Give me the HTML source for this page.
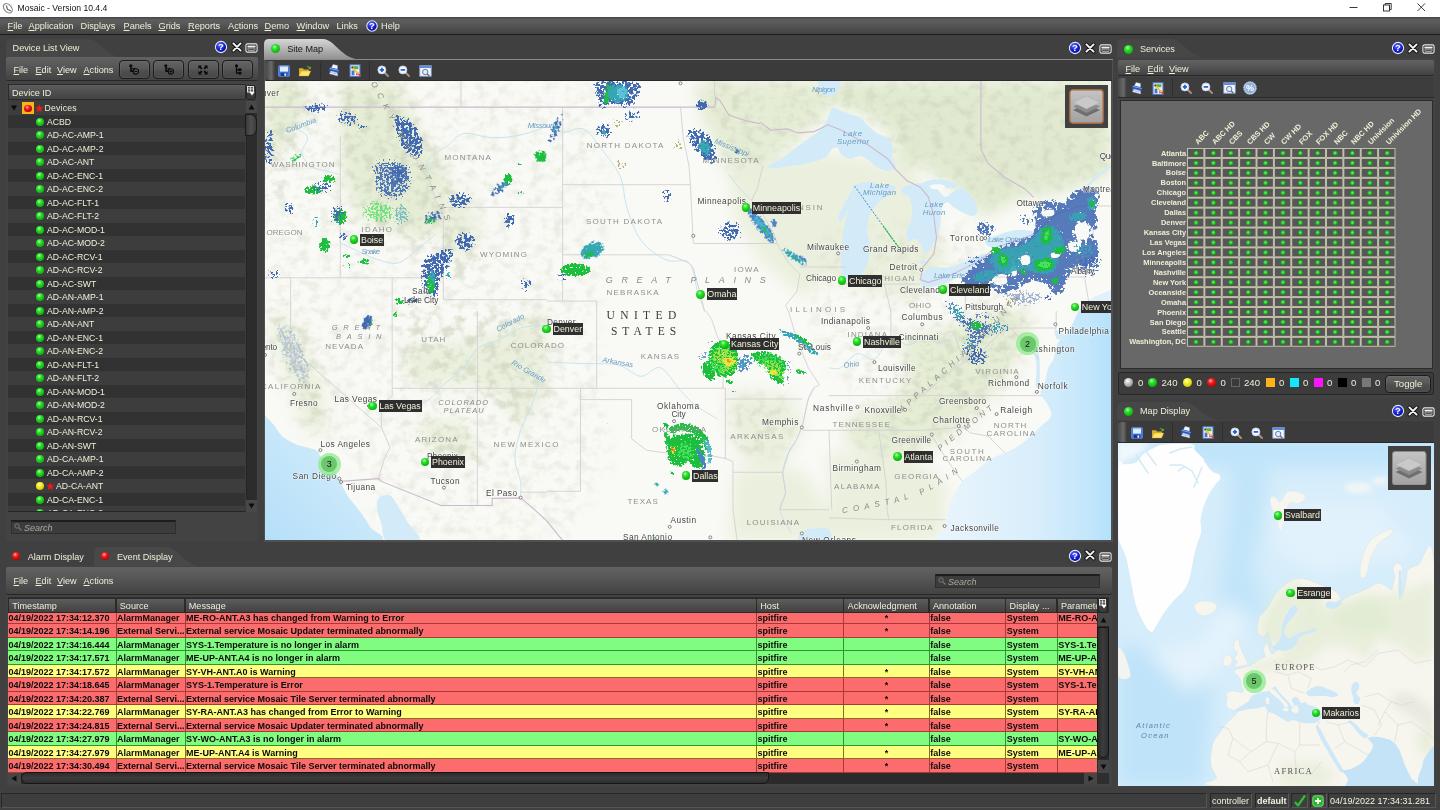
<!DOCTYPE html>
<html lang="en"><head><meta charset="utf-8"><title>Mosaic - Version 10.4.4</title>
<style>
*{box-sizing:border-box;margin:0;padding:0}
html,body{width:1440px;height:810px;overflow:hidden;background:#404040}
body{font-family:"Liberation Sans",sans-serif;font-size:9px;color:#ecebd6;position:relative;opacity:.9999}
.a{position:absolute}
.t{position:absolute;white-space:nowrap;line-height:12px}
u{text-decoration:underline;text-underline-offset:1px}
#title{left:0;top:0;width:1440px;height:17px;background:#fff;color:#111}
#menubar{left:0;top:17px;width:1440px;height:18px;background:linear-gradient(#444 0,#5e5e5e 16%,#585858 40%,#4b4b4b 75%,#434343);border-bottom:1px solid #1c1c1c}
#menubar .t{top:3px;font-size:9.2px;color:#efeed8}
.panel{position:absolute;background:#424242}
.tabstrip{position:absolute;height:19px}
.pmenu{position:absolute;background:linear-gradient(#626262,#575757 40%,#4b4b4b 75%,#434343);border-bottom:1px solid #262626;border-radius:2px}
.pmenu .t{color:#efeed8}
.tool{position:absolute;background:#3d3d3d;border-bottom:1px solid #2a2a2a}
.btn{position:absolute;border:1px solid #1c1c1c;border-radius:4px;background:linear-gradient(#646464,#585858 45%,#4e4e4e 60%,#484848);box-shadow:inset 0 0 0 1px rgba(255,255,255,.05)}
.hdr{position:absolute;background:linear-gradient(#5e5e5e,#4e4e4e 50%,#434343);border:1px solid #2a2a2a;color:#efeed8}
.dot{position:absolute;border-radius:50%}
.g{background:radial-gradient(circle at 40% 32%,#b4ffb4 0,#2fe02f 28%,#12c212 60%,#0a8a0a 100%)}
.r{background:radial-gradient(circle at 40% 32%,#ffb4b4 0,#f02020 30%,#d00808 60%,#800 100%)}
.y{background:radial-gradient(circle at 40% 32%,#ffffc8 0,#f4f030 30%,#e0d810 60%,#8a8400 100%)}
.w{background:radial-gradient(circle at 40% 32%,#fff 0,#d0d0d0 30%,#a8a8a8 60%,#666 100%)}
.lbl{position:absolute;background:#2f2f2f;color:#f1f0d8;font-size:8.9px;line-height:12px;height:12px;padding:0 .8px;white-space:nowrap}
.search{position:absolute;background:#3c3c3c;border:1px solid #2e2e2e;border-top:2px solid #1e1e1e;color:#a8a898;font-style:italic;font-size:9px}
</style></head>
<body>

<div class="a" id="title">
<svg class="a" style="left:1.5px;top:2px" width="12" height="13" viewBox="0 0 12 13"><ellipse cx="5.800" cy="6.200" rx="3.600" ry="5.300" transform="rotate(-42 5.800 6.200)" fill="none" stroke="#8c8c8c" stroke-width="1.200"/><path d="M4.400 3.400 q.2 2.600 1.400 4.200 q1.600 .2 3 1.400" fill="none" stroke="#777" stroke-width="1.300"/><path d="M8.600 3.200 l1.600-1" stroke="#bbb" stroke-width=".7"/></svg>
<div class="t" style="left:17.5px;top:1.8px;font-size:8.6px;color:#111">Mosaic - Version 10.4.4</div>
<svg class="a" style="left:1347.5px;top:2.3px" width="12" height="11" viewBox="0 0 12 11"><path d="M1.500 5.500 h8" stroke="#222" stroke-width=".9"/></svg>
<svg class="a" style="left:1381.5px;top:2.3px" width="12" height="11" viewBox="0 0 12 11"><rect x="1.500" y="3" width="6" height="6" fill="none" stroke="#222" stroke-width=".9"/><path d="M3.200 3 v-1.500 h6 v6 h-1.500" fill="none" stroke="#222" stroke-width=".9"/></svg>
<svg class="a" style="left:1416px;top:2.3px" width="12" height="11" viewBox="0 0 12 11"><path d="M1.500 1.500 L9 9 M9 1.500 L1.500 9" stroke="#222" stroke-width=".9"/></svg>
</div>
<div class="a" id="menubar">
<div class="t" style="left:7.5px;top:3px;"><u>F</u>ile</div>
<div class="t" style="left:28.5px;top:3px;"><u>A</u>pplication</div>
<div class="t" style="left:80.5px;top:3px;">Dis<u>p</u>lays</div>
<div class="t" style="left:123.5px;top:3px;"><u>P</u>anels</div>
<div class="t" style="left:158.5px;top:3px;"><u>G</u>rids</div>
<div class="t" style="left:188px;top:3px;"><u>R</u>eports</div>
<div class="t" style="left:228px;top:3px;">A<u>c</u>tions</div>
<div class="t" style="left:264.5px;top:3px;"><u>D</u>emo</div>
<div class="t" style="left:296.5px;top:3px;"><u>W</u>indow</div>
<div class="t" style="left:336.5px;top:3px;">Links</div>
<div class="t" style="left:381px;top:3px;">Help</div>
<svg class="a" style="left:364.5px;top:1.5px" width="14" height="14" viewBox="0 0 14 14"><defs><radialGradient id="hg371_8" cx="40%" cy="30%" r="75%"><stop offset="0" stop-color="#5a6cff"/><stop offset=".55" stop-color="#1420d8"/><stop offset="1" stop-color="#060a80"/></radialGradient></defs><circle cx="7" cy="7" r="5.2" fill="url(#hg371_8)" stroke="#e8e8f4" stroke-width="1.1"/><text x="7" y="10.3" text-anchor="middle" font-family="Liberation Sans,sans-serif" font-weight="bold" font-size="9.5" fill="#fff">?</text></svg>
</div>
<div class="a" style="left:0;top:789px;width:1440px;height:21px;background:#404040"></div>
<div class="a" style="left:1px;top:793px;width:1206px;height:15px;background:#3e3e3e;border:1px solid #262626;border-right-color:#555;border-bottom-color:#555"></div>
<div class="a" style="left:1210px;top:793px;width:42px;height:15px;background:#3e3e3e;border:1px solid #262626;border-right-color:#585858;border-bottom-color:#585858"></div><div class="t" style="left:1212px;top:794.5px;color:#f2f2e2;font-size:9px;">controller</div>
<div class="a" style="left:1255px;top:793px;width:34px;height:15px;background:#3e3e3e;border:1px solid #262626;border-right-color:#585858;border-bottom-color:#585858"></div><div class="t" style="left:1257px;top:794.5px;color:#f2f2e2;font-size:9px;font-weight:bold;">default</div>
<div class="a" style="left:1291px;top:793px;width:17px;height:15px;background:#3e3e3e;border:1px solid #262626;border-right-color:#585858;border-bottom-color:#585858"></div><div class="t" style="left:1293px;top:794.5px;color:#f2f2e2;font-size:9px;"></div>
<svg class="a" style="left:1293px;top:794px" width="14" height="13" viewBox="0 0 14 13"><path d="M2 8 L5 11.500 L12 1.500" fill="none" stroke="#2fc02f" stroke-width="2.200" stroke-linejoin="round"/></svg>
<div class="a" style="left:1310px;top:793px;width:17px;height:15px;background:#3e3e3e;border:1px solid #262626;border-right-color:#585858;border-bottom-color:#585858"></div><div class="t" style="left:1312px;top:794.5px;color:#f2f2e2;font-size:9px;"></div>
<svg class="a" style="left:1312px;top:795px" width="12" height="12" viewBox="0 0 12 12"><rect x=".8" y=".8" width="10.400" height="10.400" rx="2" fill="#25b825" stroke="#9be89b" stroke-width=".8"/><path d="M3 6 h6 M6 3 v6" stroke="#fff" stroke-width="1.800"/></svg>
<div class="a" style="left:1328px;top:793px;width:108px;height:15px;background:#3e3e3e;border:1px solid #262626;border-right-color:#585858;border-bottom-color:#585858"></div><div class="t" style="left:1330px;top:794.5px;color:#f2f2e2;font-size:9px;">04/19/2022 17:34:31.281</div>
<svg class="a" style="left:6px;top:39px" width="120" height="19" viewBox="0 0 120 19"><path d="M0 19 V5 Q0 0 5 0 H82 C94 0 100 19 120 19 Z" fill="#474747"/></svg>
<div class="t" style="left:12.6px;top:41.5px;font-size:9.15px;color:#efeed8">Device List View</div>
<svg class="a" style="left:214px;top:40px" width="14" height="14" viewBox="0 0 14 14"><defs><radialGradient id="hg221_47" cx="40%" cy="30%" r="75%"><stop offset="0" stop-color="#5a6cff"/><stop offset=".55" stop-color="#1420d8"/><stop offset="1" stop-color="#060a80"/></radialGradient></defs><circle cx="7" cy="7" r="5.6" fill="url(#hg221_47)" stroke="#e8e8f4" stroke-width="1.1"/><text x="7" y="10.3" text-anchor="middle" font-family="Liberation Sans,sans-serif" font-weight="bold" font-size="9.5" fill="#fff">?</text></svg><svg class="a" style="left:230.5px;top:40.5px" width="12" height="12" viewBox="0 0 12 12"><path d="M2.400 2.400 L9.600 9.600 M9.600 2.400 L2.400 9.600" stroke="#161616" stroke-width="3.800" stroke-linecap="round"/><path d="M2.400 2.400 L9.600 9.600 M9.600 2.400 L2.400 9.600" stroke="#f6f6f6" stroke-width="1.900" stroke-linecap="round"/></svg><svg class="a" style="left:245.0px;top:43px" width="13" height="10" viewBox="0 0 13 10"><rect x=".9" y=".9" width="11.200" height="8.200" rx="1.600" fill="#2c2c2c" stroke="#e8e8e8" stroke-width="1.100"/><rect x="2.400" y="2.600" width="8.200" height="1.800" fill="#f0f0f0"/><rect x="2.900" y="5" width="7.200" height="2.400" rx=".6" fill="#4a4a4a" stroke="#d8d8d8" stroke-width=".7"/></svg>
<div class="panel" style="left:6px;top:57px;width:252px;height:484px;background:#434343"></div>
<div class="pmenu" style="left:6px;top:57px;width:252px;height:24px"></div>
<div class="t" style="left:13.5px;top:63.5px;color:#efeed8;font-size:9.1px"><u>F</u>ile</div>
<div class="t" style="left:35.5px;top:63.5px;color:#efeed8;font-size:9.1px"><u>E</u>dit</div>
<div class="t" style="left:57px;top:63.5px;color:#efeed8;font-size:9.1px"><u>V</u>iew</div>
<div class="t" style="left:83.5px;top:63.5px;color:#efeed8;font-size:9.1px"><u>A</u>ctions</div>
<div class="btn" style="left:118.5px;top:60px;width:31px;height:19px"></div><svg class="a" style="left:129.0px;top:64.3px" width="10" height="10.8" viewBox="0 0 12 13"><circle cx="2.200" cy="2.200" r="1.900" fill="#0a0a0a"/><path d="M2.200 3.500 V9 H5" fill="none" stroke="#0a0a0a" stroke-width="1.500"/><rect x="3.200" y="5.200" width="3.400" height="3" fill="none" stroke="#0a0a0a" stroke-width="1"/><circle cx="8.300" cy="9" r="3.200" fill="#555" stroke="#0a0a0a" stroke-width="1.300"/><path d="M6.500 9 h3.600" stroke="#0a0a0a" stroke-width="1.200"/></svg>
<div class="btn" style="left:153px;top:60px;width:31px;height:19px"></div><svg class="a" style="left:163.5px;top:64.3px" width="10" height="10.8" viewBox="0 0 12 13"><circle cx="2.200" cy="2.200" r="1.900" fill="#0a0a0a"/><path d="M2.200 3.500 V9 H5" fill="none" stroke="#0a0a0a" stroke-width="1.500"/><rect x="3.200" y="5.200" width="3.400" height="3" fill="none" stroke="#0a0a0a" stroke-width="1"/><circle cx="8.300" cy="9" r="3.200" fill="#555" stroke="#0a0a0a" stroke-width="1.300"/><path d="M6.500 9 h3.600" stroke="#0a0a0a" stroke-width="1.200"/><path d="M8.300 7.200 v3.600" stroke="#0a0a0a" stroke-width="1.200"/></svg>
<div class="btn" style="left:187.5px;top:60px;width:31px;height:19px"></div><svg class="a" style="left:198.0px;top:64.5px" width="10" height="10" viewBox="0 0 12 12"><path d="M.5 .5 h4.200 l-1.300 1.300 l2 2 l-1.600 1.600 l-2-2 l-1.300 1.300z M11.500 .5 v4.200 l-1.300-1.300 l-2 2 l-1.600-1.600 l2-2 l-1.300-1.300z M.5 11.500 v-4.200 l1.300 1.300 l2-2 l1.600 1.600 l-2 2 l1.300 1.300z M11.500 11.500 h-4.200 l1.300-1.300 l-2-2 l1.600-1.600 l2 2 l1.300-1.300z" fill="#0a0a0a"/></svg>
<div class="btn" style="left:222px;top:60px;width:31px;height:19px"></div><svg class="a" style="left:232.5px;top:64.3px" width="10" height="10.8" viewBox="0 0 12 13"><circle cx="4.200" cy="2.200" r="1.900" fill="#0a0a0a"/><path d="M4.200 3.500 V11 H7 M4.200 7 H7" fill="none" stroke="#0a0a0a" stroke-width="1.500"/><rect x="6.500" y="5.200" width="3.600" height="3.200" fill="#0a0a0a"/><rect x="6.500" y="9.400" width="3.600" height="3.200" fill="#0a0a0a"/></svg>
<div class="hdr" style="left:8px;top:84px;width:238px;height:16px"></div>
<div class="t" style="left:12px;top:86.5px;color:#efeed8;font-size:9.1px">Device ID</div>
<div class="a" style="left:246px;top:85px;width:10px;height:15px;background:#3a3a3a;border:1px solid #222;border-radius:3px"></div><svg class="a" style="left:247px;top:86px" width="8" height="11" viewBox="0 0 8 11"><rect x=".5" y=".5" width="6" height="5.500" fill="#555" stroke="#eee" stroke-width=".9"/><path d="M.5 3 h6 M3.500 .5 v5.500" stroke="#eee" stroke-width=".7"/><path d="M2.500 6 h5 l-2.500 3.500z" fill="#fff"/></svg>
<div class="a" style="left:8px;top:100px;width:249px;height:412px;background:#3c3c3c;overflow:hidden;border-bottom:1px solid #262626">
<div class="a" style="left:0;top:1.25px;width:237px;height:13.5px;background:#3d3d3d"></div>
<div class="a" style="left:0;top:14.75px;width:237px;height:13.5px;background:#323232"></div>
<div class="a" style="left:0;top:28.25px;width:237px;height:13.5px;background:#3d3d3d"></div>
<div class="a" style="left:0;top:41.75px;width:237px;height:13.5px;background:#323232"></div>
<div class="a" style="left:0;top:55.25px;width:237px;height:13.5px;background:#3d3d3d"></div>
<div class="a" style="left:0;top:68.75px;width:237px;height:13.5px;background:#323232"></div>
<div class="a" style="left:0;top:82.25px;width:237px;height:13.5px;background:#3d3d3d"></div>
<div class="a" style="left:0;top:95.75px;width:237px;height:13.5px;background:#323232"></div>
<div class="a" style="left:0;top:109.25px;width:237px;height:13.5px;background:#3d3d3d"></div>
<div class="a" style="left:0;top:122.75px;width:237px;height:13.5px;background:#323232"></div>
<div class="a" style="left:0;top:136.25px;width:237px;height:13.5px;background:#3d3d3d"></div>
<div class="a" style="left:0;top:149.75px;width:237px;height:13.5px;background:#323232"></div>
<div class="a" style="left:0;top:163.25px;width:237px;height:13.5px;background:#3d3d3d"></div>
<div class="a" style="left:0;top:176.75px;width:237px;height:13.5px;background:#323232"></div>
<div class="a" style="left:0;top:190.25px;width:237px;height:13.5px;background:#3d3d3d"></div>
<div class="a" style="left:0;top:203.75px;width:237px;height:13.5px;background:#323232"></div>
<div class="a" style="left:0;top:217.25px;width:237px;height:13.5px;background:#3d3d3d"></div>
<div class="a" style="left:0;top:230.75px;width:237px;height:13.5px;background:#323232"></div>
<div class="a" style="left:0;top:244.25px;width:237px;height:13.5px;background:#3d3d3d"></div>
<div class="a" style="left:0;top:257.75px;width:237px;height:13.5px;background:#323232"></div>
<div class="a" style="left:0;top:271.25px;width:237px;height:13.5px;background:#3d3d3d"></div>
<div class="a" style="left:0;top:284.75px;width:237px;height:13.5px;background:#323232"></div>
<div class="a" style="left:0;top:298.25px;width:237px;height:13.5px;background:#3d3d3d"></div>
<div class="a" style="left:0;top:311.75px;width:237px;height:13.5px;background:#323232"></div>
<div class="a" style="left:0;top:325.25px;width:237px;height:13.5px;background:#3d3d3d"></div>
<div class="a" style="left:0;top:338.75px;width:237px;height:13.5px;background:#323232"></div>
<div class="a" style="left:0;top:352.25px;width:237px;height:13.5px;background:#3d3d3d"></div>
<div class="a" style="left:0;top:365.75px;width:237px;height:13.5px;background:#323232"></div>
<div class="a" style="left:0;top:379.25px;width:237px;height:13.5px;background:#3d3d3d"></div>
<div class="a" style="left:0;top:392.75px;width:237px;height:13.5px;background:#323232"></div>
<div class="a" style="left:0;top:406.25px;width:237px;height:13.5px;background:#3d3d3d"></div>
<svg class="a" style="left:3px;top:5px" width="6" height="6" viewBox="0 0 6 6"><path d="M0 .5 H6 L3 5.500Z" fill="#0a0a0a"/></svg>
<div class="a" style="left:13.700px;top:2px;width:12px;height:12px;background:#fdb415"></div>
<div class="dot r" style="left:16.200px;top:4.500px;width:7.500px;height:7.500px"></div>
<svg class="a" style="left:26.5px;top:3.5px" width="8.5" height="8.5" viewBox="0 0 10 10"><path d="M5 .3 L6.300 3.600 L9.800 3.800 L7.100 6 L8 9.500 L5 7.600 L2 9.500 L2.900 6 L.2 3.800 L3.700 3.600Z" fill="#f01818"/></svg>
<div class="t" style="left:36.5px;top:2px;font-size:8.7px;color:#f1f0da;letter-spacing:.2px">Devices</div>
<div class="dot g" style="left:27.500px;top:17.5px;width:8px;height:8px"></div>
<div class="t" style="left:39px;top:15.5px;font-size:8.7px;color:#f1f0da">ACBD</div>
<div class="dot g" style="left:27.500px;top:31.0px;width:8px;height:8px"></div>
<div class="t" style="left:39px;top:29.0px;font-size:8.7px;color:#f1f0da">AD-AC-AMP-1</div>
<div class="dot g" style="left:27.500px;top:44.5px;width:8px;height:8px"></div>
<div class="t" style="left:39px;top:42.5px;font-size:8.7px;color:#f1f0da">AD-AC-AMP-2</div>
<div class="dot g" style="left:27.500px;top:58.0px;width:8px;height:8px"></div>
<div class="t" style="left:39px;top:56.0px;font-size:8.7px;color:#f1f0da">AD-AC-ANT</div>
<div class="dot g" style="left:27.500px;top:71.5px;width:8px;height:8px"></div>
<div class="t" style="left:39px;top:69.5px;font-size:8.7px;color:#f1f0da">AD-AC-ENC-1</div>
<div class="dot g" style="left:27.500px;top:85.0px;width:8px;height:8px"></div>
<div class="t" style="left:39px;top:83.0px;font-size:8.7px;color:#f1f0da">AD-AC-ENC-2</div>
<div class="dot g" style="left:27.500px;top:98.5px;width:8px;height:8px"></div>
<div class="t" style="left:39px;top:96.5px;font-size:8.7px;color:#f1f0da">AD-AC-FLT-1</div>
<div class="dot g" style="left:27.500px;top:112.0px;width:8px;height:8px"></div>
<div class="t" style="left:39px;top:110.0px;font-size:8.7px;color:#f1f0da">AD-AC-FLT-2</div>
<div class="dot g" style="left:27.500px;top:125.5px;width:8px;height:8px"></div>
<div class="t" style="left:39px;top:123.5px;font-size:8.7px;color:#f1f0da">AD-AC-MOD-1</div>
<div class="dot g" style="left:27.500px;top:139.0px;width:8px;height:8px"></div>
<div class="t" style="left:39px;top:137.0px;font-size:8.7px;color:#f1f0da">AD-AC-MOD-2</div>
<div class="dot g" style="left:27.500px;top:152.5px;width:8px;height:8px"></div>
<div class="t" style="left:39px;top:150.5px;font-size:8.7px;color:#f1f0da">AD-AC-RCV-1</div>
<div class="dot g" style="left:27.500px;top:166.0px;width:8px;height:8px"></div>
<div class="t" style="left:39px;top:164.0px;font-size:8.7px;color:#f1f0da">AD-AC-RCV-2</div>
<div class="dot g" style="left:27.500px;top:179.5px;width:8px;height:8px"></div>
<div class="t" style="left:39px;top:177.5px;font-size:8.7px;color:#f1f0da">AD-AC-SWT</div>
<div class="dot g" style="left:27.500px;top:193.0px;width:8px;height:8px"></div>
<div class="t" style="left:39px;top:191.0px;font-size:8.7px;color:#f1f0da">AD-AN-AMP-1</div>
<div class="dot g" style="left:27.500px;top:206.5px;width:8px;height:8px"></div>
<div class="t" style="left:39px;top:204.5px;font-size:8.7px;color:#f1f0da">AD-AN-AMP-2</div>
<div class="dot g" style="left:27.500px;top:220.0px;width:8px;height:8px"></div>
<div class="t" style="left:39px;top:218.0px;font-size:8.7px;color:#f1f0da">AD-AN-ANT</div>
<div class="dot g" style="left:27.500px;top:233.5px;width:8px;height:8px"></div>
<div class="t" style="left:39px;top:231.5px;font-size:8.7px;color:#f1f0da">AD-AN-ENC-1</div>
<div class="dot g" style="left:27.500px;top:247.0px;width:8px;height:8px"></div>
<div class="t" style="left:39px;top:245.0px;font-size:8.7px;color:#f1f0da">AD-AN-ENC-2</div>
<div class="dot g" style="left:27.500px;top:260.5px;width:8px;height:8px"></div>
<div class="t" style="left:39px;top:258.5px;font-size:8.7px;color:#f1f0da">AD-AN-FLT-1</div>
<div class="dot g" style="left:27.500px;top:274.0px;width:8px;height:8px"></div>
<div class="t" style="left:39px;top:272.0px;font-size:8.7px;color:#f1f0da">AD-AN-FLT-2</div>
<div class="dot g" style="left:27.500px;top:287.5px;width:8px;height:8px"></div>
<div class="t" style="left:39px;top:285.5px;font-size:8.7px;color:#f1f0da">AD-AN-MOD-1</div>
<div class="dot g" style="left:27.500px;top:301.0px;width:8px;height:8px"></div>
<div class="t" style="left:39px;top:299.0px;font-size:8.7px;color:#f1f0da">AD-AN-MOD-2</div>
<div class="dot g" style="left:27.500px;top:314.5px;width:8px;height:8px"></div>
<div class="t" style="left:39px;top:312.5px;font-size:8.7px;color:#f1f0da">AD-AN-RCV-1</div>
<div class="dot g" style="left:27.500px;top:328.0px;width:8px;height:8px"></div>
<div class="t" style="left:39px;top:326.0px;font-size:8.7px;color:#f1f0da">AD-AN-RCV-2</div>
<div class="dot g" style="left:27.500px;top:341.5px;width:8px;height:8px"></div>
<div class="t" style="left:39px;top:339.5px;font-size:8.7px;color:#f1f0da">AD-AN-SWT</div>
<div class="dot g" style="left:27.500px;top:355.0px;width:8px;height:8px"></div>
<div class="t" style="left:39px;top:353.0px;font-size:8.7px;color:#f1f0da">AD-CA-AMP-1</div>
<div class="dot g" style="left:27.500px;top:368.5px;width:8px;height:8px"></div>
<div class="t" style="left:39px;top:366.5px;font-size:8.7px;color:#f1f0da">AD-CA-AMP-2</div>
<div class="dot y" style="left:27.500px;top:382.0px;width:8px;height:8px"></div>
<svg class="a" style="left:37.5px;top:381.5px" width="8.5" height="8.5" viewBox="0 0 10 10"><path d="M5 .3 L6.300 3.600 L9.800 3.800 L7.100 6 L8 9.500 L5 7.600 L2 9.500 L2.900 6 L.2 3.800 L3.700 3.600Z" fill="#f01818"/></svg>
<div class="t" style="left:48px;top:380.0px;font-size:8.7px;color:#f1f0da">AD-CA-ANT</div>
<div class="dot g" style="left:27.500px;top:395.5px;width:8px;height:8px"></div>
<div class="t" style="left:39px;top:393.5px;font-size:8.7px;color:#f1f0da">AD-CA-ENC-1</div>
<div class="dot g" style="left:27.500px;top:409.0px;width:8px;height:8px"></div>
<div class="t" style="left:39px;top:407.0px;font-size:8.7px;color:#f1f0da">AD-CA-ENC-2</div>
</div>
<div class="a" style="left:246px;top:101px;width:11px;height:411px;background:#2c2c2c;border-left:1px solid #242424"></div><div class="a" style="left:246px;top:101px;width:11px;height:12px;background:#484848"></div><svg class="a" style="left:248px;top:104px" width="7" height="6" viewBox="0 0 7 6"><path d="M3.500 .5 L6.500 5.500 H.5Z" fill="#0c0c0c"/></svg><div class="a" style="left:246px;top:500px;width:11px;height:12px;background:#484848"></div><svg class="a" style="left:248px;top:503px" width="7" height="6" viewBox="0 0 7 6"><path d="M3.500 5.500 L6.500 .5 H.5Z" fill="#0c0c0c"/></svg><div class="a" style="left:245px;top:114px;width:12px;height:22px;background:linear-gradient(90deg,#3a3a3a,#505050 50%,#3c3c3c);border:1px solid #1a1a1a;border-radius:0 7px 7px 0"></div>
<div class="search" style="left:11px;top:520px;width:165px;height:14px"></div>
<svg class="a" style="left:14px;top:523px" width="8" height="8" viewBox="0 0 8 8"><circle cx="3" cy="3" r="2.200" fill="none" stroke="#777" stroke-width="1"/><path d="M4.600 4.600 L7.500 7.500" stroke="#777" stroke-width="1.200"/></svg>
<div class="t" style="left:24px;top:521.5px;font-style:italic;color:#aaa99a;font-size:9px">Search</div>
<svg class="a" style="left:94px;top:547px" width="112" height="20" viewBox="0 0 112 20"><path d="M0 20 V5 Q0 0 5 0 H72 C84 0 90 20 112 20 Z" fill="#484848"/></svg>
<div class="dot r" style="left:11.500px;top:552px;width:8px;height:8px"></div>
<div class="t" style="left:27.7px;top:550.5px;font-size:9.1px;color:#efeed8">Alarm Display</div>
<div class="dot r" style="left:100.500px;top:552px;width:8px;height:8px"></div>
<div class="t" style="left:117px;top:550.5px;font-size:9.1px;color:#efeed8">Event Display</div>
<svg class="a" style="left:1067.5px;top:548.5px" width="14" height="14" viewBox="0 0 14 14"><defs><radialGradient id="hg1074_555" cx="40%" cy="30%" r="75%"><stop offset="0" stop-color="#5a6cff"/><stop offset=".55" stop-color="#1420d8"/><stop offset="1" stop-color="#060a80"/></radialGradient></defs><circle cx="7" cy="7" r="5.6" fill="url(#hg1074_555)" stroke="#e8e8f4" stroke-width="1.1"/><text x="7" y="10.3" text-anchor="middle" font-family="Liberation Sans,sans-serif" font-weight="bold" font-size="9.5" fill="#fff">?</text></svg><svg class="a" style="left:1084.0px;top:549.0px" width="12" height="12" viewBox="0 0 12 12"><path d="M2.400 2.400 L9.600 9.600 M9.600 2.400 L2.400 9.600" stroke="#161616" stroke-width="3.800" stroke-linecap="round"/><path d="M2.400 2.400 L9.600 9.600 M9.600 2.400 L2.400 9.600" stroke="#f6f6f6" stroke-width="1.900" stroke-linecap="round"/></svg><svg class="a" style="left:1098.5px;top:551.5px" width="13" height="10" viewBox="0 0 13 10"><rect x=".9" y=".9" width="11.200" height="8.200" rx="1.600" fill="#2c2c2c" stroke="#e8e8e8" stroke-width="1.100"/><rect x="2.400" y="2.600" width="8.200" height="1.800" fill="#f0f0f0"/><rect x="2.900" y="5" width="7.200" height="2.400" rx=".6" fill="#4a4a4a" stroke="#d8d8d8" stroke-width=".7"/></svg>
<div class="panel" style="left:6px;top:566px;width:1106px;height:221px;background:#434343"></div>
<div class="pmenu" style="left:6px;top:567px;width:1106px;height:28px"></div>
<div class="t" style="left:13.5px;top:575px;color:#efeed8;font-size:9.1px"><u>F</u>ile</div>
<div class="t" style="left:35.5px;top:575px;color:#efeed8;font-size:9.1px"><u>E</u>dit</div>
<div class="t" style="left:57px;top:575px;color:#efeed8;font-size:9.1px"><u>V</u>iew</div>
<div class="t" style="left:83.5px;top:575px;color:#efeed8;font-size:9.1px"><u>A</u>ctions</div>
<div class="search" style="left:935px;top:574px;width:165px;height:14px"></div>
<svg class="a" style="left:938px;top:577px" width="8" height="8" viewBox="0 0 8 8"><circle cx="3" cy="3" r="2.200" fill="none" stroke="#777" stroke-width="1"/><path d="M4.600 4.600 L7.500 7.500" stroke="#777" stroke-width="1.200"/></svg>
<div class="t" style="left:948px;top:575.5px;font-style:italic;color:#aaa99a;font-size:9px">Search</div>
<div class="a" style="left:8px;top:597px;width:1101px;height:187px;background:#2e2e2e"></div>
<div class="a" style="left:8px;top:612px;width:1089.300px;height:160.500px;overflow:hidden;font-weight:bold;color:#0a0a0a;font-size:9px">
<div class="a" style="left:0;top:-1.5px;width:1090px;height:13.500px;background:#fc6c6c;border-bottom:1px solid #a83a3a">
<div class="a" style="left:0px;top:0;width:107.5px;height:13.500px;overflow:hidden;white-space:nowrap;line-height:14px;padding-left:0.5px;">04/19/2022 17:34:12.370</div>
<div class="a" style="left:107.5px;top:0;width:69.0px;height:13.500px;overflow:hidden;white-space:nowrap;line-height:14px;padding-left:0.5px;border-left:1px solid #a83a3a;">AlarmManager</div>
<div class="a" style="left:176.5px;top:0;width:571.5px;height:13.500px;overflow:hidden;white-space:nowrap;line-height:14px;padding-left:0.5px;border-left:1px solid #a83a3a;">ME-RO-ANT.A3 has changed from Warning to Error</div>
<div class="a" style="left:748px;top:0;width:87.29999999999995px;height:13.500px;overflow:hidden;white-space:nowrap;line-height:14px;padding-left:0.5px;border-left:1px solid #a83a3a;">spitfire</div>
<div class="a" style="left:835.3px;top:0;width:85.40000000000009px;height:13.500px;overflow:hidden;white-space:nowrap;line-height:14px;padding-left:0px;text-align:center;border-left:1px solid #a83a3a;">*</div>
<div class="a" style="left:920.7px;top:0;width:76.59999999999991px;height:13.500px;overflow:hidden;white-space:nowrap;line-height:14px;padding-left:0.5px;border-left:1px solid #a83a3a;">false</div>
<div class="a" style="left:997.3px;top:0;width:51.40000000000009px;height:13.500px;overflow:hidden;white-space:nowrap;line-height:14px;padding-left:0.5px;border-left:1px solid #a83a3a;">System</div>
<div class="a" style="left:1048.7px;top:0;width:40.59999999999991px;height:13.500px;overflow:hidden;white-space:nowrap;line-height:14px;padding-left:0.5px;border-left:1px solid #a83a3a;">ME-RO-ANT.A3</div>
</div>
<div class="a" style="left:0;top:12.0px;width:1090px;height:13.500px;background:#fc6c6c;border-bottom:1px solid #a83a3a">
<div class="a" style="left:0px;top:0;width:107.5px;height:13.500px;overflow:hidden;white-space:nowrap;line-height:14px;padding-left:0.5px;">04/19/2022 17:34:14.196</div>
<div class="a" style="left:107.5px;top:0;width:69.0px;height:13.500px;overflow:hidden;white-space:nowrap;line-height:14px;padding-left:0.5px;border-left:1px solid #a83a3a;">External Servi...</div>
<div class="a" style="left:176.5px;top:0;width:571.5px;height:13.500px;overflow:hidden;white-space:nowrap;line-height:14px;padding-left:0.5px;border-left:1px solid #a83a3a;">External service Mosaic Updater terminated abnormally</div>
<div class="a" style="left:748px;top:0;width:87.29999999999995px;height:13.500px;overflow:hidden;white-space:nowrap;line-height:14px;padding-left:0.5px;border-left:1px solid #a83a3a;">spitfire</div>
<div class="a" style="left:835.3px;top:0;width:85.40000000000009px;height:13.500px;overflow:hidden;white-space:nowrap;line-height:14px;padding-left:0px;text-align:center;border-left:1px solid #a83a3a;">*</div>
<div class="a" style="left:920.7px;top:0;width:76.59999999999991px;height:13.500px;overflow:hidden;white-space:nowrap;line-height:14px;padding-left:0.5px;border-left:1px solid #a83a3a;">false</div>
<div class="a" style="left:997.3px;top:0;width:51.40000000000009px;height:13.500px;overflow:hidden;white-space:nowrap;line-height:14px;padding-left:0.5px;border-left:1px solid #a83a3a;">System</div>
<div class="a" style="left:1048.7px;top:0;width:40.59999999999991px;height:13.500px;overflow:hidden;white-space:nowrap;line-height:14px;padding-left:0.5px;border-left:1px solid #a83a3a;"></div>
</div>
<div class="a" style="left:0;top:25.5px;width:1090px;height:13.500px;background:#80fd80;border-bottom:1px solid #2f962f">
<div class="a" style="left:0px;top:0;width:107.5px;height:13.500px;overflow:hidden;white-space:nowrap;line-height:14px;padding-left:0.5px;">04/19/2022 17:34:16.444</div>
<div class="a" style="left:107.5px;top:0;width:69.0px;height:13.500px;overflow:hidden;white-space:nowrap;line-height:14px;padding-left:0.5px;border-left:1px solid #2f962f;">AlarmManager</div>
<div class="a" style="left:176.5px;top:0;width:571.5px;height:13.500px;overflow:hidden;white-space:nowrap;line-height:14px;padding-left:0.5px;border-left:1px solid #2f962f;">SYS-1.Temperature is no longer in alarm</div>
<div class="a" style="left:748px;top:0;width:87.29999999999995px;height:13.500px;overflow:hidden;white-space:nowrap;line-height:14px;padding-left:0.5px;border-left:1px solid #2f962f;">spitfire</div>
<div class="a" style="left:835.3px;top:0;width:85.40000000000009px;height:13.500px;overflow:hidden;white-space:nowrap;line-height:14px;padding-left:0px;text-align:center;border-left:1px solid #2f962f;"></div>
<div class="a" style="left:920.7px;top:0;width:76.59999999999991px;height:13.500px;overflow:hidden;white-space:nowrap;line-height:14px;padding-left:0.5px;border-left:1px solid #2f962f;">false</div>
<div class="a" style="left:997.3px;top:0;width:51.40000000000009px;height:13.500px;overflow:hidden;white-space:nowrap;line-height:14px;padding-left:0.5px;border-left:1px solid #2f962f;">System</div>
<div class="a" style="left:1048.7px;top:0;width:40.59999999999991px;height:13.500px;overflow:hidden;white-space:nowrap;line-height:14px;padding-left:0.5px;border-left:1px solid #2f962f;">SYS-1.Temperature</div>
</div>
<div class="a" style="left:0;top:39.0px;width:1090px;height:13.500px;background:#80fd80;border-bottom:1px solid #2f962f">
<div class="a" style="left:0px;top:0;width:107.5px;height:13.500px;overflow:hidden;white-space:nowrap;line-height:14px;padding-left:0.5px;">04/19/2022 17:34:17.571</div>
<div class="a" style="left:107.5px;top:0;width:69.0px;height:13.500px;overflow:hidden;white-space:nowrap;line-height:14px;padding-left:0.5px;border-left:1px solid #2f962f;">AlarmManager</div>
<div class="a" style="left:176.5px;top:0;width:571.5px;height:13.500px;overflow:hidden;white-space:nowrap;line-height:14px;padding-left:0.5px;border-left:1px solid #2f962f;">ME-UP-ANT.A4 is no longer in alarm</div>
<div class="a" style="left:748px;top:0;width:87.29999999999995px;height:13.500px;overflow:hidden;white-space:nowrap;line-height:14px;padding-left:0.5px;border-left:1px solid #2f962f;">spitfire</div>
<div class="a" style="left:835.3px;top:0;width:85.40000000000009px;height:13.500px;overflow:hidden;white-space:nowrap;line-height:14px;padding-left:0px;text-align:center;border-left:1px solid #2f962f;"></div>
<div class="a" style="left:920.7px;top:0;width:76.59999999999991px;height:13.500px;overflow:hidden;white-space:nowrap;line-height:14px;padding-left:0.5px;border-left:1px solid #2f962f;">false</div>
<div class="a" style="left:997.3px;top:0;width:51.40000000000009px;height:13.500px;overflow:hidden;white-space:nowrap;line-height:14px;padding-left:0.5px;border-left:1px solid #2f962f;">System</div>
<div class="a" style="left:1048.7px;top:0;width:40.59999999999991px;height:13.500px;overflow:hidden;white-space:nowrap;line-height:14px;padding-left:0.5px;border-left:1px solid #2f962f;">ME-UP-ANT.A4</div>
</div>
<div class="a" style="left:0;top:52.5px;width:1090px;height:13.500px;background:#fefe80;border-bottom:1px solid #8f6a24">
<div class="a" style="left:0px;top:0;width:107.5px;height:13.500px;overflow:hidden;white-space:nowrap;line-height:14px;padding-left:0.5px;">04/19/2022 17:34:17.572</div>
<div class="a" style="left:107.5px;top:0;width:69.0px;height:13.500px;overflow:hidden;white-space:nowrap;line-height:14px;padding-left:0.5px;border-left:1px solid #8f6a24;">AlarmManager</div>
<div class="a" style="left:176.5px;top:0;width:571.5px;height:13.500px;overflow:hidden;white-space:nowrap;line-height:14px;padding-left:0.5px;border-left:1px solid #8f6a24;">SY-VH-ANT.A0 is Warning</div>
<div class="a" style="left:748px;top:0;width:87.29999999999995px;height:13.500px;overflow:hidden;white-space:nowrap;line-height:14px;padding-left:0.5px;border-left:1px solid #8f6a24;">spitfire</div>
<div class="a" style="left:835.3px;top:0;width:85.40000000000009px;height:13.500px;overflow:hidden;white-space:nowrap;line-height:14px;padding-left:0px;text-align:center;border-left:1px solid #8f6a24;">*</div>
<div class="a" style="left:920.7px;top:0;width:76.59999999999991px;height:13.500px;overflow:hidden;white-space:nowrap;line-height:14px;padding-left:0.5px;border-left:1px solid #8f6a24;">false</div>
<div class="a" style="left:997.3px;top:0;width:51.40000000000009px;height:13.500px;overflow:hidden;white-space:nowrap;line-height:14px;padding-left:0.5px;border-left:1px solid #8f6a24;">System</div>
<div class="a" style="left:1048.7px;top:0;width:40.59999999999991px;height:13.500px;overflow:hidden;white-space:nowrap;line-height:14px;padding-left:0.5px;border-left:1px solid #8f6a24;">SY-VH-ANT.A0</div>
</div>
<div class="a" style="left:0;top:66.0px;width:1090px;height:13.500px;background:#fc6c6c;border-bottom:1px solid #a83a3a">
<div class="a" style="left:0px;top:0;width:107.5px;height:13.500px;overflow:hidden;white-space:nowrap;line-height:14px;padding-left:0.5px;">04/19/2022 17:34:18.645</div>
<div class="a" style="left:107.5px;top:0;width:69.0px;height:13.500px;overflow:hidden;white-space:nowrap;line-height:14px;padding-left:0.5px;border-left:1px solid #a83a3a;">AlarmManager</div>
<div class="a" style="left:176.5px;top:0;width:571.5px;height:13.500px;overflow:hidden;white-space:nowrap;line-height:14px;padding-left:0.5px;border-left:1px solid #a83a3a;">SYS-1.Temperature is Error</div>
<div class="a" style="left:748px;top:0;width:87.29999999999995px;height:13.500px;overflow:hidden;white-space:nowrap;line-height:14px;padding-left:0.5px;border-left:1px solid #a83a3a;">spitfire</div>
<div class="a" style="left:835.3px;top:0;width:85.40000000000009px;height:13.500px;overflow:hidden;white-space:nowrap;line-height:14px;padding-left:0px;text-align:center;border-left:1px solid #a83a3a;">*</div>
<div class="a" style="left:920.7px;top:0;width:76.59999999999991px;height:13.500px;overflow:hidden;white-space:nowrap;line-height:14px;padding-left:0.5px;border-left:1px solid #a83a3a;">false</div>
<div class="a" style="left:997.3px;top:0;width:51.40000000000009px;height:13.500px;overflow:hidden;white-space:nowrap;line-height:14px;padding-left:0.5px;border-left:1px solid #a83a3a;">System</div>
<div class="a" style="left:1048.7px;top:0;width:40.59999999999991px;height:13.500px;overflow:hidden;white-space:nowrap;line-height:14px;padding-left:0.5px;border-left:1px solid #a83a3a;">SYS-1.Temperature</div>
</div>
<div class="a" style="left:0;top:79.5px;width:1090px;height:13.500px;background:#fc6c6c;border-bottom:1px solid #a83a3a">
<div class="a" style="left:0px;top:0;width:107.5px;height:13.500px;overflow:hidden;white-space:nowrap;line-height:14px;padding-left:0.5px;">04/19/2022 17:34:20.387</div>
<div class="a" style="left:107.5px;top:0;width:69.0px;height:13.500px;overflow:hidden;white-space:nowrap;line-height:14px;padding-left:0.5px;border-left:1px solid #a83a3a;">External Servi...</div>
<div class="a" style="left:176.5px;top:0;width:571.5px;height:13.500px;overflow:hidden;white-space:nowrap;line-height:14px;padding-left:0.5px;border-left:1px solid #a83a3a;">External service Mosaic Tile Server terminated abnormally</div>
<div class="a" style="left:748px;top:0;width:87.29999999999995px;height:13.500px;overflow:hidden;white-space:nowrap;line-height:14px;padding-left:0.5px;border-left:1px solid #a83a3a;">spitfire</div>
<div class="a" style="left:835.3px;top:0;width:85.40000000000009px;height:13.500px;overflow:hidden;white-space:nowrap;line-height:14px;padding-left:0px;text-align:center;border-left:1px solid #a83a3a;">*</div>
<div class="a" style="left:920.7px;top:0;width:76.59999999999991px;height:13.500px;overflow:hidden;white-space:nowrap;line-height:14px;padding-left:0.5px;border-left:1px solid #a83a3a;">false</div>
<div class="a" style="left:997.3px;top:0;width:51.40000000000009px;height:13.500px;overflow:hidden;white-space:nowrap;line-height:14px;padding-left:0.5px;border-left:1px solid #a83a3a;">System</div>
<div class="a" style="left:1048.7px;top:0;width:40.59999999999991px;height:13.500px;overflow:hidden;white-space:nowrap;line-height:14px;padding-left:0.5px;border-left:1px solid #a83a3a;"></div>
</div>
<div class="a" style="left:0;top:93.0px;width:1090px;height:13.500px;background:#fefe80;border-bottom:1px solid #8f6a24">
<div class="a" style="left:0px;top:0;width:107.5px;height:13.500px;overflow:hidden;white-space:nowrap;line-height:14px;padding-left:0.5px;">04/19/2022 17:34:22.769</div>
<div class="a" style="left:107.5px;top:0;width:69.0px;height:13.500px;overflow:hidden;white-space:nowrap;line-height:14px;padding-left:0.5px;border-left:1px solid #8f6a24;">AlarmManager</div>
<div class="a" style="left:176.5px;top:0;width:571.5px;height:13.500px;overflow:hidden;white-space:nowrap;line-height:14px;padding-left:0.5px;border-left:1px solid #8f6a24;">SY-RA-ANT.A3 has changed from Error to Warning</div>
<div class="a" style="left:748px;top:0;width:87.29999999999995px;height:13.500px;overflow:hidden;white-space:nowrap;line-height:14px;padding-left:0.5px;border-left:1px solid #8f6a24;">spitfire</div>
<div class="a" style="left:835.3px;top:0;width:85.40000000000009px;height:13.500px;overflow:hidden;white-space:nowrap;line-height:14px;padding-left:0px;text-align:center;border-left:1px solid #8f6a24;">*</div>
<div class="a" style="left:920.7px;top:0;width:76.59999999999991px;height:13.500px;overflow:hidden;white-space:nowrap;line-height:14px;padding-left:0.5px;border-left:1px solid #8f6a24;">false</div>
<div class="a" style="left:997.3px;top:0;width:51.40000000000009px;height:13.500px;overflow:hidden;white-space:nowrap;line-height:14px;padding-left:0.5px;border-left:1px solid #8f6a24;">System</div>
<div class="a" style="left:1048.7px;top:0;width:40.59999999999991px;height:13.500px;overflow:hidden;white-space:nowrap;line-height:14px;padding-left:0.5px;border-left:1px solid #8f6a24;">SY-RA-ANT.A3</div>
</div>
<div class="a" style="left:0;top:106.5px;width:1090px;height:13.500px;background:#fc6c6c;border-bottom:1px solid #a83a3a">
<div class="a" style="left:0px;top:0;width:107.5px;height:13.500px;overflow:hidden;white-space:nowrap;line-height:14px;padding-left:0.5px;">04/19/2022 17:34:24.815</div>
<div class="a" style="left:107.5px;top:0;width:69.0px;height:13.500px;overflow:hidden;white-space:nowrap;line-height:14px;padding-left:0.5px;border-left:1px solid #a83a3a;">External Servi...</div>
<div class="a" style="left:176.5px;top:0;width:571.5px;height:13.500px;overflow:hidden;white-space:nowrap;line-height:14px;padding-left:0.5px;border-left:1px solid #a83a3a;">External service Mosaic Updater terminated abnormally</div>
<div class="a" style="left:748px;top:0;width:87.29999999999995px;height:13.500px;overflow:hidden;white-space:nowrap;line-height:14px;padding-left:0.5px;border-left:1px solid #a83a3a;">spitfire</div>
<div class="a" style="left:835.3px;top:0;width:85.40000000000009px;height:13.500px;overflow:hidden;white-space:nowrap;line-height:14px;padding-left:0px;text-align:center;border-left:1px solid #a83a3a;">*</div>
<div class="a" style="left:920.7px;top:0;width:76.59999999999991px;height:13.500px;overflow:hidden;white-space:nowrap;line-height:14px;padding-left:0.5px;border-left:1px solid #a83a3a;">false</div>
<div class="a" style="left:997.3px;top:0;width:51.40000000000009px;height:13.500px;overflow:hidden;white-space:nowrap;line-height:14px;padding-left:0.5px;border-left:1px solid #a83a3a;">System</div>
<div class="a" style="left:1048.7px;top:0;width:40.59999999999991px;height:13.500px;overflow:hidden;white-space:nowrap;line-height:14px;padding-left:0.5px;border-left:1px solid #a83a3a;"></div>
</div>
<div class="a" style="left:0;top:120.0px;width:1090px;height:13.500px;background:#80fd80;border-bottom:1px solid #2f962f">
<div class="a" style="left:0px;top:0;width:107.5px;height:13.500px;overflow:hidden;white-space:nowrap;line-height:14px;padding-left:0.5px;">04/19/2022 17:34:27.979</div>
<div class="a" style="left:107.5px;top:0;width:69.0px;height:13.500px;overflow:hidden;white-space:nowrap;line-height:14px;padding-left:0.5px;border-left:1px solid #2f962f;">AlarmManager</div>
<div class="a" style="left:176.5px;top:0;width:571.5px;height:13.500px;overflow:hidden;white-space:nowrap;line-height:14px;padding-left:0.5px;border-left:1px solid #2f962f;">SY-WO-ANT.A3 is no longer in alarm</div>
<div class="a" style="left:748px;top:0;width:87.29999999999995px;height:13.500px;overflow:hidden;white-space:nowrap;line-height:14px;padding-left:0.5px;border-left:1px solid #2f962f;">spitfire</div>
<div class="a" style="left:835.3px;top:0;width:85.40000000000009px;height:13.500px;overflow:hidden;white-space:nowrap;line-height:14px;padding-left:0px;text-align:center;border-left:1px solid #2f962f;"></div>
<div class="a" style="left:920.7px;top:0;width:76.59999999999991px;height:13.500px;overflow:hidden;white-space:nowrap;line-height:14px;padding-left:0.5px;border-left:1px solid #2f962f;">false</div>
<div class="a" style="left:997.3px;top:0;width:51.40000000000009px;height:13.500px;overflow:hidden;white-space:nowrap;line-height:14px;padding-left:0.5px;border-left:1px solid #2f962f;">System</div>
<div class="a" style="left:1048.7px;top:0;width:40.59999999999991px;height:13.500px;overflow:hidden;white-space:nowrap;line-height:14px;padding-left:0.5px;border-left:1px solid #2f962f;">SY-WO-ANT.A3</div>
</div>
<div class="a" style="left:0;top:133.5px;width:1090px;height:13.500px;background:#fefe80;border-bottom:1px solid #8f6a24">
<div class="a" style="left:0px;top:0;width:107.5px;height:13.500px;overflow:hidden;white-space:nowrap;line-height:14px;padding-left:0.5px;">04/19/2022 17:34:27.979</div>
<div class="a" style="left:107.5px;top:0;width:69.0px;height:13.500px;overflow:hidden;white-space:nowrap;line-height:14px;padding-left:0.5px;border-left:1px solid #8f6a24;">AlarmManager</div>
<div class="a" style="left:176.5px;top:0;width:571.5px;height:13.500px;overflow:hidden;white-space:nowrap;line-height:14px;padding-left:0.5px;border-left:1px solid #8f6a24;">ME-UP-ANT.A4 is Warning</div>
<div class="a" style="left:748px;top:0;width:87.29999999999995px;height:13.500px;overflow:hidden;white-space:nowrap;line-height:14px;padding-left:0.5px;border-left:1px solid #8f6a24;">spitfire</div>
<div class="a" style="left:835.3px;top:0;width:85.40000000000009px;height:13.500px;overflow:hidden;white-space:nowrap;line-height:14px;padding-left:0px;text-align:center;border-left:1px solid #8f6a24;">*</div>
<div class="a" style="left:920.7px;top:0;width:76.59999999999991px;height:13.500px;overflow:hidden;white-space:nowrap;line-height:14px;padding-left:0.5px;border-left:1px solid #8f6a24;">false</div>
<div class="a" style="left:997.3px;top:0;width:51.40000000000009px;height:13.500px;overflow:hidden;white-space:nowrap;line-height:14px;padding-left:0.5px;border-left:1px solid #8f6a24;">System</div>
<div class="a" style="left:1048.7px;top:0;width:40.59999999999991px;height:13.500px;overflow:hidden;white-space:nowrap;line-height:14px;padding-left:0.5px;border-left:1px solid #8f6a24;">ME-UP-ANT.A4</div>
</div>
<div class="a" style="left:0;top:147.0px;width:1090px;height:13.500px;background:#fc6c6c;border-bottom:1px solid #a83a3a">
<div class="a" style="left:0px;top:0;width:107.5px;height:13.500px;overflow:hidden;white-space:nowrap;line-height:14px;padding-left:0.5px;">04/19/2022 17:34:30.494</div>
<div class="a" style="left:107.5px;top:0;width:69.0px;height:13.500px;overflow:hidden;white-space:nowrap;line-height:14px;padding-left:0.5px;border-left:1px solid #a83a3a;">External Servi...</div>
<div class="a" style="left:176.5px;top:0;width:571.5px;height:13.500px;overflow:hidden;white-space:nowrap;line-height:14px;padding-left:0.5px;border-left:1px solid #a83a3a;">External service Mosaic Tile Server terminated abnormally</div>
<div class="a" style="left:748px;top:0;width:87.29999999999995px;height:13.500px;overflow:hidden;white-space:nowrap;line-height:14px;padding-left:0.5px;border-left:1px solid #a83a3a;">spitfire</div>
<div class="a" style="left:835.3px;top:0;width:85.40000000000009px;height:13.500px;overflow:hidden;white-space:nowrap;line-height:14px;padding-left:0px;text-align:center;border-left:1px solid #a83a3a;">*</div>
<div class="a" style="left:920.7px;top:0;width:76.59999999999991px;height:13.500px;overflow:hidden;white-space:nowrap;line-height:14px;padding-left:0.5px;border-left:1px solid #a83a3a;">false</div>
<div class="a" style="left:997.3px;top:0;width:51.40000000000009px;height:13.500px;overflow:hidden;white-space:nowrap;line-height:14px;padding-left:0.5px;border-left:1px solid #a83a3a;">System</div>
<div class="a" style="left:1048.7px;top:0;width:40.59999999999991px;height:13.500px;overflow:hidden;white-space:nowrap;line-height:14px;padding-left:0.5px;border-left:1px solid #a83a3a;"></div>
</div>
</div>
<div class="hdr" style="left:8px;top:597.500px;width:108.0px;height:15.500px;overflow:hidden"></div>
<div class="a" style="left:12.3px;top:599.500px;width:102.5px;height:12px;overflow:hidden;white-space:nowrap;line-height:12px;font-size:9.1px;color:#efeed8">Timestamp</div>
<div class="hdr" style="left:115.5px;top:597.500px;width:69.5px;height:15.500px;overflow:hidden"></div>
<div class="a" style="left:119.8px;top:599.500px;width:64.0px;height:12px;overflow:hidden;white-space:nowrap;line-height:12px;font-size:9.1px;color:#efeed8">Source</div>
<div class="hdr" style="left:184.5px;top:597.500px;width:572.0px;height:15.500px;overflow:hidden"></div>
<div class="a" style="left:188.8px;top:599.500px;width:566.5px;height:12px;overflow:hidden;white-space:nowrap;line-height:12px;font-size:9.1px;color:#efeed8">Message</div>
<div class="hdr" style="left:756px;top:597.500px;width:87.79999999999995px;height:15.500px;overflow:hidden"></div>
<div class="a" style="left:760.3px;top:599.500px;width:82.29999999999995px;height:12px;overflow:hidden;white-space:nowrap;line-height:12px;font-size:9.1px;color:#efeed8">Host</div>
<div class="hdr" style="left:843.3px;top:597.500px;width:85.90000000000009px;height:15.500px;overflow:hidden"></div>
<div class="a" style="left:847.5999999999999px;top:599.500px;width:80.40000000000009px;height:12px;overflow:hidden;white-space:nowrap;line-height:12px;font-size:9.1px;color:#efeed8">Acknowledgment</div>
<div class="hdr" style="left:928.7px;top:597.500px;width:77.09999999999991px;height:15.500px;overflow:hidden"></div>
<div class="a" style="left:933.0px;top:599.500px;width:71.59999999999991px;height:12px;overflow:hidden;white-space:nowrap;line-height:12px;font-size:9.1px;color:#efeed8">Annotation</div>
<div class="hdr" style="left:1005.3px;top:597.500px;width:51.90000000000009px;height:15.500px;overflow:hidden"></div>
<div class="a" style="left:1009.5999999999999px;top:599.500px;width:46.40000000000009px;height:12px;overflow:hidden;white-space:nowrap;line-height:12px;font-size:9.1px;color:#efeed8">Display ...</div>
<div class="hdr" style="left:1056.7px;top:597.500px;width:41.09999999999991px;height:15.500px;overflow:hidden"></div>
<div class="a" style="left:1061.0px;top:599.500px;width:35.59999999999991px;height:12px;overflow:hidden;white-space:nowrap;line-height:12px;font-size:9.1px;color:#efeed8">Parameter</div>
<div class="a" style="left:1098px;top:598px;width:10px;height:15px;background:#3a3a3a;border:1px solid #222;border-radius:3px"></div><svg class="a" style="left:1099px;top:599px" width="8" height="11" viewBox="0 0 8 11"><rect x=".5" y=".5" width="6" height="5.500" fill="#555" stroke="#eee" stroke-width=".9"/><path d="M.5 3 h6 M3.500 .5 v5.500" stroke="#eee" stroke-width=".7"/><path d="M2.500 6 h5 l-2.500 3.500z" fill="#fff"/></svg>
<div class="a" style="left:1098px;top:613px;width:11px;height:160px;background:#2a2a2a"></div>
<div class="a" style="left:1098px;top:613px;width:11px;height:13px;background:#464646"></div>
<svg class="a" style="left:1100px;top:617px" width="7" height="6" viewBox="0 0 7 6"><path d="M3.500 .5 L6.500 5.500 H.5Z" fill="#0c0c0c"/></svg>
<div class="a" style="left:1098px;top:760px;width:11px;height:13px;background:#464646"></div>
<svg class="a" style="left:1100px;top:764px" width="7" height="6" viewBox="0 0 7 6"><path d="M3.500 5.500 L6.500 .5 H.5Z" fill="#0c0c0c"/></svg>
<div class="a" style="left:1097px;top:627px;width:12px;height:131px;background:linear-gradient(90deg,#2c2c2c,#3c3c3c 50%,#2e2e2e);border:1px solid #151515;border-radius:0 0 7px 7px"></div>
<div class="a" style="left:8px;top:772.500px;width:1089px;height:11px;background:#2a2a2a"></div>
<div class="a" style="left:8px;top:772.500px;width:13px;height:11px;background:#464646"></div>
<svg class="a" style="left:11px;top:775px" width="6" height="7" viewBox="0 0 6 7"><path d="M.5 3.500 L5.500 .5 V6.500Z" fill="#0c0c0c"/></svg>
<div class="a" style="left:1084px;top:772.500px;width:13px;height:11px;background:#464646"></div>
<svg class="a" style="left:1088px;top:775px" width="6" height="7" viewBox="0 0 6 7"><path d="M5.500 3.500 L.5 .5 V6.500Z" fill="#0c0c0c"/></svg>
<div class="a" style="left:21px;top:772px;width:748px;height:12px;background:linear-gradient(#2c2c2c,#3c3c3c 50%,#2e2e2e);border:1px solid #151515;border-radius:7px 0 7px 7px"></div>
<svg class="a" style="left:1117px;top:39px" width="92" height="19" viewBox="0 0 92 19"><path d="M0 19 V5 Q0 0 5 0 H54 C66 0 72 19 92 19 Z" fill="#474747"/></svg>
<div class="dot g" style="left:1123.500px;top:44.500px;width:9px;height:9px"></div>
<div class="t" style="left:1140px;top:42.5px;font-size:9.1px;color:#efeed8">Services</div>
<svg class="a" style="left:1390.5px;top:41px" width="14" height="14" viewBox="0 0 14 14"><defs><radialGradient id="hg1397_48" cx="40%" cy="30%" r="75%"><stop offset="0" stop-color="#5a6cff"/><stop offset=".55" stop-color="#1420d8"/><stop offset="1" stop-color="#060a80"/></radialGradient></defs><circle cx="7" cy="7" r="5.6" fill="url(#hg1397_48)" stroke="#e8e8f4" stroke-width="1.1"/><text x="7" y="10.3" text-anchor="middle" font-family="Liberation Sans,sans-serif" font-weight="bold" font-size="9.5" fill="#fff">?</text></svg><svg class="a" style="left:1407.0px;top:41.5px" width="12" height="12" viewBox="0 0 12 12"><path d="M2.400 2.400 L9.600 9.600 M9.600 2.400 L2.400 9.600" stroke="#161616" stroke-width="3.800" stroke-linecap="round"/><path d="M2.400 2.400 L9.600 9.600 M9.600 2.400 L2.400 9.600" stroke="#f6f6f6" stroke-width="1.900" stroke-linecap="round"/></svg><svg class="a" style="left:1421.5px;top:44px" width="13" height="10" viewBox="0 0 13 10"><rect x=".9" y=".9" width="11.200" height="8.200" rx="1.600" fill="#2c2c2c" stroke="#e8e8e8" stroke-width="1.100"/><rect x="2.400" y="2.600" width="8.200" height="1.800" fill="#f0f0f0"/><rect x="2.900" y="5" width="7.200" height="2.400" rx=".6" fill="#4a4a4a" stroke="#d8d8d8" stroke-width=".7"/></svg>
<div class="panel" style="left:1117px;top:57px;width:318px;height:341px;background:#434343"></div>
<div class="pmenu" style="left:1118px;top:60px;width:316px;height:16px"></div>
<div class="t" style="left:1125.5px;top:62.5px;color:#efeed8;font-size:9.1px"><u>F</u>ile</div>
<div class="t" style="left:1147.5px;top:62.5px;color:#efeed8;font-size:9.1px"><u>E</u>dit</div>
<div class="t" style="left:1169px;top:62.5px;color:#efeed8;font-size:9.1px"><u>V</u>iew</div>
<div class="tool" style="left:1118px;top:77px;width:316px;height:21px"></div>
<div class="a" style="left:1118px;top:78px;width:9px;height:19px;background:linear-gradient(90deg,#4a4a4a,#6a6a6a 60%,#3a3a3a);border-radius:3px 0 0 3px"></div>
<svg class="a" style="left:1130px;top:81.5px" width="14" height="13" viewBox="0 0 14 13"><g transform="rotate(14 7 6.500)"><path d="M4.600 .8 h4.600 l.8 3.800 h-6.200z" fill="#f6f8ff" stroke="#9fb2d8" stroke-width=".4"/><path d="M2 5.600 q0-1.200 1.200-1.200 h7.400 q1.400 0 1.400 1.400 v2 q0 1-1 1 h-8 q-1 0-1-1z" fill="#2a58b8"/><path d="M2.400 5.400 h9" stroke="#8fb4ff" stroke-width=".8"/><path d="M4.200 7.800 h6.400 l1.400 3 h-8.600z" fill="#eef2fc" stroke="#9fb2d8" stroke-width=".4"/><path d="M4.800 9.200 h5.600" stroke="#6c86bc" stroke-width=".5"/></g></svg><svg class="a" style="left:1152px;top:81.5px" width="12" height="13" viewBox="0 0 12 13"><rect x="1" y=".8" width="10" height="11.600" fill="#eef2fa" stroke="#4f79c8" stroke-width="1.100"/><rect x="2.600" y="2.200" width="6.800" height="3" fill="#5eae50"/><rect x="2.600" y="6.600" width="2.800" height="4.600" fill="#4a70d0"/><rect x="7" y="8.200" width="2.400" height="3" fill="#c860c8"/><path d="M3.400 3.800 L10.200 10.600" stroke="#f0c63c" stroke-width="1.700"/><path d="M9.600 10 L11.400 11.800" stroke="#e23c2c" stroke-width="1.700"/><path d="M2.600 3 L3.800 4.200" stroke="#333" stroke-width="1.200"/></svg><div class="a" style="left:1172px;top:79px;width:0;height:17px;border-left:1px dotted #222"></div><svg class="a" style="left:1180px;top:82px" width="12" height="12" viewBox="0 0 12 12"><path d="M7.800 7.800 L11 11" stroke="#9a8f88" stroke-width="2" stroke-linecap="round"/><path d="M8 8 L10.800 10.800" stroke="#c88c5c" stroke-width=".9" stroke-linecap="round"/><circle cx="4.900" cy="4.900" r="4" fill="#f2f6fd" stroke="#c4cfe2" stroke-width=".9"/><path d="M2.800 4.900 h4.200 M4.900 2.800 v4.200" stroke="#1c5fd2" stroke-width="1.600"/></svg><svg class="a" style="left:1201px;top:82px" width="12" height="12" viewBox="0 0 12 12"><path d="M7.800 7.800 L11 11" stroke="#9a8f88" stroke-width="2" stroke-linecap="round"/><path d="M8 8 L10.800 10.800" stroke="#c88c5c" stroke-width=".9" stroke-linecap="round"/><circle cx="4.900" cy="4.900" r="4" fill="#f2f6fd" stroke="#c4cfe2" stroke-width=".9"/><path d="M2.700 4.900 h4.400" stroke="#1c5fd2" stroke-width="1.700"/></svg><svg class="a" style="left:1222.5px;top:82px" width="13" height="12" viewBox="0 0 13 12"><rect x=".8" y=".8" width="11.400" height="10.400" fill="#f4f7fd" stroke="#8aa6da" stroke-width=".9"/><rect x=".8" y=".8" width="11.400" height="2.200" fill="#5b8ee0"/><circle cx="6.200" cy="7" r="2.700" fill="#e4ecfa" stroke="#5a6c8c" stroke-width=".9"/><path d="M8.200 9 L10.400 11" stroke="#5a6c8c" stroke-width="1.300"/></svg><svg class="a" style="left:1242.5px;top:81px" width="14" height="14" viewBox="0 0 14 14"><circle cx="7" cy="7" r="6.300" fill="#a9c3e6" stroke="#cfdff4" stroke-width=".8" stroke-dasharray="1.600 .8"/><circle cx="7" cy="7" r="5" fill="#8daedd"/><text x="7" y="10.200" text-anchor="middle" font-family="Liberation Sans,sans-serif" font-weight="bold" font-size="9" fill="#fff">%</text></svg>
<div class="a" style="left:1120px;top:100px;width:313px;height:269px;background:#686868;border:1px solid #2c2c2c"></div>
<svg class="a" style="left:1187.0px;top:148.2px" width="209.5" height="199.8" viewBox="0 0 209.5 199.8"><defs><radialGradient id="sg" cx="45%" cy="40%" r="60%"><stop offset="0" stop-color="#9dff9d"/><stop offset=".45" stop-color="#22e022"/><stop offset="1" stop-color="#109010"/></radialGradient><pattern id="cell" width="17.375" height="9.94" patternUnits="userSpaceOnUse"><rect x=".6" y=".6" width="16.175" height="8.74" fill="#565656" stroke="#dddbbf" stroke-width=".75"/><circle cx="9.1875" cy="5.37" r="2.350" fill="url(#sg)"/></pattern></defs><rect width="208.5" height="198.79999999999998" fill="url(#cell)"/></svg>
<div class="t" style="left:1086px;top:147.57px;width:100px;text-align:right;font-weight:bold;font-size:7.400px;line-height:11px;color:#efeed6;letter-spacing:0">Atlanta</div>
<div class="t" style="left:1086px;top:157.51px;width:100px;text-align:right;font-weight:bold;font-size:7.400px;line-height:11px;color:#efeed6;letter-spacing:0">Baltimore</div>
<div class="t" style="left:1086px;top:167.45px;width:100px;text-align:right;font-weight:bold;font-size:7.400px;line-height:11px;color:#efeed6;letter-spacing:0">Boise</div>
<div class="t" style="left:1086px;top:177.39px;width:100px;text-align:right;font-weight:bold;font-size:7.400px;line-height:11px;color:#efeed6;letter-spacing:0">Boston</div>
<div class="t" style="left:1086px;top:187.33px;width:100px;text-align:right;font-weight:bold;font-size:7.400px;line-height:11px;color:#efeed6;letter-spacing:0">Chicago</div>
<div class="t" style="left:1086px;top:197.27px;width:100px;text-align:right;font-weight:bold;font-size:7.400px;line-height:11px;color:#efeed6;letter-spacing:0">Cleveland</div>
<div class="t" style="left:1086px;top:207.21px;width:100px;text-align:right;font-weight:bold;font-size:7.400px;line-height:11px;color:#efeed6;letter-spacing:0">Dallas</div>
<div class="t" style="left:1086px;top:217.15px;width:100px;text-align:right;font-weight:bold;font-size:7.400px;line-height:11px;color:#efeed6;letter-spacing:0">Denver</div>
<div class="t" style="left:1086px;top:227.09px;width:100px;text-align:right;font-weight:bold;font-size:7.400px;line-height:11px;color:#efeed6;letter-spacing:0">Kansas City</div>
<div class="t" style="left:1086px;top:237.03px;width:100px;text-align:right;font-weight:bold;font-size:7.400px;line-height:11px;color:#efeed6;letter-spacing:0">Las Vegas</div>
<div class="t" style="left:1086px;top:246.97px;width:100px;text-align:right;font-weight:bold;font-size:7.400px;line-height:11px;color:#efeed6;letter-spacing:0">Los Angeles</div>
<div class="t" style="left:1086px;top:256.91px;width:100px;text-align:right;font-weight:bold;font-size:7.400px;line-height:11px;color:#efeed6;letter-spacing:0">Minneapolis</div>
<div class="t" style="left:1086px;top:266.85px;width:100px;text-align:right;font-weight:bold;font-size:7.400px;line-height:11px;color:#efeed6;letter-spacing:0">Nashville</div>
<div class="t" style="left:1086px;top:276.79px;width:100px;text-align:right;font-weight:bold;font-size:7.400px;line-height:11px;color:#efeed6;letter-spacing:0">New York</div>
<div class="t" style="left:1086px;top:286.73px;width:100px;text-align:right;font-weight:bold;font-size:7.400px;line-height:11px;color:#efeed6;letter-spacing:0">Oceanside</div>
<div class="t" style="left:1086px;top:296.67px;width:100px;text-align:right;font-weight:bold;font-size:7.400px;line-height:11px;color:#efeed6;letter-spacing:0">Omaha</div>
<div class="t" style="left:1086px;top:306.61px;width:100px;text-align:right;font-weight:bold;font-size:7.400px;line-height:11px;color:#efeed6;letter-spacing:0">Phoenix</div>
<div class="t" style="left:1086px;top:316.55px;width:100px;text-align:right;font-weight:bold;font-size:7.400px;line-height:11px;color:#efeed6;letter-spacing:0">San Diego</div>
<div class="t" style="left:1086px;top:326.49px;width:100px;text-align:right;font-weight:bold;font-size:7.400px;line-height:11px;color:#efeed6;letter-spacing:0">Seattle</div>
<div class="t" style="left:1086px;top:336.43px;width:100px;text-align:right;font-weight:bold;font-size:7.400px;line-height:11px;color:#efeed6;letter-spacing:0">Washington, DC</div>
<div class="t" style="left:1199.50px;top:136.70px;font-weight:bold;font-size:7.500px;line-height:10px;color:#efeed6;letter-spacing:0;transform-origin:0 100%;transform:rotate(-45deg)">ABC</div>
<div class="t" style="left:1216.88px;top:136.70px;font-weight:bold;font-size:7.500px;line-height:10px;color:#efeed6;letter-spacing:0;transform-origin:0 100%;transform:rotate(-45deg)">ABC HD</div>
<div class="t" style="left:1234.25px;top:136.70px;font-weight:bold;font-size:7.500px;line-height:10px;color:#efeed6;letter-spacing:0;transform-origin:0 100%;transform:rotate(-45deg)">CBS</div>
<div class="t" style="left:1251.62px;top:136.70px;font-weight:bold;font-size:7.500px;line-height:10px;color:#efeed6;letter-spacing:0;transform-origin:0 100%;transform:rotate(-45deg)">CBS HD</div>
<div class="t" style="left:1269.00px;top:136.70px;font-weight:bold;font-size:7.500px;line-height:10px;color:#efeed6;letter-spacing:0;transform-origin:0 100%;transform:rotate(-45deg)">CW</div>
<div class="t" style="left:1286.38px;top:136.70px;font-weight:bold;font-size:7.500px;line-height:10px;color:#efeed6;letter-spacing:0;transform-origin:0 100%;transform:rotate(-45deg)">CW HD</div>
<div class="t" style="left:1303.75px;top:136.70px;font-weight:bold;font-size:7.500px;line-height:10px;color:#efeed6;letter-spacing:0;transform-origin:0 100%;transform:rotate(-45deg)">FOX</div>
<div class="t" style="left:1321.12px;top:136.70px;font-weight:bold;font-size:7.500px;line-height:10px;color:#efeed6;letter-spacing:0;transform-origin:0 100%;transform:rotate(-45deg)">FOX HD</div>
<div class="t" style="left:1338.50px;top:136.70px;font-weight:bold;font-size:7.500px;line-height:10px;color:#efeed6;letter-spacing:0;transform-origin:0 100%;transform:rotate(-45deg)">NBC</div>
<div class="t" style="left:1355.88px;top:136.70px;font-weight:bold;font-size:7.500px;line-height:10px;color:#efeed6;letter-spacing:0;transform-origin:0 100%;transform:rotate(-45deg)">NBC HD</div>
<div class="t" style="left:1373.25px;top:136.70px;font-weight:bold;font-size:7.500px;line-height:10px;color:#efeed6;letter-spacing:0;transform-origin:0 100%;transform:rotate(-45deg)">Univision</div>
<div class="t" style="left:1390.62px;top:136.70px;font-weight:bold;font-size:7.500px;line-height:10px;color:#efeed6;letter-spacing:0;transform-origin:0 100%;transform:rotate(-45deg)">Univision HD</div>
<div class="a" style="left:1118px;top:372px;width:316px;height:23px;background:#3c3c3c;border:1px solid #262626;border-radius:2px"></div>
<div class="dot w" style="left:1124.3px;top:378px;width:9px;height:9px"></div><div class="t" style="left:1138px;top:377px;font-size:9.6px;color:#efeed8">0</div><div class="dot g" style="left:1147.9px;top:378px;width:9px;height:9px"></div><div class="t" style="left:1161.5px;top:377px;font-size:9.6px;color:#efeed8">240</div><div class="dot y" style="left:1182.5px;top:378px;width:9px;height:9px"></div><div class="t" style="left:1196.5px;top:377px;font-size:9.6px;color:#efeed8">0</div><div class="dot r" style="left:1206.7px;top:378px;width:9px;height:9px"></div><div class="t" style="left:1220.5px;top:377px;font-size:9.6px;color:#efeed8">0</div>
<div class="a" style="left:1231px;top:378px;width:9px;height:9px;background:#3a3a3a;border:1px solid #666;"></div><div class="t" style="left:1244px;top:377px;font-size:9.6px;color:#efeed8">240</div><div class="a" style="left:1265.5px;top:378px;width:9px;height:9px;background:#fdb414;"></div><div class="t" style="left:1279px;top:377px;font-size:9.6px;color:#efeed8">0</div><div class="a" style="left:1289.5px;top:378px;width:9px;height:9px;background:#14e6fb;"></div><div class="t" style="left:1303px;top:377px;font-size:9.6px;color:#efeed8">0</div><div class="a" style="left:1313.5px;top:378px;width:9px;height:9px;background:#fb14fb;"></div><div class="t" style="left:1327px;top:377px;font-size:9.6px;color:#efeed8">0</div><div class="a" style="left:1337.5px;top:378px;width:9px;height:9px;background:#000;"></div><div class="t" style="left:1351px;top:377px;font-size:9.6px;color:#efeed8">0</div><div class="a" style="left:1361.5px;top:378px;width:9px;height:9px;background:#787878;"></div><div class="t" style="left:1375px;top:377px;font-size:9.6px;color:#efeed8">0</div>
<div class="btn" style="left:1385px;top:375px;width:45.500px;height:17.500px"></div>
<div class="t" style="left:1394px;top:377.5px;font-size:9.6px;color:#efeed8">Toggle</div>
<svg class="a" style="left:1117px;top:401.5px" width="110" height="19.5" viewBox="0 0 110 19.5"><path d="M0 19.5 V5 Q0 0 5 0 H68 C80 0 86 19.5 110 19.5 Z" fill="#474747"/></svg>
<div class="dot g" style="left:1123.500px;top:407px;width:9px;height:9px"></div>
<div class="t" style="left:1140px;top:405px;font-size:9.1px;color:#efeed8">Map Display</div>
<svg class="a" style="left:1390.5px;top:404px" width="14" height="14" viewBox="0 0 14 14"><defs><radialGradient id="hg1397_411" cx="40%" cy="30%" r="75%"><stop offset="0" stop-color="#5a6cff"/><stop offset=".55" stop-color="#1420d8"/><stop offset="1" stop-color="#060a80"/></radialGradient></defs><circle cx="7" cy="7" r="5.6" fill="url(#hg1397_411)" stroke="#e8e8f4" stroke-width="1.1"/><text x="7" y="10.3" text-anchor="middle" font-family="Liberation Sans,sans-serif" font-weight="bold" font-size="9.5" fill="#fff">?</text></svg><svg class="a" style="left:1407.0px;top:404.5px" width="12" height="12" viewBox="0 0 12 12"><path d="M2.400 2.400 L9.600 9.600 M9.600 2.400 L2.400 9.600" stroke="#161616" stroke-width="3.800" stroke-linecap="round"/><path d="M2.400 2.400 L9.600 9.600 M9.600 2.400 L2.400 9.600" stroke="#f6f6f6" stroke-width="1.900" stroke-linecap="round"/></svg><svg class="a" style="left:1421.5px;top:407px" width="13" height="10" viewBox="0 0 13 10"><rect x=".9" y=".9" width="11.200" height="8.200" rx="1.600" fill="#2c2c2c" stroke="#e8e8e8" stroke-width="1.100"/><rect x="2.400" y="2.600" width="8.200" height="1.800" fill="#f0f0f0"/><rect x="2.900" y="5" width="7.200" height="2.400" rx=".6" fill="#4a4a4a" stroke="#d8d8d8" stroke-width=".7"/></svg>
<div class="panel" style="left:1117px;top:420px;width:318px;height:368px;background:#434343"></div>
<div class="tool" style="left:1118px;top:421px;width:316px;height:22px;background:#3b3b3b"></div>
<div class="a" style="left:1118px;top:422px;width:9px;height:20px;background:linear-gradient(90deg,#4a4a4a,#6a6a6a 60%,#3a3a3a);border-radius:3px 0 0 3px"></div>
<svg class="a" style="left:1131px;top:426.5px" width="12" height="12" viewBox="0 0 12 12"><rect x=".7" y=".7" width="10.600" height="10.600" rx=".6" fill="#3b76e2" stroke="#7fa8f0" stroke-width=".7"/><rect x="2" y="1" width="8" height="5.600" fill="#e6efff"/><rect x="2" y="1" width="8" height="1.200" fill="#9cbcf4"/><rect x="2.800" y="7.800" width="6.400" height="3.400" fill="#173a90"/><rect x="6.400" y="8.400" width="1.800" height="2.400" fill="#eef3ff"/></svg><svg class="a" style="left:1150.5px;top:426.5px" width="14" height="12" viewBox="0 0 14 12"><path d="M1 3.200 h4 l1 1.200 h5 v6.600 h-10z" fill="#d8ae2c"/><path d="M1 11 l2.200-5 h9.600 l-2.200 5z" fill="#ffe470" stroke="#c89a18" stroke-width=".4"/><path d="M8.200 1.800 q2.200-1.400 3.800 .4 l.9-.8 v2.600 h-2.600 l.9-.9 q-1.100-1.200-2.800-1.100z" fill="#5ab82e"/></svg><div class="a" style="left:1172px;top:423px;width:0;height:18px;border-left:1px dotted #222"></div><svg class="a" style="left:1179px;top:426.0px" width="14" height="13" viewBox="0 0 14 13"><g transform="rotate(14 7 6.500)"><path d="M4.600 .8 h4.600 l.8 3.800 h-6.200z" fill="#f6f8ff" stroke="#9fb2d8" stroke-width=".4"/><path d="M2 5.600 q0-1.200 1.200-1.200 h7.400 q1.400 0 1.400 1.400 v2 q0 1-1 1 h-8 q-1 0-1-1z" fill="#2a58b8"/><path d="M2.400 5.400 h9" stroke="#8fb4ff" stroke-width=".8"/><path d="M4.200 7.800 h6.400 l1.400 3 h-8.600z" fill="#eef2fc" stroke="#9fb2d8" stroke-width=".4"/><path d="M4.800 9.200 h5.600" stroke="#6c86bc" stroke-width=".5"/></g></svg><svg class="a" style="left:1201.5px;top:426.0px" width="12" height="13" viewBox="0 0 12 13"><rect x="1" y=".8" width="10" height="11.600" fill="#eef2fa" stroke="#4f79c8" stroke-width="1.100"/><rect x="2.600" y="2.200" width="6.800" height="3" fill="#5eae50"/><rect x="2.600" y="6.600" width="2.800" height="4.600" fill="#4a70d0"/><rect x="7" y="8.200" width="2.400" height="3" fill="#c860c8"/><path d="M3.400 3.800 L10.200 10.600" stroke="#f0c63c" stroke-width="1.700"/><path d="M9.600 10 L11.400 11.800" stroke="#e23c2c" stroke-width="1.700"/><path d="M2.600 3 L3.800 4.200" stroke="#333" stroke-width="1.200"/></svg><div class="a" style="left:1222px;top:423px;width:0;height:18px;border-left:1px dotted #222"></div><svg class="a" style="left:1230px;top:426.5px" width="12" height="12" viewBox="0 0 12 12"><path d="M7.800 7.800 L11 11" stroke="#9a8f88" stroke-width="2" stroke-linecap="round"/><path d="M8 8 L10.800 10.800" stroke="#c88c5c" stroke-width=".9" stroke-linecap="round"/><circle cx="4.900" cy="4.900" r="4" fill="#f2f6fd" stroke="#c4cfe2" stroke-width=".9"/><path d="M2.800 4.900 h4.200 M4.900 2.800 v4.200" stroke="#1c5fd2" stroke-width="1.600"/></svg><svg class="a" style="left:1251px;top:426.5px" width="12" height="12" viewBox="0 0 12 12"><path d="M7.800 7.800 L11 11" stroke="#9a8f88" stroke-width="2" stroke-linecap="round"/><path d="M8 8 L10.800 10.800" stroke="#c88c5c" stroke-width=".9" stroke-linecap="round"/><circle cx="4.900" cy="4.900" r="4" fill="#f2f6fd" stroke="#c4cfe2" stroke-width=".9"/><path d="M2.700 4.900 h4.400" stroke="#1c5fd2" stroke-width="1.700"/></svg><svg class="a" style="left:1271.5px;top:426.5px" width="13" height="12" viewBox="0 0 13 12"><rect x=".8" y=".8" width="11.400" height="10.400" fill="#f4f7fd" stroke="#8aa6da" stroke-width=".9"/><rect x=".8" y=".8" width="11.400" height="2.200" fill="#5b8ee0"/><circle cx="6.200" cy="7" r="2.700" fill="#e4ecfa" stroke="#5a6c8c" stroke-width=".9"/><path d="M8.200 9 L10.400 11" stroke="#5a6c8c" stroke-width="1.300"/></svg>
<svg class="a" style="left:1118px;top:443px" width="316" height="343" viewBox="0 0 316 343"><defs><filter id="b2"><feGaussianBlur stdDeviation="2"/></filter><filter id="b5"><feGaussianBlur stdDeviation="5"/></filter><filter id="b9"><feGaussianBlur stdDeviation="9"/></filter></defs><rect width="316" height="343" fill="#d6edfb"/><g filter="url(#b9)"><rect x="40" y="-10" width="290" height="34" fill="#bfe4fa"/><path d="M112 20 L150 10 L150 60 L135 120 L150 170 L120 200 L100 150 L108 90Z" fill="#c2e5f9"/><path d="M0 200 L60 215 L95 250 L85 343 L0 343Z" fill="#bfe3f9"/><path d="M30 210 L80 200 L110 160 L135 175 L110 215 L70 250Z" fill="#e4f3fc"/><path d="M150 60 L260 60 L300 110 L200 130 L160 110Z" fill="#e2f2fc"/></g><path d="M0 23 C1.2 10.2 4.0 21.7 7 21 C10.0 20.3 15.0 20.7 18 19 C21.0 17.3 22.2 13.3 25 11 C27.8 8.7 31.3 6.7 35 5 C38.7 3.3 40.5 1.7 47 1 C53.5 0.3 69.0 0.0 74 1 C79.0 2.0 75.2 4.7 77 7 C78.8 9.3 83.3 13.0 85 15 C86.7 17.0 85.5 16.8 87 19 C88.5 21.2 91.7 26.0 94 28 C96.3 30.0 99.6 29.7 101 31 C102.4 32.3 103.1 34.2 102.5 36 C101.9 37.8 99.4 39.3 97.5 42 C95.6 44.7 92.9 48.3 91 52 C89.1 55.7 87.3 59.8 86 64 C84.7 68.2 83.4 72.9 83 77 C82.6 81.1 84.2 84.9 83.7 88.7 C83.2 92.5 81.2 96.2 80 100 C78.8 103.8 78.1 105.8 76.8 111.6 C75.5 117.3 73.9 128.6 72.2 134.5 C70.5 140.4 69.3 143.3 66.7 147 C64.1 150.7 60.1 153.2 56.8 156.9 C53.5 160.6 49.8 165.1 46.9 169.2 C44.0 173.3 41.5 178.3 39.5 181.6 C37.5 184.9 36.2 188.2 34.6 189 C33.0 189.8 31.5 188.6 29.6 186.5 C27.8 184.4 25.6 180.7 23.5 176.6 C21.4 172.5 19.1 168.1 17.3 161.8 C15.5 155.5 14.2 146.6 12.6 139 C11.0 131.4 10.0 122.8 8 116 C6.0 109.2 1.8 101.0 0.5 98 C-0.8 95.0 0.1 110.5 0 98 C-0.1 85.5 -1.2 35.8 0 23Z" fill="#fefefe" stroke="#d5e9f5" stroke-width=".8"/><path d="M0 0 L30 0 L24 8 L14 14 L6 18 L0 20Z" fill="#eef7fc" filter="url(#b2)"/><path d="M52 10 L62 6 L74 4 M52 22 L64 22 L74 28 L80 40 M60 28 L66 24 M84 24 L76 44 M18 12 L30 30 M28 8 L38 22" fill="none" stroke="#d3e9f6" stroke-width="1.400" stroke-linecap="round"/><path d="M76.5 161.8 C77.5 160.2 80.9 158.5 84.0 158.1 C87.1 157.7 92.6 158.3 95.1 159.3 C97.6 160.3 99.0 162.4 98.8 164.3 C98.6 166.2 96.3 169.1 93.8 170.5 C91.3 171.9 86.7 173.3 84.0 172.9 C81.3 172.5 79.0 169.8 77.8 168.0 C76.5 166.2 75.5 163.5 76.5 161.8Z" fill="#f6f5ee" stroke="#d4e4ee" stroke-width=".6"/><path d="M152.4 55.4 C153.1 53.7 155.5 53.2 157.0 53.8 C158.5 54.4 160.1 58.9 161.6 58.9 C163.1 58.9 164.9 55.5 166.2 53.8 C167.5 52.1 167.7 49.5 169.6 48.6 C171.5 47.7 174.9 48.1 177.6 48.6 C180.3 49.1 184.1 50.2 185.6 51.5 C187.1 52.8 187.8 54.6 186.8 56.1 C185.9 57.6 182.2 60.2 179.9 60.7 C177.6 61.2 174.8 58.5 173.0 59.3 C171.2 60.1 169.8 63.1 168.9 65.7 C168.0 68.3 168.2 71.2 167.3 74.9 C166.4 78.7 164.5 86.6 163.4 88.2 C162.3 89.8 161.5 86.9 160.7 84.5 C159.9 82.1 159.9 77.2 158.6 73.8 C157.3 70.4 154.1 67.0 153.1 63.9 C152.1 60.8 151.8 57.1 152.4 55.4Z" fill="#f6f5ef" stroke="#dde9ee" stroke-width=".6"/><g fill="#eef5f6" filter="url(#b2)"><ellipse cx="240" cy="45" rx="14" ry="6"/><ellipse cx="262" cy="38" rx="8" ry="4"/></g><path d="M241.8 128.1 C242.1 124.3 243.5 116.6 245.2 111.6 C246.9 106.5 249.0 101.4 252.1 97.8 C255.2 94.2 259.8 91.8 263.5 89.8 C267.2 87.8 272.7 85.7 274.3 85.9 C275.9 86.1 275.6 88.6 273.4 91.0 C271.2 93.4 264.6 96.3 261.2 100.1 C257.8 103.9 255.4 108.6 253.2 113.9 C251.0 119.2 249.8 128.8 248.2 132.2 C246.6 135.6 244.7 135.2 243.6 134.5 C242.5 133.8 241.5 131.9 241.8 128.1Z" fill="#f6f5ee" stroke="#dde6e6" stroke-width=".6"/><path d="M140.0 180.3 C140.4 178.1 140.3 175.9 141.7 173.7 C143.1 171.5 146.4 169.5 148.3 167.0 C150.2 164.5 151.6 161.5 153.3 158.7 C155.0 155.9 156.1 153.1 158.3 150.3 C160.5 147.5 163.9 144.2 166.7 142.0 C169.5 139.8 172.2 138.1 175.0 137.0 C177.8 135.9 180.2 135.2 183.3 135.3 C186.4 135.4 190.0 136.7 193.3 137.8 C196.6 138.9 200.0 140.6 203.3 142.0 C206.6 143.4 210.5 144.8 213.3 146.2 C216.1 147.6 218.5 148.5 220.0 150.3 C221.5 152.1 223.1 155.5 222.5 157.0 C221.9 158.5 218.8 159.2 216.7 159.5 C214.6 159.8 211.4 158.0 210.0 158.7 C208.6 159.4 207.5 162.6 208.3 163.7 C209.1 164.8 212.8 165.9 215.0 165.3 C217.2 164.7 219.8 162.0 221.7 160.3 C223.6 158.6 224.8 156.7 226.7 155.3 C228.6 153.9 230.8 153.1 233.3 152.0 C235.8 150.9 238.9 149.8 241.7 148.7 C244.5 147.6 247.8 146.4 250.0 145.3 C252.2 144.2 253.3 142.8 255.0 142.0 C256.7 141.2 258.1 140.3 260.0 140.3 C261.9 140.3 264.5 140.9 266.7 142.0 C268.9 143.1 271.9 147.0 273.3 147.0 C274.7 147.0 274.4 144.2 275.0 142.0 C275.6 139.8 276.7 136.5 276.7 133.7 C276.7 130.9 274.7 127.5 275.0 125.3 C275.3 123.1 276.9 120.8 278.3 120.3 C279.7 119.8 282.2 119.8 283.3 122.0 C284.4 124.2 285.0 129.5 285.0 133.7 C285.0 137.9 283.9 143.1 283.3 147.0 C282.8 150.9 281.4 156.4 281.7 157.0 C282.0 157.6 283.9 153.6 285.0 150.3 C286.1 147.0 287.5 140.9 288.3 137.0 C289.1 133.1 288.1 129.5 290.0 127.0 C291.9 124.5 295.7 123.4 300.0 122.0 C304.3 120.6 313.3 81.9 316.0 118.7 C318.7 155.5 351.4 305.6 316 343 C280.6 380.4 139.9 344.7 103.7 343.3 C67.5 341.9 100.5 337.8 98.8 334.7 C97.1 331.6 94.8 328.1 93.8 324.8 C92.8 321.5 92.4 319.0 92.6 314.9 C92.8 310.8 93.7 304.2 95.1 300.1 C96.5 296.0 99.0 293.5 101.2 290.2 C103.5 286.9 105.7 283.6 108.6 280.3 C111.5 277.0 117.2 272.6 118.5 270.5 C119.8 268.4 118.1 268.7 116.7 267.8 C115.3 266.9 111.4 266.6 110.0 265.3 C108.6 264.1 108.4 262.2 108.3 260.3 C108.2 258.4 109.2 255.4 109.2 253.7 C109.2 252.0 107.3 251.3 108.3 250.3 C109.3 249.3 112.2 248.0 115.0 247.8 C117.8 247.6 123.6 250.0 125.0 249.0 C126.4 248.0 123.8 244.3 123.3 242.0 C122.8 239.7 122.8 237.2 121.7 235.3 C120.6 233.4 117.5 231.7 116.7 230.3 C115.9 228.9 115.9 227.8 116.7 227.0 C117.5 226.2 119.8 225.9 121.7 225.3 C123.6 224.8 126.4 224.2 128.3 223.7 C130.2 223.1 131.6 222.8 133.3 222.0 C135.0 221.2 136.6 219.8 138.3 218.7 C140.0 217.6 141.8 216.1 143.3 215.3 C144.8 214.5 147.1 214.8 147.5 213.7 C147.9 212.6 145.9 210.6 145.8 208.7 C145.7 206.8 146.0 203.2 146.7 202.0 C147.4 200.8 149.2 200.4 150.0 201.2 C150.8 202.0 151.0 205.3 151.7 207.0 C152.4 208.7 153.2 211.1 154.2 211.2 C155.2 211.3 157.4 209.1 157.5 207.8 C157.6 206.6 155.7 204.9 155.0 203.7 C154.3 202.4 153.9 202.0 153.3 200.3 C152.8 198.6 152.2 195.6 151.7 193.7 C151.1 191.8 150.8 188.8 150.0 188.7 C149.2 188.5 148.1 192.2 146.7 192.8 C145.3 193.4 142.9 193.0 141.7 192.0 C140.4 191.0 139.5 188.9 139.2 187.0 C138.9 185.1 139.6 182.5 140.0 180.3Z" fill="#f6f5ee" stroke="#d6e2e6" stroke-width=".6"/><g filter="url(#b5)" opacity=".6"><path d="M160.0 187.0 L173.3 172.0 L193.3 167.0 L210.0 167.0 L226.7 158.7 L250.0 150.3 L273.3 152.0 L316.0 137.0 L316.0 210.3 L300.0 217.0 L283.3 203.7 L260.0 195.3 L250.0 217.0 L230.0 203.7 L206.7 203.7 L193.3 217.0 L171.7 223.7 L150.0 227.0 L133.3 230.3 L128.3 223.7 L155.0 217.0 L170.0 207.0 L155.0 195.3 L146.7 180.3Z" fill="#e0ebcf"/><path d="M141.7 183.7 L150.0 165.3 L160.0 150.3 L173.3 140.3 L186.7 142.0 L200.0 150.3 L210.0 167.0 L203.3 188.7 L186.7 190.3 L178.3 183.7 L180.0 167.0 L173.3 165.3 L166.7 177.0 L163.3 193.7 L156.7 203.7 L146.7 197.0Z" fill="#dde9cc"/><path d="M216.7 162.0 L243.3 155.3 L266.7 160.3 L273.3 183.7 L250.0 192.0 L226.7 187.0 L213.3 177.0Z" fill="#d6e6c2"/><path d="M163.3 320.3 L203.3 318.7 L216.7 332.0 L206.7 343.7 L163.3 343.7Z" fill="#e4ecd4"/><path d="M296.7 292.0 L316.0 282.0 L316.0 315.3 L305.0 312.0Z" fill="#dfe9cd"/></g><g filter="url(#b5)" opacity=".45"><path d="M273.3 253.7 L283.3 248.7 L296.7 252.0 L316.0 267.0 L316.0 290.3 L300.0 278.7 L290.0 272.0 L281.7 267.0 L275.0 262.0Z" fill="#dcdad0"/></g><path d="M171.7 165.3 C172.9 164.2 175.7 162.0 177.0 162.3 C178.3 162.6 180.0 165.1 179.7 167.0 C179.4 168.9 176.8 171.7 175.3 173.7 C173.8 175.7 172.0 177.3 170.7 179.0 C169.4 180.7 168.0 182.1 167.3 184.0 C166.6 185.9 166.2 188.5 166.7 190.3 C167.2 192.1 168.6 194.7 170.3 195.0 C172.0 195.3 174.8 193.0 177.0 192.0 C179.2 191.0 181.1 189.7 183.3 189.0 C185.5 188.3 188.0 188.5 190.0 187.8 C192.0 187.1 193.9 185.1 195.3 185.0 C196.8 184.9 199.0 186.2 198.7 187.0 C198.4 187.8 195.3 189.0 193.3 189.7 C191.3 190.4 188.8 190.4 186.7 191.3 C184.6 192.2 182.0 193.8 180.7 195.3 C179.4 196.8 180.1 198.6 179.0 200.3 C177.9 202.0 176.0 204.0 174.0 205.3 C172.0 206.6 169.3 207.7 167.0 208.0 C164.7 208.3 161.9 207.0 160.3 207.0 C158.7 207.0 158.4 208.4 157.5 207.8 C156.6 207.2 154.8 204.9 155.0 203.7 C155.2 202.4 157.5 201.7 158.7 200.3 C159.9 198.9 161.2 197.2 162.0 195.3 C162.8 193.4 163.3 190.9 163.7 188.7 C164.1 186.5 163.8 184.2 164.3 182.0 C164.8 179.8 165.8 177.5 166.7 175.3 C167.6 173.1 169.2 170.4 170.0 168.7 C170.8 167.0 170.5 166.4 171.7 165.3Z" fill="#cfe8f8"/><path d="M208.3 159.5 C209.6 158.7 214.3 159.9 216.7 159.5 C219.1 159.1 221.4 156.8 222.5 157.0 C223.6 157.2 224.3 159.3 223.3 160.7 C222.3 162.1 219.0 164.7 216.7 165.3 C214.3 165.9 210.6 165.5 209.2 164.5 C207.8 163.5 207.1 160.3 208.3 159.5Z" fill="#cfe8f8"/><path d="M280.8 127.0 L283.3 127.0 L284.2 147.0 L281.7 157.8 L280.3 147.0Z" fill="#cfe8f8"/><path d="M116.7 198.7 C117.5 197.3 119.9 196.2 120.8 197.0 C121.7 197.8 121.3 201.5 122.0 203.7 C122.7 205.9 124.0 208.1 125.0 210.3 C126.0 212.5 127.6 215.2 128.3 217.0 C129.0 218.8 130.1 220.3 129.3 221.3 C128.5 222.3 125.4 222.6 123.3 223.0 C121.2 223.4 117.4 224.7 116.7 224.0 C116.0 223.3 119.3 220.1 119.3 218.7 C119.3 217.2 116.7 216.7 116.7 215.3 C116.7 213.9 119.4 212.0 119.3 210.3 C119.2 208.6 116.4 207.2 116.0 205.3 C115.6 203.4 115.9 200.1 116.7 198.7Z" fill="#f6f5ee" stroke="#d6e2e6" stroke-width=".5"/><path d="M106.7 213.7 C107.8 212.6 110.4 211.4 111.7 212.0 C113.0 212.6 114.3 215.3 114.3 217.0 C114.3 218.7 113.0 221.0 111.7 222.0 C110.4 223.0 107.8 223.6 106.7 223.0 C105.6 222.4 105.0 220.2 105.0 218.7 C105.0 217.1 105.6 214.8 106.7 213.7Z" fill="#f6f5ee" stroke="#d6e2e6" stroke-width=".5"/><path d="M116.7 267.3 C117.5 266.2 122.7 263.6 125.0 262.0 C127.3 260.4 129.3 259.3 130.8 257.8 C132.3 256.3 132.4 254.2 134.2 252.8 C136.0 251.5 139.1 250.5 141.7 249.7 C144.3 248.9 148.0 248.7 150.0 248.0 C152.0 247.3 152.4 246.0 153.7 245.3 C155.0 244.6 156.6 243.2 157.7 243.7 C158.8 244.1 158.8 246.1 160.3 248.0 C161.8 249.9 164.8 253.0 166.7 255.0 C168.6 257.0 170.5 258.6 171.7 260.0 C172.9 261.4 173.0 263.4 173.7 263.7 C174.4 264.0 176.0 263.1 176.0 262.0 C176.0 260.9 173.5 258.4 173.7 257.0 C173.9 255.6 175.9 253.9 177.0 253.7 C178.1 253.5 179.2 254.6 180.3 255.7 C181.4 256.8 182.2 259.8 183.3 260.3 C184.4 260.9 185.8 258.7 187.0 259.0 C188.2 259.3 188.6 261.2 190.3 262.0 C192.0 262.8 195.1 262.9 197.0 263.7 C198.9 264.5 200.9 265.6 202.0 267.0 C203.1 268.4 204.0 270.1 203.7 272.0 C203.4 273.9 202.0 277.3 200.3 278.7 C198.6 280.1 196.5 280.1 193.7 280.3 C190.9 280.5 186.4 280.2 183.3 279.7 C180.2 279.1 177.5 277.2 175.3 277.0 C173.1 276.8 172.0 279.0 170.0 278.7 C168.0 278.4 165.8 276.7 163.3 275.3 C160.9 273.9 157.5 271.4 155.3 270.3 C153.1 269.2 151.4 269.8 150.0 268.7 C148.6 267.6 148.7 264.6 147.0 264.0 C145.3 263.4 142.8 264.9 140.0 265.3 C137.2 265.7 133.3 265.7 130.0 266.3 C126.7 266.9 122.2 268.5 120.0 268.7 C117.8 268.9 115.9 268.4 116.7 267.3Z" fill="#cfe8f8"/><path d="M153.0 245.3 C154.1 245.3 156.0 246.4 157.7 248.0 C159.4 249.6 161.5 252.8 163.3 254.7 C165.1 256.6 167.2 258.2 168.3 259.7 C169.4 261.2 170.1 262.9 170.0 263.7 C169.9 264.5 168.3 265.2 167.5 264.7 C166.7 264.2 166.2 262.2 165.0 260.7 C163.8 259.2 161.7 257.2 160.0 255.7 C158.3 254.2 156.4 253.0 155.0 251.7 C153.6 250.4 151.6 249.1 151.3 248.0 C151.0 246.9 151.9 245.3 153.0 245.3Z" fill="#f6f5ee"/><path d="M164.7 265.7 C165.4 265.3 169.2 264.9 170.0 265.3 C170.8 265.7 170.4 267.6 169.7 268.0 C169.0 268.4 166.6 268.1 165.8 267.7 C165.0 267.3 164.0 266.1 164.7 265.7Z" fill="#f6f5ee"/><path d="M148.0 255.0 C148.4 254.0 150.2 253.8 150.7 254.7 C151.2 255.6 151.4 259.3 151.0 260.3 C150.6 261.3 148.8 261.6 148.3 260.7 C147.8 259.8 147.6 256.0 148.0 255.0Z" fill="#f6f5ee"/><path d="M173.3 267.0 C173.7 265.8 177.1 262.0 178.3 262.0 C179.6 262.0 180.8 265.6 180.8 267.0 C180.8 268.4 179.1 269.9 178.3 270.3 C177.5 270.7 176.6 270.1 175.8 269.5 C175.0 268.9 172.9 268.2 173.3 267.0Z" fill="#f6f5ee"/><path d="M188.3 249.7 C188.6 248.4 191.4 246.4 193.3 245.3 C195.2 244.2 197.8 243.1 200.0 243.0 C202.2 242.9 204.2 243.9 206.7 244.7 C209.2 245.5 212.7 246.8 215.0 248.0 C217.3 249.2 220.3 251.0 220.3 252.0 C220.3 253.0 217.3 253.8 215.0 254.0 C212.7 254.2 209.5 253.2 206.7 253.0 C203.9 252.8 200.8 253.0 198.3 253.0 C195.8 253.0 193.4 253.6 191.7 253.0 C190.0 252.4 188.0 251.0 188.3 249.7Z" fill="#cfe8f8"/><path d="M235.0 240.3 C236.2 239.1 239.3 238.7 240.3 239.5 C241.3 240.3 241.3 243.5 241.0 245.3 C240.7 247.1 238.1 248.6 238.3 250.3 C238.5 252.0 241.7 253.6 242.0 255.3 C242.3 257.0 241.3 260.0 240.3 260.7 C239.3 261.4 236.9 260.9 236.0 259.7 C235.1 258.5 235.4 255.8 235.0 253.7 C234.6 251.6 233.3 249.2 233.3 247.0 C233.3 244.8 233.8 241.6 235.0 240.3Z" fill="#cfe8f8"/><path d="M198.7 282.0 C199.2 281.7 200.6 283.1 202.0 285.3 C203.4 287.5 205.1 291.7 207.0 295.3 C208.9 298.9 211.5 303.1 213.7 307.0 C215.9 310.9 218.4 315.4 220.3 318.7 C222.2 322.0 224.9 325.3 225.3 327.0 C225.7 328.7 224.1 330.1 222.7 329.0 C221.3 327.9 218.8 323.7 216.7 320.3 C214.6 316.9 212.2 312.6 210.0 308.7 C207.8 304.8 205.2 300.6 203.3 297.0 C201.4 293.4 199.5 289.5 198.7 287.0 C197.9 284.5 198.1 282.3 198.7 282.0Z" fill="#cfe8f8"/><path d="M230.0 278.7 C230.1 279.4 232.0 280.1 233.7 282.0 C235.4 283.9 238.1 288.1 240.3 290.3 C242.5 292.5 245.3 295.0 247.0 295.3 C248.7 295.6 250.6 293.4 250.3 292.3 C250.0 291.2 246.9 290.4 245.0 288.7 C243.1 287.0 240.6 283.8 238.7 282.0 C236.8 280.2 234.8 278.2 233.3 277.7 C231.9 277.1 229.9 278.0 230.0 278.7Z" fill="#cfe8f8"/><path d="M224.2 327.8 C225.3 327.0 230.1 326.9 233.3 325.7 C236.5 324.4 240.5 322.5 243.3 320.3 C246.1 318.1 248.1 315.2 250.0 312.3 C251.9 309.4 254.9 305.6 255.0 302.8 C255.1 300.0 249.8 296.8 250.3 295.3 C250.9 293.8 255.6 293.7 258.3 293.7 C261.0 293.7 263.9 294.5 266.7 295.3 C269.5 296.1 272.7 297.0 275.0 298.7 C277.3 300.4 278.9 303.1 280.3 305.3 C281.7 307.5 282.0 308.7 283.3 312.0 C284.6 315.3 286.6 321.4 288.3 325.3 C290.0 329.2 291.8 332.0 293.3 335.3 C294.8 338.6 307.5 343.6 297.5 345.3 C287.5 347.0 244.6 346.8 233.3 345.3 C222.1 343.8 231.1 338.6 230.0 336.2 C228.9 333.8 227.7 332.1 226.7 330.7 C225.7 329.3 223.1 328.6 224.2 327.8Z" fill="#c4e3f7"/><path d="M306.7 315.3 C308.9 312.0 315.0 300.3 316.7 305.3 C318.4 310.3 319.1 338.6 316.7 345.3 C314.2 352.0 304.8 347.0 302.0 345.3 C299.2 343.6 299.7 338.6 300.0 335.3 C300.3 332.0 302.6 328.6 303.7 325.3 C304.8 322.0 304.5 318.6 306.7 315.3Z" fill="#c4e3f7"/><g fill="none" stroke="#d8d6ce" stroke-width=".6"><path d="M100.0 283.7 L110.0 285.3 L115.0 295.3 L133.3 308.7 L148.3 298.7 L148.3 282.0"/><path d="M148.3 282.0 L150.0 268.7"/><path d="M148.3 298.7 L160.0 300.3 L176.7 308.7 L181.7 302.0 L181.7 278.7"/><path d="M181.7 302.0 L201.7 302.0"/><path d="M201.7 278.7 L198.3 285.3"/><path d="M115.0 295.3 L110.0 312.0 L121.7 318.7 L133.3 308.7"/><path d="M121.7 318.7 L130.0 328.7 L150.0 322.0 L160.0 300.3"/><path d="M150.0 322.0 L155.0 338.7"/><path d="M176.7 308.7 L178.3 328.7 L193.3 332.0 L203.3 318.7"/><path d="M208.3 278.7 L220.0 282.0 L233.3 278.7"/><path d="M220.0 282.0 L226.7 298.7 L250.0 312.0"/><path d="M226.7 298.7 L216.7 305.3"/><path d="M216.7 223.7 L230.0 217.0 L246.7 223.7 L260.0 210.3 L280.0 207.0 L296.7 220.3 L313.3 217.0"/><path d="M226.7 228.7 L233.3 222.0 L246.7 218.7 L260.0 207.0"/><path d="M246.7 253.7 L260.0 250.3 L273.3 258.7 L266.7 268.7 L260.0 282.0"/><path d="M243.3 262.0 L256.7 267.0 L263.3 282.0 L256.7 292.0"/><path d="M273.3 258.7 L283.3 262.0 L296.7 258.7"/><path d="M266.7 268.7 L280.0 282.0 L276.7 298.7"/><path d="M280.0 282.0 L293.3 278.7 L316.0 295.3"/><path d="M170.0 217.0 L178.3 223.7 L193.3 222.0 L203.3 227.0 L216.7 223.7"/><path d="M155.0 217.0 L163.3 223.7 L170.0 217.0"/><path d="M138.3 232.0 L143.3 238.7 L141.7 248.7"/><path d="M156.7 228.7 L170.0 232.0 L180.0 228.7 L193.3 235.3 L190.0 245.3"/><path d="M170.0 232.0 L173.3 245.3 L186.7 250.3"/></g><path d="M0.0 206.3 C0.8 202.6 3.2 206.2 4.9 208.7 C6.6 211.2 8.7 217.0 9.9 221.1 C11.1 225.2 13.1 230.9 12.3 233.4 C11.5 235.9 7.0 236.3 4.9 235.9 C2.9 235.5 0.8 235.9 0.0 231.0 C-0.8 226.1 -0.8 210.0 0.0 206.3Z" fill="#f6f5ee" opacity=".9"/><g font-family="Liberation Serif,serif" fill="#555" font-size="8.500" letter-spacing="1.300"><text x="157" y="227">EUROPE</text><text x="156" y="331">AFRICA</text></g><g font-family="Liberation Sans,sans-serif" font-style="italic" fill="#5a87a8" font-size="7.500" letter-spacing="1.300"><text x="18" y="285">Atlantic</text><text x="23" y="294.500">Ocean</text></g></svg>
<div class="a" style="left:1387.5px;top:446px;width:43.500px;height:43.500px;background:#414141"></div><svg class="a" style="left:1392.0px;top:450.5px" width="34.5" height="34.5" viewBox="0 0 34.5 34.5"><defs><linearGradient id="lb2" x1="0" y1="0" x2="0" y2="1"><stop offset="0" stop-color="#c4c4c4"/><stop offset="1" stop-color="#a2a2a2"/></linearGradient></defs><rect x=".5" y=".5" width="33.500" height="33.500" rx="2.500" fill="url(#lb2)" stroke="#8a8a8a" stroke-width="1"/><path d="M3.500 21 L17 15 L30.500 21 L17 27.500Z" fill="#6f6f6f"/><path d="M3.500 17.500 L17 11.500 L30.500 17.500 L17 24Z" fill="#8c8c8c"/><path d="M3.500 13.500 L17 7 L30.500 13.500 L17 20Z" fill="#c9c9c9" stroke="#aaa" stroke-width=".5"/></svg>
<div class="dot g" style="left:1273.7px;top:511.0px;width:8.600px;height:8.600px"></div><div class="lbl" style="left:1284.2px;top:509.3px;">Svalbard</div>
<div class="dot g" style="left:1286.0px;top:588.9px;width:8.600px;height:8.600px"></div><div class="lbl" style="left:1296.5px;top:587.2px;">Esrange</div>
<div class="dot g" style="left:1311.7px;top:708.7px;width:8.600px;height:8.600px"></div><div class="lbl" style="left:1322.2px;top:707.0px;">Makarios</div>
<div class="a" style="left:1242.5px;top:669.5px;width:23px;height:23px;border-radius:50%;background:rgba(140,235,140,.75)"></div><div class="a" style="left:1246px;top:673px;width:16px;height:16px;border-radius:50%;background:#6cc76c;color:#111;font-size:9px;line-height:16px;text-align:center">5</div>
<svg class="a" style="left:264px;top:39px" width="99" height="21" viewBox="0 0 99 21"><defs><linearGradient id="smt" x1="0" y1="0" x2="0" y2="1"><stop offset="0" stop-color="#d6d6d6"/><stop offset="1" stop-color="#8e8e8e"/></linearGradient></defs><path d="M0 21 V5 Q0 0 5 0 H59 C71 0 77 21 99 21 Z" fill="url(#smt)"/></svg>
<div class="dot g" style="left:270.500px;top:44px;width:9px;height:9px"></div>
<div class="t" style="left:287.2px;top:42.5px;font-size:9.1px;color:#161616">Site Map</div>
<svg class="a" style="left:1067.5px;top:41px" width="14" height="14" viewBox="0 0 14 14"><defs><radialGradient id="hg1074_48" cx="40%" cy="30%" r="75%"><stop offset="0" stop-color="#5a6cff"/><stop offset=".55" stop-color="#1420d8"/><stop offset="1" stop-color="#060a80"/></radialGradient></defs><circle cx="7" cy="7" r="5.6" fill="url(#hg1074_48)" stroke="#e8e8f4" stroke-width="1.1"/><text x="7" y="10.3" text-anchor="middle" font-family="Liberation Sans,sans-serif" font-weight="bold" font-size="9.5" fill="#fff">?</text></svg><svg class="a" style="left:1084.0px;top:41.5px" width="12" height="12" viewBox="0 0 12 12"><path d="M2.400 2.400 L9.600 9.600 M9.600 2.400 L2.400 9.600" stroke="#161616" stroke-width="3.800" stroke-linecap="round"/><path d="M2.400 2.400 L9.600 9.600 M9.600 2.400 L2.400 9.600" stroke="#f6f6f6" stroke-width="1.900" stroke-linecap="round"/></svg><svg class="a" style="left:1098.5px;top:44px" width="13" height="10" viewBox="0 0 13 10"><rect x=".9" y=".9" width="11.200" height="8.200" rx="1.600" fill="#2c2c2c" stroke="#e8e8e8" stroke-width="1.100"/><rect x="2.400" y="2.600" width="8.200" height="1.800" fill="#f0f0f0"/><rect x="2.900" y="5" width="7.200" height="2.400" rx=".6" fill="#4a4a4a" stroke="#d8d8d8" stroke-width=".7"/></svg>
<div class="panel" style="left:264px;top:59px;width:849px;height:483px;background:#505050;border-top:1px solid #8a8a8a"></div>
<div class="tool" style="left:266px;top:60px;width:846px;height:21px;background:#3b3b3b"></div>
<div class="a" style="left:266px;top:61px;width:9px;height:19px;background:linear-gradient(90deg,#4a4a4a,#6a6a6a 60%,#3a3a3a);border-radius:3px 0 0 3px"></div>
<svg class="a" style="left:278px;top:64.5px" width="12" height="12" viewBox="0 0 12 12"><rect x=".7" y=".7" width="10.600" height="10.600" rx=".6" fill="#3b76e2" stroke="#7fa8f0" stroke-width=".7"/><rect x="2" y="1" width="8" height="5.600" fill="#e6efff"/><rect x="2" y="1" width="8" height="1.200" fill="#9cbcf4"/><rect x="2.800" y="7.800" width="6.400" height="3.400" fill="#173a90"/><rect x="6.400" y="8.400" width="1.800" height="2.400" fill="#eef3ff"/></svg><svg class="a" style="left:297.5px;top:64.5px" width="14" height="12" viewBox="0 0 14 12"><path d="M1 3.200 h4 l1 1.200 h5 v6.600 h-10z" fill="#d8ae2c"/><path d="M1 11 l2.200-5 h9.600 l-2.200 5z" fill="#ffe470" stroke="#c89a18" stroke-width=".4"/><path d="M8.200 1.800 q2.200-1.400 3.800 .4 l.9-.8 v2.600 h-2.600 l.9-.9 q-1.100-1.200-2.800-1.100z" fill="#5ab82e"/></svg><div class="a" style="left:320px;top:62px;width:0;height:17px;border-left:1px dotted #222"></div><svg class="a" style="left:326.5px;top:64.0px" width="14" height="13" viewBox="0 0 14 13"><g transform="rotate(14 7 6.500)"><path d="M4.600 .8 h4.600 l.8 3.800 h-6.200z" fill="#f6f8ff" stroke="#9fb2d8" stroke-width=".4"/><path d="M2 5.600 q0-1.200 1.200-1.200 h7.400 q1.400 0 1.400 1.400 v2 q0 1-1 1 h-8 q-1 0-1-1z" fill="#2a58b8"/><path d="M2.400 5.400 h9" stroke="#8fb4ff" stroke-width=".8"/><path d="M4.200 7.800 h6.400 l1.400 3 h-8.600z" fill="#eef2fc" stroke="#9fb2d8" stroke-width=".4"/><path d="M4.800 9.200 h5.600" stroke="#6c86bc" stroke-width=".5"/></g></svg><svg class="a" style="left:348.5px;top:64.0px" width="12" height="13" viewBox="0 0 12 13"><rect x="1" y=".8" width="10" height="11.600" fill="#eef2fa" stroke="#4f79c8" stroke-width="1.100"/><rect x="2.600" y="2.200" width="6.800" height="3" fill="#5eae50"/><rect x="2.600" y="6.600" width="2.800" height="4.600" fill="#4a70d0"/><rect x="7" y="8.200" width="2.400" height="3" fill="#c860c8"/><path d="M3.400 3.800 L10.200 10.600" stroke="#f0c63c" stroke-width="1.700"/><path d="M9.600 10 L11.400 11.800" stroke="#e23c2c" stroke-width="1.700"/><path d="M2.600 3 L3.800 4.200" stroke="#333" stroke-width="1.200"/></svg><div class="a" style="left:369px;top:62px;width:0;height:17px;border-left:1px dotted #222"></div><svg class="a" style="left:376.5px;top:64.5px" width="12" height="12" viewBox="0 0 12 12"><path d="M7.800 7.800 L11 11" stroke="#9a8f88" stroke-width="2" stroke-linecap="round"/><path d="M8 8 L10.800 10.800" stroke="#c88c5c" stroke-width=".9" stroke-linecap="round"/><circle cx="4.900" cy="4.900" r="4" fill="#f2f6fd" stroke="#c4cfe2" stroke-width=".9"/><path d="M2.800 4.900 h4.200 M4.900 2.800 v4.200" stroke="#1c5fd2" stroke-width="1.600"/></svg><svg class="a" style="left:397.5px;top:64.5px" width="12" height="12" viewBox="0 0 12 12"><path d="M7.800 7.800 L11 11" stroke="#9a8f88" stroke-width="2" stroke-linecap="round"/><path d="M8 8 L10.800 10.800" stroke="#c88c5c" stroke-width=".9" stroke-linecap="round"/><circle cx="4.900" cy="4.900" r="4" fill="#f2f6fd" stroke="#c4cfe2" stroke-width=".9"/><path d="M2.700 4.900 h4.400" stroke="#1c5fd2" stroke-width="1.700"/></svg><svg class="a" style="left:419.0px;top:64.5px" width="13" height="12" viewBox="0 0 13 12"><rect x=".8" y=".8" width="11.400" height="10.400" fill="#f4f7fd" stroke="#8aa6da" stroke-width=".9"/><rect x=".8" y=".8" width="11.400" height="2.200" fill="#5b8ee0"/><circle cx="6.200" cy="7" r="2.700" fill="#e4ecfa" stroke="#5a6c8c" stroke-width=".9"/><path d="M8.200 9 L10.400 11" stroke="#5a6c8c" stroke-width="1.300"/></svg>
<svg class="a" style="left:265px;top:81px" width="846" height="459" viewBox="0 0 846 459"><defs><filter id="g3"><feGaussianBlur stdDeviation="3"/></filter><filter id="g7"><feGaussianBlur stdDeviation="7"/></filter><filter id="g14"><feGaussianBlur stdDeviation="14"/></filter><filter id="g1"><feGaussianBlur stdDeviation=".8"/></filter><filter id="fr0" x="-10%" y="-10%" width="120%" height="120%"><feGaussianBlur in="SourceAlpha" stdDeviation="4" result="b"/><feTurbulence type="fractalNoise" baseFrequency=".3" numOctaves="3" seed="5" result="n"/><feComposite in="b" in2="n" operator="arithmetic" k1="0" k2=".75" k3="1" k4="-.42" result="s"/><feColorMatrix in="s" type="matrix" values="0 0 0 0 0 0 0 0 0 0 0 0 0 0 0 0 0 0 18 -9" result="k"/><feComposite in="SourceGraphic" in2="k" operator="in"/></filter><filter id="fr1" x="-10%" y="-10%" width="120%" height="120%"><feGaussianBlur in="SourceAlpha" stdDeviation="2.2" result="b"/><feTurbulence type="fractalNoise" baseFrequency=".4" numOctaves="2" seed="7" result="n"/><feComposite in="b" in2="n" operator="arithmetic" k1="0" k2=".7" k3="1" k4="-.42" result="s"/><feColorMatrix in="s" type="matrix" values="0 0 0 0 0 0 0 0 0 0 0 0 0 0 0 0 0 0 18 -9" result="k"/><feComposite in="SourceGraphic" in2="k" operator="in"/></filter><filter id="fr2" x="-10%" y="-10%" width="120%" height="120%"><feGaussianBlur in="SourceAlpha" stdDeviation="1.6" result="b"/><feTurbulence type="fractalNoise" baseFrequency=".5" numOctaves="2" seed="11" result="n"/><feComposite in="b" in2="n" operator="arithmetic" k1="0" k2=".6" k3="1" k4="-.40" result="s"/><feColorMatrix in="s" type="matrix" values="0 0 0 0 0 0 0 0 0 0 0 0 0 0 0 0 0 0 18 -9" result="k"/><feComposite in="SourceGraphic" in2="k" operator="in"/></filter><filter id="fr3" x="-10%" y="-10%" width="120%" height="120%"><feGaussianBlur in="SourceAlpha" stdDeviation="3" result="b"/><feTurbulence type="fractalNoise" baseFrequency=".45" numOctaves="2" seed="23" result="n"/><feComposite in="b" in2="n" operator="arithmetic" k1="0" k2=".42" k3="1" k4="-.36" result="s"/><feColorMatrix in="s" type="matrix" values="0 0 0 0 0 0 0 0 0 0 0 0 0 0 0 0 0 0 18 -9" result="k"/><feComposite in="SourceGraphic" in2="k" operator="in"/></filter><filter id="fr4" x="-10%" y="-10%" width="120%" height="120%"><feGaussianBlur in="SourceAlpha" stdDeviation="2.5" result="b"/><feTurbulence type="fractalNoise" baseFrequency=".38" numOctaves="3" seed="31" result="n"/><feComposite in="b" in2="n" operator="arithmetic" k1="0" k2=".5" k3="1" k4="-.4" result="s"/><feColorMatrix in="s" type="matrix" values="0 0 0 0 0 0 0 0 0 0 0 0 0 0 0 0 0 0 18 -9" result="k"/><feComposite in="SourceGraphic" in2="k" operator="in"/></filter><filter id="relief" x="0" y="0" width="100%" height="100%"><feGaussianBlur in="SourceAlpha" stdDeviation="8" result="b"/><feTurbulence type="fractalNoise" baseFrequency=".09 .11" numOctaves="4" seed="4" result="n"/><feColorMatrix in="n" type="matrix" values="0 0 0 0 .62  0 0 0 0 .66  0 0 0 0 .52  0 0 0 3.2 -1.45" result="c"/><feComposite in="c" in2="b" operator="in"/></filter><linearGradient id="atl" x1="0" y1="0" x2="1" y2="0"><stop offset="0" stop-color="#e9f5fc"/><stop offset=".55" stop-color="#d9eefb"/><stop offset=".85" stop-color="#c4e7fb"/><stop offset="1" stop-color="#b2e1fb"/></linearGradient><linearGradient id="pac" x1="1" y1="0" x2="0" y2="1"><stop offset="0" stop-color="#dcf0fb"/><stop offset="1" stop-color="#b4dff9"/></linearGradient></defs><rect width="846" height="459" fill="#f9f9f5"/><g filter="url(#g7)" opacity=".75"><path d="M564.0 0.0 L846.0 0.0 L846.0 93.7 L819.6 102.2 L791.2 113.6 L762.8 113.6 L740.1 125.0 L717.4 136.3 L700.3 119.3 L683.3 102.2 L657.7 85.2 L629.3 82.4 L632.2 73.8 L629.3 56.8 L600.9 34.1 L564.0 22.7Z" fill="#d9e6c4"/><path d="M429.7 0.0 L564.0 0.0 L564.0 31.2 L537.6 56.8 L506.4 79.5 L497.8 119.3 L526.2 159.0 L564.0 159.0 L564.0 181.8 L526.2 181.8 L497.8 159.0 L480.8 119.3 L463.8 93.7 L452.4 65.3 L435.4 34.1Z" fill="#dfe9cb"/><path d="M0.0 0.0 L36.9 0.0 L42.6 25.6 L31.2 48.3 L17.0 73.8 L0.0 85.2Z" fill="#dfe9cb"/><path d="M76.7 0.0 L130.6 0.0 L159.0 56.8 L181.8 93.7 L187.4 130.6 L159.0 159.0 L125.0 147.7 L93.7 136.3 L79.5 99.4 L73.8 42.6Z" fill="#dfe9cb"/><path d="M170.4 107.9 L204.5 113.6 L215.8 159.0 L198.8 181.8 L176.1 159.0Z" fill="#e6edd6"/><path d="M11.4 230.0 L34.1 247.0 L56.8 303.8 L65.3 352.1 L39.8 349.3 L22.7 301.0 L5.7 252.7Z" fill="#e6edd6"/><path d="M136.3 264.1 L210.2 258.4 L282.0 230.0 L282.0 315.2 L255.6 349.3 L232.9 315.2 L198.8 303.8 L147.7 303.8Z" fill="#e6edd6"/><path d="M147.7 343.6 L198.8 337.9 L215.8 377.7 L170.4 377.7Z" fill="#e6edd6"/><path d="M635.0 258.4 L683.3 247.0 L723.0 230.0 L762.8 230.0 L762.8 258.4 L740.1 298.2 L706.0 337.9 L671.9 363.5 L620.8 377.7 L581.0 363.5 L581.0 337.9 L620.8 323.7 L643.5 301.0Z" fill="#dfe9cb"/><path d="M463.8 309.5 L526.2 315.2 L537.6 349.3 L514.9 389.0 L480.8 383.4 L463.8 349.3Z" fill="#e6edd6"/><path d="M469.4 389.0 L537.6 389.0 L564.0 428.8 L564.0 460.0 L463.8 460.0Z" fill="#e6edd6"/><path d="M564.0 372.0 L649.2 377.7 L683.3 406.1 L677.6 460.0 L564.0 460.0Z" fill="#e6edd6"/><path d="M598.1 107.9 L637.8 113.6 L657.7 147.7 L649.2 181.8 L615.1 181.8 L606.6 147.7Z" fill="#e6edd6"/><path d="M463.8 85.2 L564.0 71.0 L564.0 198.8 L537.6 215.8 L497.8 181.8 L469.4 136.3Z" fill="#e6edd6"/><path d="M564.0 71.0 L649.2 85.2 L683.3 176.1 L649.2 221.5 L564.0 198.8Z" fill="#e6edd6"/></g><g filter="url(#relief)" opacity=".55"><path d="M0.0 0.0 L39.8 0.0 L45.4 34.1 L31.2 73.8 L11.4 119.3 L0.0 122.1Z"/><path d="M73.8 0.0 L133.5 0.0 L164.7 59.6 L187.4 102.2 L198.8 147.7 L215.8 181.8 L198.8 210.2 L159.0 170.4 L125.0 153.4 L93.7 142.0 L79.5 99.4Z"/><path d="M8.5 230.0 L36.9 247.0 L62.5 309.5 L71.0 355.0 L42.6 355.0 L19.9 303.8 L2.8 252.7Z"/><path d="M127.8 230.0 L282.0 230.0 L282.0 323.7 L255.6 355.0 L227.2 320.9 L198.8 309.5 L147.7 309.5Z"/><path d="M142.0 343.6 L204.5 337.9 L221.5 383.4 L170.4 383.4Z"/><path d="M635.0 261.2 L683.3 249.9 L723.0 230.0 L762.8 224.3 L768.5 258.4 L745.8 298.2 L711.7 337.9 L677.6 363.5 L626.5 377.7 L586.7 363.5 L586.7 337.9 L626.5 323.7 L649.2 301.0Z"/><path d="M463.8 312.4 L526.2 318.0 L531.9 349.3 L509.2 377.7 L469.4 372.0Z"/><path d="M564.0 0.0 L846.0 0.0 L846.0 85.2 L805.4 107.9 L762.8 107.9 L723.0 125.0 L691.8 107.9 L657.7 82.4 L629.3 79.5 L600.9 34.1 L564.0 25.6Z"/><path d="M441.0 0.0 L564.0 0.0 L564.0 34.1 L526.2 62.5 L497.8 82.4 L466.6 93.7 L452.4 65.3Z"/></g><g filter="url(#relief)" opacity=".3"><path d="M0 0 H330 L345 120 L330 250 L345 380 L300 459 H120 L60 330 L0 290Z"/><path d="M560 150 L700 140 L760 250 L700 330 L600 330 L540 250Z"/></g><path d="M0.0 334.5 C1.4 336.0 5.7 340.2 8.5 343.6 C11.3 347.0 13.2 351.7 17.0 355.0 C20.8 358.3 25.5 361.1 31.2 363.5 C36.9 365.9 46.8 366.8 51.1 369.2 C55.4 371.6 53.9 374.4 56.8 377.7 C59.6 381.0 65.1 385.2 68.2 389.0 C71.3 392.8 72.9 396.1 75.3 400.4 C77.7 404.7 79.3 409.9 82.4 414.6 C85.5 419.3 89.9 423.6 93.7 428.8 C97.5 434.0 102.2 440.5 105.1 445.8 C108.0 451.1 128.8 458.1 111.3 460.6 C93.8 463.1 18.6 460.6 0.0 460.6Z" fill="url(#pac)"/><path d="M113.6 417.4 C115.7 415.0 121.7 413.2 125.0 414.6 C128.3 416.0 130.7 421.7 133.5 426.0 C136.3 430.3 138.4 434.4 142.0 440.2 C145.6 446.0 158.0 457.2 154.8 460.6 C151.6 464.0 129.1 463.5 122.7 460.6 C116.3 457.7 118.2 448.3 116.4 443.0 C114.7 437.7 112.7 433.1 112.2 428.8 C111.7 424.5 111.5 419.8 113.6 417.4Z" fill="#d3ebf8"/><path d="M848.0 224.3 C843.5 224.3 826.7 223.4 821.0 224.3 C815.3 225.2 816.0 227.2 813.9 230.0 C811.8 232.8 810.3 237.4 808.2 241.4 C806.1 245.4 803.7 250.6 801.1 254.1 C798.5 257.6 794.7 258.7 792.6 262.7 C790.5 266.7 790.0 274.3 788.4 278.3 C786.8 282.3 784.7 283.0 783.3 286.8 C781.9 290.6 781.1 296.7 779.8 301.0 C778.5 305.3 775.1 308.6 775.6 312.4 C776.1 316.2 781.0 319.9 782.7 323.7 C784.5 327.5 787.4 331.3 786.1 335.1 C784.8 338.9 778.6 342.6 774.7 346.4 C770.8 350.2 766.7 354.5 762.8 357.8 C758.9 361.1 755.2 363.9 751.4 366.3 C747.6 368.7 744.4 370.1 740.1 372.0 C735.9 373.9 730.6 374.9 725.9 377.7 C721.2 380.5 716.4 385.2 711.7 389.0 C707.0 392.8 701.3 396.1 697.5 400.4 C693.7 404.7 691.4 409.9 689.0 414.6 C686.6 419.3 684.7 423.6 683.3 428.8 C681.9 434.0 680.3 440.4 680.4 445.8 C680.5 451.2 656.0 458.9 683.9 461.5 C711.8 464.1 820.6 461.5 848.0 461.5Z" fill="url(#atl)"/><path d="M829.5 215.8 L846.0 208.7 L846.0 230.0 L819.6 230.0 L813.9 227.2Z" fill="#dff1fb"/><path d="M767.4 258.4 C767.4 254.6 770.1 257.4 771.3 261.2 C772.5 265.0 774.2 273.9 774.7 281.1 C775.2 288.3 774.9 300.5 774.2 304.4 C773.6 308.3 771.3 307.8 770.8 304.4 C770.3 301.0 771.9 291.7 771.3 284.0 C770.7 276.3 767.4 262.2 767.4 258.4Z" fill="#d3ebf8"/><path d="M789.8 247.0 C790.3 246.1 792.1 250.1 794.0 251.3 C795.9 252.5 800.6 252.9 801.1 254.1 C801.6 255.3 798.5 257.9 796.9 258.4 C795.2 258.9 792.4 258.9 791.2 257.0 C790.0 255.1 789.3 247.9 789.8 247.0Z" fill="#d3ebf8"/><path d="M537.6 450.1 C540.4 447.9 547.4 447.5 551.8 447.3 C556.2 447.1 562.0 446.5 564.0 448.7 C566.0 450.9 568.9 458.6 564.0 460.6 C559.1 462.6 539.2 462.4 534.8 460.6 C530.4 458.9 534.8 452.3 537.6 450.1Z" fill="#d3ebf8"/><path d="M503.1 85.3 C504.0 83.7 512.2 80.8 516.7 77.7 C521.2 74.6 525.8 70.3 530.3 66.9 C534.8 63.5 540.0 60.1 543.9 57.4 C547.8 54.7 550.5 53.5 553.4 50.6 C556.3 47.7 559.2 43.6 561.5 39.7 C563.8 35.9 565.0 29.3 567.0 27.5 C569.0 25.7 570.8 28.0 573.7 28.9 C576.6 29.8 581.0 31.5 584.6 32.9 C588.2 34.2 592.3 35.0 595.5 37.0 C598.7 39.0 600.9 42.7 603.6 45.2 C606.3 47.7 608.6 49.9 611.8 51.9 C615.0 53.9 619.9 54.9 622.6 57.4 C625.3 59.9 627.3 63.5 628.0 66.9 C628.7 70.3 626.2 74.5 626.7 77.7 C627.2 80.9 631.5 83.9 630.8 85.9 C630.1 88.0 625.8 90.0 622.6 90.0 C619.4 90.0 615.0 87.7 611.8 85.9 C608.6 84.1 606.3 80.9 603.6 79.1 C600.9 77.3 598.7 75.2 595.5 75.0 C592.3 74.8 587.8 77.9 584.6 77.7 C581.4 77.5 578.5 75.5 576.5 73.7 C574.5 71.9 574.0 67.8 572.4 66.9 C570.8 66.0 569.0 66.6 567.0 68.2 C565.0 69.8 563.2 74.4 560.2 76.4 C557.2 78.5 552.9 79.4 549.3 80.5 C545.7 81.6 542.5 82.4 538.4 83.2 C534.3 84.0 529.4 84.6 524.9 85.3 C520.4 86.0 514.9 87.2 511.3 87.2 C507.7 87.2 502.2 86.9 503.1 85.3Z" fill="#d3ebf8"/><path d="M587.3 106.2 C588.4 103.9 592.3 103.1 595.5 102.2 C598.7 101.3 603.1 100.3 606.3 100.8 C609.5 101.2 611.8 104.5 614.5 104.9 C617.2 105.4 619.9 103.3 622.6 103.5 C625.3 103.7 630.3 104.6 630.8 106.2 C631.2 107.8 627.6 111.0 625.3 113.0 C623.0 115.0 619.9 116.2 617.2 118.5 C614.5 120.8 611.3 123.4 609.0 126.6 C606.7 129.8 604.7 133.4 603.6 137.5 C602.5 141.6 602.0 146.9 602.2 151.0 C602.4 155.1 604.8 157.4 605.0 161.9 C605.2 166.4 604.7 173.2 603.6 178.2 C602.5 183.2 600.5 188.6 598.2 191.8 C595.9 195.0 593.0 196.1 590.0 197.2 C587.0 198.3 582.8 199.9 580.5 198.6 C578.2 197.2 577.3 193.4 576.5 189.1 C575.7 184.8 575.7 178.2 575.9 172.8 C576.1 167.4 577.0 161.9 577.8 156.5 C578.6 151.1 579.4 145.2 580.5 140.2 C581.6 135.2 583.2 130.7 584.6 126.6 C586.0 122.5 588.2 119.2 588.7 115.8 C589.2 112.4 586.2 108.5 587.3 106.2Z" fill="#d3ebf8"/><path d="M573.7 134.8 C574.8 131.1 579.5 122.7 581.9 118.5 C584.3 114.3 587.1 109.3 587.9 109.8 C588.7 110.2 588.2 117.0 586.8 121.2 C585.4 125.4 581.6 131.6 579.7 134.8 C577.8 138.1 576.4 140.7 575.4 140.7 C574.4 140.7 572.6 138.5 573.7 134.8Z" fill="#d3ebf8"/><path d="M636.2 107.6 C637.6 106.0 642.9 104.4 647.0 103.5 C651.1 102.6 656.5 101.5 660.6 102.2 C664.7 102.9 668.3 105.3 671.5 107.6 C674.7 109.9 677.3 114.9 679.6 115.8 C681.9 116.7 682.4 114.4 685.1 113.0 C687.8 111.6 692.3 107.1 695.9 107.6 C699.5 108.1 704.1 112.6 706.8 115.8 C709.5 119.0 711.8 123.4 712.2 126.6 C712.7 129.8 711.8 133.9 709.5 134.8 C707.2 135.7 702.0 133.4 698.6 132.0 C695.2 130.6 691.8 128.4 689.1 126.6 C686.4 124.8 684.3 121.2 682.3 121.2 C680.3 121.2 678.0 123.4 676.9 126.6 C675.8 129.8 676.3 135.7 675.6 140.2 C674.9 144.7 674.2 149.7 672.8 153.8 C671.4 157.9 669.3 161.4 667.4 164.6 C665.5 167.8 663.2 173.0 661.2 172.8 C659.2 172.6 657.5 165.8 655.7 163.3 C653.9 160.8 652.3 158.4 650.3 157.8 C648.3 157.2 645.2 160.8 643.8 159.7 C642.3 158.6 641.3 154.2 641.6 151.0 C641.9 147.8 644.8 144.3 645.7 140.2 C646.6 136.1 647.3 130.7 647.0 126.6 C646.7 122.5 645.2 118.1 643.8 115.8 C642.4 113.5 639.7 114.4 638.4 113.0 C637.1 111.6 634.8 109.2 636.2 107.6Z" fill="#d3ebf8"/><path d="M657.9 102.2 C657.9 101.0 664.5 98.8 668.8 98.4 C673.1 98.0 679.6 98.8 683.7 100.0 C687.8 101.2 693.4 104.2 693.2 105.4 C693.0 106.6 686.4 107.1 682.3 107.1 C678.2 107.1 672.9 106.2 668.8 105.4 C664.7 104.6 657.9 103.4 657.9 102.2Z" fill="#d3ebf8"/><path d="M664.7 104.3 C665.8 103.5 673.0 102.9 675.6 103.3 C678.2 103.7 681.3 105.7 680.2 106.5 C679.1 107.3 671.4 108.6 668.8 108.2 C666.2 107.8 663.6 105.1 664.7 104.3Z" fill="#f9f9f5"/><path d="M655.2 198.6 C655.7 195.9 657.9 191.1 660.6 189.1 C663.3 187.1 667.4 186.8 671.5 186.3 C675.6 185.8 680.6 187.2 685.1 186.3 C689.6 185.4 694.1 182.7 698.6 180.9 C703.1 179.1 708.6 176.8 712.2 175.5 C715.8 174.2 718.5 172.4 720.4 172.8 C722.3 173.2 725.0 175.9 723.6 178.2 C722.2 180.4 716.8 183.6 712.2 186.3 C707.6 189.0 700.9 192.0 695.9 194.5 C690.9 197.0 686.8 199.5 682.3 201.3 C677.8 203.1 672.9 204.7 668.8 205.4 C664.7 206.1 660.2 206.5 657.9 205.4 C655.6 204.3 654.8 201.3 655.2 198.6Z" fill="#d3ebf8"/><ellipse cx="657.9" cy="180.9" rx="2.600" ry="2.300" fill="#d3ebf8"/><path d="M720.2 159.0 C721.6 156.8 729.2 155.1 734.4 153.4 C739.6 151.8 745.7 149.6 751.4 149.1 C757.1 148.6 765.1 149.1 768.5 150.5 C771.9 151.9 773.3 155.7 771.9 157.6 C770.5 159.5 764.8 160.7 760.0 161.9 C755.2 163.1 748.6 163.9 742.9 164.7 C737.2 165.4 729.7 167.3 725.9 166.4 C722.1 165.5 718.8 161.2 720.2 159.0Z" fill="#d3ebf8"/><path d="M553.4 -2.4 C556.2 -4.9 571.1 -4.5 574.3 -2.4 C577.5 -0.3 574.2 7.0 572.7 9.9 C571.2 12.8 568.2 14.9 565.6 15.3 C563.0 15.8 559.4 15.5 557.4 12.6 C555.4 9.7 550.6 0.1 553.4 -2.4Z" fill="#d3ebf8"/><path d="M768.5 150.5 L791.2 133.5 L813.9 113.6 L831.0 96.6 L846.0 85.2" fill="none" stroke="#d3ebf8" stroke-width="2.200"/><g fill="none" stroke="#c3e1f1" stroke-width=".9"><path d="M282.0 45.4 C277.6 46.8 264.7 52.1 255.6 54.0 C246.5 55.9 236.7 57.0 227.2 56.8 C217.7 56.5 206.4 51.1 198.8 52.5 C191.2 53.9 187.0 61.8 181.8 65.3 C176.6 68.8 170.9 70.5 167.6 73.8 C164.3 77.1 161.4 81.9 161.9 85.2 C162.4 88.5 169.0 92.3 170.4 93.7"/><path d="M282.0 45.4 C284.8 46.4 292.9 50.6 299.0 51.1 C305.1 51.6 312.3 45.0 318.9 48.3 C325.5 51.6 332.6 63.0 338.8 71.0 C345.0 79.0 352.0 87.6 355.8 96.6 C359.6 105.6 358.2 114.6 361.5 125.0 C364.8 135.4 369.1 150.0 375.7 159.0 C382.3 168.0 393.2 175.1 401.3 178.9 C409.4 182.7 418.8 176.6 424.0 181.8 C429.2 187.0 429.9 202.2 432.5 210.2 C435.1 218.2 438.4 226.7 439.6 230.0"/><path d="M17.0 51.1 C19.4 50.6 26.9 47.3 31.2 48.3 C35.5 49.2 41.6 53.0 42.6 56.8 C43.6 60.6 36.4 66.3 36.9 71.0 C37.4 75.7 40.7 81.9 45.4 85.2 C50.1 88.5 60.3 89.5 65.3 90.9 C70.3 92.3 73.6 93.2 75.3 93.7"/><path d="M75.3 161.9 C78.4 163.3 87.3 167.6 93.7 170.4 C100.1 173.2 107.0 177.0 113.6 178.9 C120.2 180.8 126.9 183.7 133.5 181.8 C140.1 179.9 147.2 172.3 153.4 167.6 C159.6 162.9 167.6 155.8 170.4 153.4"/><path d="M282.0 244.2 C277.6 244.7 263.3 244.6 255.6 247.0 C247.9 249.4 242.8 255.1 235.7 258.4 C228.6 261.7 219.2 262.2 213.0 266.9 C206.8 271.6 204.0 281.1 198.8 286.8 C193.6 292.5 186.5 296.7 181.8 301.0 C177.1 305.3 174.2 309.1 170.4 312.4 C166.6 315.7 165.2 319.0 159.0 320.9 C152.8 322.8 140.6 323.2 133.5 323.7 C126.4 324.2 119.2 323.7 116.4 323.7"/><path d="M264.1 284.0 C265.5 286.8 272.1 294.4 272.6 301.0 C273.1 307.6 269.8 315.6 267.0 323.7 C264.2 331.8 258.4 340.3 255.6 349.3 C252.8 358.3 249.9 369.2 249.9 377.7 C249.9 386.2 254.7 393.9 255.6 400.4 C256.6 406.9 255.6 414.1 255.6 416.9"/><path d="M282.0 281.1 C287.7 281.3 304.3 282.0 316.1 282.5 C327.9 283.0 343.1 281.9 353.0 284.0 C362.9 286.1 368.6 294.8 375.7 295.3 C382.8 295.8 389.0 284.4 395.6 286.8 C402.2 289.2 409.8 303.4 415.5 309.5 C421.2 315.6 423.6 319.0 429.7 323.7 C435.8 328.4 448.6 335.5 452.4 337.9"/><path d="M463.8 93.7 C465.7 96.1 471.3 103.6 475.1 107.9 C478.9 112.2 484.6 117.4 486.5 119.3"/><path d="M549.0 306.7 C548.0 308.6 545.2 311.9 543.3 318.0 C541.4 324.1 539.5 337.0 537.6 343.6 C535.7 350.2 534.3 353.1 531.9 357.8 C529.5 362.5 525.8 366.4 523.4 372.0 C521.0 377.6 518.2 384.7 517.7 391.3 C517.2 397.9 521.1 405.6 520.6 411.8 C520.1 418.1 514.0 422.2 514.9 428.8 C515.8 435.4 524.3 447.7 526.2 451.5"/><path d="M564.0 286.8 C565.9 286.8 570.7 289.2 575.4 286.8 C580.1 284.4 586.7 274.0 592.4 272.6 C598.1 271.2 603.8 280.9 609.4 278.3 C615.0 275.7 620.2 259.4 625.9 257.0 C631.6 254.6 637.7 264.3 643.5 264.1 C649.3 263.9 654.9 256.1 660.6 255.6 C666.3 255.1 672.9 261.7 677.6 261.2 C682.3 260.7 687.1 254.1 689.0 252.7"/></g><g fill="none" stroke="#d4d0d4" stroke-width=".9"><path d="M196.0 0.0 L196.0 26.1"/><path d="M75.3 55.4 L75.3 196.5"/><path d="M0.0 196.8 L178.4 196.8"/><path d="M127.8 26.1 L133.5 42.6 L147.7 62.5 L153.4 85.2 L164.7 99.4 L170.4 119.3 L178.4 133.5"/><path d="M178.4 133.5 L178.4 218.7"/><path d="M178.4 126.4 L282.0 126.4"/><path d="M178.4 218.7 L282.0 218.7"/><path d="M127.2 196.8 L127.2 230.6"/><path d="M25.6 196.8 L25.6 230.6"/><path d="M449.6 0.0 L449.6 17.0"/><path d="M297.6 26.1 L297.6 220.1"/><path d="M297.6 103.7 L425.4 103.7"/><path d="M415.5 26.1 L418.3 56.8 L424.0 85.2 L425.4 103.7 L428.3 161.9"/><path d="M282.0 126.4 L297.6 126.4"/><path d="M297.6 173.8 L404.1 173.8 L424.0 181.8 L428.3 187.4 L435.4 213.0 L439.6 230.6"/><path d="M428.3 162.5 L512.0 162.5"/><path d="M282.0 220.1 L331.7 220.1 L331.7 230.6"/><path d="M497.8 85.2 L492.2 107.9 L486.5 119.3 L497.8 133.5 L509.2 153.4 L512.0 162.5 L523.4 181.8 L534.8 193.1 L531.9 210.2 L520.6 224.4 L523.4 230.6"/><path d="M534.8 186.0 L564.0 186.0"/><path d="M564.0 186.0 L581.0 186.0"/><path d="M579.6 203.1 L654.9 203.1"/><path d="M619.4 203.1 L625.9 230.6"/><path d="M725.9 196.0 L819.6 196.0"/><path d="M700.3 196.0 L700.3 230.6"/><path d="M25.6 230.0 L25.6 266.9 L116.4 346.4 L125.0 366.3 L119.3 377.7 L113.6 397.6"/><path d="M127.2 230.0 L127.2 315.2 L116.4 323.7 L116.4 346.4"/><path d="M127.2 307.3 L282.0 307.3"/><path d="M212.4 230.0 L212.4 424.5"/><path d="M255.6 411.2 L282.0 411.2"/><path d="M331.7 230.0 L331.7 307.3"/><path d="M282.0 307.3 L458.1 307.3"/><path d="M315.5 307.3 L315.5 410.3 L282.0 410.3"/><path d="M315.5 318.6 L366.6 318.6 L366.6 357.8 L381.4 369.2 L401.3 372.0 L424.0 377.7 L446.7 374.8 L460.9 377.7 L468.0 380.5 L468.0 428.8 L472.3 460.6"/><path d="M441.0 230.0 L446.7 238.5 L452.4 255.6 L458.1 266.9 L458.1 307.3 L460.4 307.3 L460.4 377.7"/><path d="M459.5 318.0 L537.6 318.0"/><path d="M468.0 391.3 L517.7 391.3"/><path d="M523.4 230.0 L531.9 258.4 L543.3 286.8 L554.6 303.8 L549.0 306.7 L543.3 318.0 L537.6 343.6 L531.9 357.8 L523.4 372.0 L517.7 391.3 L520.6 411.8 L514.9 428.8"/><path d="M537.6 349.3 L564.0 349.3"/><path d="M514.9 428.8 L564.0 428.8"/><path d="M564.0 314.6 L777.0 314.6"/><path d="M564.0 349.3 L657.7 349.3 L697.5 346.4 L706.0 352.1 L723.0 355.0 L740.1 372.0"/><path d="M666.2 353.5 L677.6 372.0 L689.0 389.0 L697.5 400.4"/><path d="M613.7 349.3 L620.8 400.4 L622.2 428.8 L623.6 438.7"/><path d="M564.0 436.8 L622.2 438.7 L680.4 438.7"/><path d="M564.0 349.3 L566.8 428.8"/><path d="M625.9 230.0 L625.9 257.0"/><path d="M700.3 247.0 L791.2 247.0"/><path d="M745.8 247.0 L762.8 266.9 L774.2 278.3"/><path d="M657.7 314.6 L689.0 286.8 L711.7 275.4 L734.4 252.7 L745.8 247.0"/><path d="M689.0 252.7 L697.5 275.4 L689.0 286.8"/><path d="M791.2 230.0 L791.2 247.0"/><path d="M819.6 196.0 L825.3 230.6"/><path d="M828.1 125.0 L828.1 196.0"/><path d="M828.1 125.0 L846.0 125.0"/></g><g fill="none" stroke="#cdb9cf" stroke-width="1.100"><path d="M0.0 26.1 L282.0 26.1"/><path d="M282.0 26.1 L449.6 26.1 L451.0 16.5 L455.2 19.9 L463.8 34.1 L480.8 39.8 L495.0 42.6"/><path d="M495.0 41.1 L505.9 49.2 L522.2 47.9 L533.0 51.9 L549.3 50.6 L562.9 43.8 L576.5 49.2 L603.6 64.2 L622.6 77.7 L630.8 88.6 L641.6 99.5 L655.2 106.2 L663.3 115.8 L668.8 134.8 L671.5 156.5 L668.8 172.8 L657.9 186.3 L655.2 198.6 L663.3 201.3 L685.1 194.5 L712.2 180.9 L723.1 172.8 L728.7 167.6 L768.5 153.4 L791.2 133.5 L813.9 125.0 L828.1 125.0"/><path d="M715.9 0.0 L715.9 68.2 L723.0 82.4 L740.1 96.6 L760.0 107.9 L768.5 116.4"/><path d="M75.3 400.4 L113.6 397.6 L116.4 400.4 L176.1 424.5 L227.2 424.5 L227.2 417.4 L255.6 416.9 L269.8 428.8 L282.0 440.2"/><path d="M282.0 440.2 L293.4 454.4 L299.0 460.6"/></g><path d="M695.0 200.1 C696.1 196.4 703.5 189.0 708.3 184.6 C713.1 180.2 719.4 176.7 723.9 173.4 C728.4 170.1 730.5 166.8 735.0 164.6 C739.5 162.4 745.4 162.0 750.6 160.1 C755.8 158.2 762.8 156.7 766.1 153.4 C769.4 150.1 770.6 143.8 770.6 140.1 C770.6 136.4 765.7 134.2 766.1 131.2 C766.5 128.2 769.5 124.5 772.8 122.3 C776.1 120.1 781.7 117.9 786.1 117.9 C790.5 117.9 796.4 123.0 799.4 122.3 C802.4 121.5 800.9 116.0 803.9 113.4 C806.9 110.8 812.8 107.9 817.2 106.8 C821.7 105.7 827.6 104.9 830.6 106.8 C833.6 108.7 835.0 113.8 835.0 117.9 C835.0 122.0 830.6 127.1 830.6 131.2 C830.6 135.3 835.4 138.6 835.0 142.3 C834.6 146.0 828.3 149.7 828.3 153.4 C828.3 157.1 834.2 160.5 835.0 164.6 C835.8 168.7 834.6 174.2 832.8 177.9 C830.9 181.6 827.2 185.7 823.9 186.8 C820.6 187.9 816.1 183.1 812.8 184.6 C809.5 186.1 806.1 191.6 803.9 195.7 C801.7 199.8 801.6 205.7 799.4 209.0 C797.2 212.3 793.5 216.4 790.6 215.7 C787.7 215.0 785.4 207.2 781.7 204.6 C778.0 202.0 772.8 199.7 768.3 200.1 C763.8 200.5 759.4 204.6 755.0 206.8 C750.6 209.0 746.2 212.7 741.7 213.4 C737.2 214.1 732.8 212.7 728.3 211.2 C723.8 209.7 719.4 205.3 715.0 204.6 C710.6 203.9 705.0 207.6 701.7 206.8 C698.4 206.1 693.9 203.8 695.0 200.1Z M756.1 175.7 C757.2 174.2 762.4 173.5 763.9 174.6 C765.4 175.7 766.1 180.8 765.0 182.3 C763.9 183.8 758.7 184.5 757.2 183.4 C755.7 182.3 755.0 177.2 756.1 175.7Z M786.1 172.3 C787.4 171.4 793.7 170.6 795.0 171.2 C796.3 171.8 795.2 175.2 793.9 176.1 C792.6 177.0 788.5 177.4 787.2 176.8 C785.9 176.2 784.8 173.2 786.1 172.3Z M777.2 130.1 C778.9 129.1 786.5 128.2 788.3 129.0 C790.1 129.8 789.6 133.6 787.9 134.6 C786.2 135.6 780.1 135.9 778.3 135.2 C776.5 134.4 775.5 131.1 777.2 130.1Z M810.6 144.6 C812.1 142.0 819.5 140.5 821.7 142.3 C823.9 144.2 825.4 153.1 823.9 155.7 C822.4 158.3 815.0 159.8 812.8 157.9 C810.6 156.1 809.1 147.2 810.6 144.6Z M746.1 186.8 C746.7 185.1 749.7 183.5 750.6 184.6 C751.5 185.7 752.3 191.7 751.7 193.4 C751.1 195.1 748.1 195.7 747.2 194.6 C746.3 193.5 745.5 188.5 746.1 186.8Z M728.3 195.7 C729.8 194.0 737.2 192.3 739.4 193.4 C741.6 194.5 743.2 200.6 741.7 202.3 C740.2 204.0 732.8 204.5 730.6 203.4 C728.4 202.3 726.8 197.4 728.3 195.7Z M803.9 162.3 C805.2 160.8 811.1 160.1 812.8 161.2 C814.5 162.3 815.2 167.5 813.9 169.0 C812.6 170.5 806.7 171.2 805.0 170.1 C803.3 169.0 802.6 163.8 803.9 162.3Z" fill="#4169b2" fill-rule="evenodd" filter="url(#fr0)" opacity="0.88"/><path d="M710.6 142.3 C712.5 140.1 720.6 139.0 723.9 140.1 C727.2 141.2 730.6 146.4 730.6 149.0 C730.6 151.6 726.9 155.0 723.9 155.7 C720.9 156.4 715.0 155.6 712.8 153.4 C710.6 151.2 708.8 144.5 710.6 142.3Z" fill="#4169b2" filter="url(#fr4)" opacity="0.9"/><path d="M699.4 177.9 C700.9 176.0 709.8 173.0 712.8 173.4 C715.8 173.8 718.7 178.2 717.2 180.1 C715.7 182.0 706.9 185.0 703.9 184.6 C700.9 184.2 697.9 179.8 699.4 177.9Z" fill="#4169b2" filter="url(#fr3)" opacity="0.9"/><path d="M755.0 133.4 C757.0 132.3 766.4 133.8 768.3 135.7 C770.1 137.6 768.1 143.5 766.1 144.6 C764.1 145.7 758.0 144.2 756.1 142.3 C754.2 140.4 753.0 134.5 755.0 133.4Z" fill="#4169b2" filter="url(#fr3)" opacity="0.9"/><path d="M808.3 182.3 C811.3 179.0 825.8 173.0 830.6 173.4 C835.4 173.8 838.0 180.9 837.2 184.6 C836.5 188.3 830.2 194.2 826.1 195.7 C822.0 197.2 815.8 195.6 812.8 193.4 C809.8 191.2 805.3 185.6 808.3 182.3Z" fill="#4169b2" filter="url(#fr3)" opacity="0.9"/><path d="M737.2 213.4 C738.7 210.8 752.7 209.0 759.4 209.0 C766.1 209.0 775.0 211.2 777.2 213.4 C779.4 215.6 777.2 220.4 772.8 222.3 C768.4 224.2 756.5 226.1 750.6 224.6 C744.7 223.1 735.7 216.0 737.2 213.4Z" fill="#8ea2cc" filter="url(#fr3)" opacity="0.8"/><path d="M777.2 213.4 C778.3 212.1 784.2 211.2 786.1 212.3 C788.0 213.4 789.4 218.8 788.3 220.1 C787.2 221.4 781.2 221.2 779.4 220.1 C777.5 219.0 776.1 214.7 777.2 213.4Z" fill="#4169b2" filter="url(#fr3)" opacity="1"/><path d="M723.9 177.9 C724.6 173.8 732.0 169.0 737.2 166.8 C742.4 164.6 749.8 166.4 755.0 164.6 C760.2 162.8 764.6 159.0 768.3 155.7 C772.0 152.4 773.5 146.1 777.2 144.6 C780.9 143.1 786.9 143.9 790.6 146.8 C794.3 149.8 798.7 157.1 799.4 162.3 C800.1 167.5 796.9 173.1 795.0 177.9 C793.1 182.7 792.0 188.6 788.3 191.2 C784.6 193.8 777.6 193.8 772.8 193.4 C768.0 193.0 763.8 189.0 759.4 189.0 C755.0 189.0 750.5 193.0 746.1 193.4 C741.7 193.8 736.5 193.8 732.8 191.2 C729.1 188.6 723.2 182.0 723.9 177.9Z M756.1 175.7 C757.2 174.2 762.4 173.5 763.9 174.6 C765.4 175.7 766.1 180.8 765.0 182.3 C763.9 183.8 758.7 184.5 757.2 183.4 C755.7 182.3 755.0 177.2 756.1 175.7Z M786.1 172.3 C787.4 171.4 793.7 170.6 795.0 171.2 C796.3 171.8 795.2 175.2 793.9 176.1 C792.6 177.0 788.5 177.4 787.2 176.8 C785.9 176.2 784.8 173.2 786.1 172.3Z" fill="#34a6b4" fill-rule="evenodd" filter="url(#fr1)" opacity="0.9"/><path d="M803.9 133.4 C806.1 131.8 816.4 130.4 819.4 131.2 C822.4 131.9 823.9 136.3 821.7 137.9 C819.5 139.5 809.1 141.3 806.1 140.6 C803.1 139.8 801.7 135.0 803.9 133.4Z" fill="#34a6b4" filter="url(#fr2)" opacity="0.9"/><path d="M821.7 117.9 C822.8 115.7 828.9 114.2 830.6 115.7 C832.3 117.2 833.0 124.6 831.9 126.8 C830.8 129.0 825.6 130.5 823.9 129.0 C822.2 127.5 820.6 120.1 821.7 117.9Z" fill="#34a6b4" filter="url(#fr2)" opacity="0.9"/><path d="M708.3 193.4 C710.9 190.8 724.2 186.4 728.3 186.8 C732.4 187.2 735.4 193.1 732.8 195.7 C730.2 198.3 716.9 202.7 712.8 202.3 C708.7 201.9 705.7 196.0 708.3 193.4Z" fill="#34a6b4" filter="url(#fr2)" opacity="0.85"/><path d="M808.3 164.6 C810.5 162.4 822.4 160.8 826.1 162.3 C829.8 163.8 832.8 171.2 830.6 173.4 C828.4 175.6 816.5 177.2 812.8 175.7 C809.1 174.2 806.1 166.8 808.3 164.6Z" fill="#34a6b4" filter="url(#fr3)" opacity="0.9"/><path d="M777.2 146.8 C779.1 144.2 784.2 142.8 786.1 144.6 C788.0 146.4 789.0 154.6 788.3 157.9 C787.6 161.2 783.9 164.2 781.7 164.6 C779.5 165.0 775.8 163.1 775.0 160.1 C774.2 157.1 775.4 149.4 777.2 146.8Z" fill="#1fbe3c" filter="url(#fr1)" opacity="1"/><path d="M732.8 175.7 C733.9 173.1 739.9 170.1 741.7 171.2 C743.6 172.3 745.0 179.7 743.9 182.3 C742.8 184.9 736.9 187.9 735.0 186.8 C733.1 185.7 731.7 178.3 732.8 175.7Z" fill="#1fbe3c" filter="url(#fr1)" opacity="1"/><path d="M768.3 180.1 C770.5 177.9 780.2 174.9 783.9 175.7 C787.6 176.4 791.0 182.0 790.6 184.6 C790.2 187.2 785.0 190.5 781.7 191.2 C778.4 191.9 772.8 190.8 770.6 189.0 C768.4 187.2 766.1 182.3 768.3 180.1Z" fill="#1fbe3c" filter="url(#fr1)" opacity="1"/><path d="M788.3 166.8 C789.8 165.3 797.2 163.9 799.4 164.6 C801.6 165.3 803.2 169.7 801.7 171.2 C800.2 172.7 792.8 174.1 790.6 173.4 C788.4 172.7 786.8 168.3 788.3 166.8Z" fill="#1fbe3c" filter="url(#fr2)" opacity="1"/><path d="M786.1 197.9 C787.0 196.6 791.5 195.0 792.8 195.7 C794.1 196.4 795.0 201.0 794.1 202.3 C793.2 203.6 788.7 204.4 787.4 203.7 C786.1 203.0 785.2 199.2 786.1 197.9Z" fill="#1fbe3c" filter="url(#fr2)" opacity="1"/><path d="M823.9 120.1 C824.6 118.8 828.4 118.1 829.4 119.0 C830.4 119.9 830.8 124.4 830.1 125.7 C829.4 127.0 826.0 127.7 825.0 126.8 C824.0 125.9 823.2 121.4 823.9 120.1Z" fill="#1fbe3c" filter="url(#fr2)" opacity="1"/><path d="M726.1 166.8 C727.4 165.5 733.3 164.8 735.0 165.7 C736.7 166.6 737.4 171.0 736.1 172.3 C734.8 173.6 728.9 174.3 727.2 173.4 C725.5 172.5 724.8 168.1 726.1 166.8Z" fill="#1fbe3c" filter="url(#fr2)" opacity="1"/><path d="M755.0 189.0 C755.8 188.0 759.5 187.2 760.6 187.9 C761.7 188.6 762.5 192.4 761.7 193.4 C761.0 194.4 757.2 194.6 756.1 193.9 C755.0 193.2 754.2 190.0 755.0 189.0Z" fill="#1fbe3c" filter="url(#fr2)" opacity="1"/><ellipse cx="781.7" cy="154.6" rx="2.840102243680773" ry="6.248224936097699" fill="#46e25a" filter="url(#fr2)" opacity="1" transform="rotate(10 781.7 154.6)"/><ellipse cx="738.3" cy="179.0" rx="2.840102243680773" ry="5.112184038625391" fill="#46e25a" filter="url(#fr2)" opacity="1" transform="rotate(0 738.3 179.0)"/><ellipse cx="779.4" cy="183.4" rx="7.384265833570009" ry="3.9761431411530817" fill="#46e25a" filter="url(#fr2)" opacity="1" transform="rotate(0 779.4 183.4)"/><circle cx="743.9" cy="222.3" r="6" fill="#a89f58" filter="url(#fr3)" opacity=".8"/><circle cx="812.8" cy="181.2" r="4" fill="#a89f58" filter="url(#fr3)" opacity=".8"/><path d="M679.4 220.1 C681.2 218.6 689.1 220.1 692.8 222.3 C696.5 224.5 697.3 230.4 701.7 233.4 C706.1 236.4 712.7 238.6 719.4 240.1 C726.1 241.6 737.2 240.8 741.7 242.3 C746.2 243.8 747.6 247.2 746.1 249.0 C744.6 250.8 737.2 251.9 732.8 253.4 C728.3 254.9 723.1 254.6 719.4 257.9 C715.7 261.2 714.7 270.8 710.6 273.4 C706.5 276.0 696.5 276.7 695.0 273.4 C693.5 270.1 702.4 258.6 701.7 253.4 C701.0 248.2 693.9 246.0 690.6 242.3 C687.3 238.6 683.6 234.9 681.7 231.2 C679.8 227.5 677.5 221.6 679.4 220.1Z" fill="#4169b2" filter="url(#fr3)" opacity="0.9"/><path d="M681.7 222.3 C683.6 221.2 691.7 222.4 695.0 224.6 C698.3 226.8 702.1 233.1 701.7 235.7 C701.3 238.3 695.8 240.8 692.8 240.1 C689.8 239.3 685.8 234.2 683.9 231.2 C682.0 228.2 679.9 223.4 681.7 222.3Z" fill="#34a6b4" filter="url(#fr3)" opacity="0.9"/><path d="M719.4 242.3 C722.4 240.6 737.6 242.3 741.7 243.4 C745.8 244.5 746.9 247.3 743.9 249.0 C740.9 250.7 728.0 254.5 723.9 253.4 C719.8 252.3 716.4 244.0 719.4 242.3Z" fill="#34a6b4" filter="url(#fr3)" opacity="0.9"/><path d="M706.1 240.1 C708.0 239.3 715.7 240.8 717.2 242.3 C718.7 243.8 716.9 248.2 715.0 249.0 C713.1 249.8 707.6 248.7 706.1 247.2 C704.6 245.7 704.2 240.9 706.1 240.1Z" fill="#1fbe3c" filter="url(#fr2)" opacity="1"/><path d="M697.2 257.9 C698.7 255.7 706.1 254.2 708.3 255.7 C710.5 257.2 712.1 264.6 710.6 266.8 C709.1 269.0 701.6 270.5 699.4 269.0 C697.2 267.5 695.7 260.1 697.2 257.9Z" fill="#34a6b4" filter="url(#fr3)" opacity="0.9"/><path d="M701.7 269.0 C703.9 266.0 715.7 264.9 719.4 266.8 C723.1 268.7 726.1 277.1 723.9 280.1 C721.7 283.1 709.8 286.5 706.1 284.6 C702.4 282.8 699.5 272.0 701.7 269.0Z" fill="#3a64ac" filter="url(#fr3)" opacity="0.95"/><path d="M708.3 231.2 C711.2 230.0 724.6 230.1 728.3 231.2 C732.0 232.3 733.5 236.7 730.6 237.9 C727.7 239.1 714.3 239.4 710.6 238.3 C706.9 237.2 705.3 232.4 708.3 231.2Z" fill="#4169b2" filter="url(#fr3)" opacity="0.8"/><path d="M589.6 105.1 L632.2 164.7" stroke="#4a82c8" stroke-width="1" fill="none" stroke-dasharray="2 1.500"/><path d="M618.0 144.8 L633.6 166.1" stroke="#1fbe3c" stroke-width="1.200" fill="none" stroke-dasharray="2 1"/><path d="M442.8 274.6 C443.5 270.5 446.4 263.6 449.4 261.2 C452.4 258.8 457.1 259.4 460.6 260.1 C464.1 260.9 468.4 262.9 470.6 265.7 C472.8 268.5 473.7 272.7 473.9 276.8 C474.1 280.9 473.5 286.8 471.7 290.1 C469.9 293.4 466.1 296.1 462.8 296.8 C459.5 297.6 454.7 296.5 451.7 294.6 C448.7 292.8 446.5 289.0 445.0 285.7 C443.5 282.4 442.1 278.7 442.8 274.6Z" fill="#1fbe3c" filter="url(#fr1)" opacity="1"/><path d="M436.1 283.4 C437.4 281.7 442.4 278.6 445.0 280.1 C447.6 281.6 451.0 289.0 451.7 292.3 C452.4 295.6 451.2 299.2 449.4 300.1 C447.5 301.0 442.6 299.6 440.6 297.9 C438.6 296.2 437.9 292.5 437.2 290.1 C436.4 287.7 434.8 285.1 436.1 283.4Z" fill="#1fbe3c" filter="url(#fr1)" opacity="1"/><path d="M471.7 281.2 C472.8 277.9 477.7 273.0 480.6 272.3 C483.6 271.6 489.0 273.8 489.4 276.8 C489.8 279.8 485.4 287.5 482.8 290.1 C480.2 292.7 475.8 293.8 473.9 292.3 C472.0 290.8 470.6 284.5 471.7 281.2Z" fill="#4a82c8" filter="url(#fr4)" opacity="0.9"/><path d="M473.9 279.0 C475.0 276.8 480.9 275.0 482.8 275.7 C484.7 276.4 486.1 281.2 485.0 283.4 C483.9 285.6 478.0 289.7 476.1 289.0 C474.2 288.3 472.8 281.2 473.9 279.0Z" fill="#34a6b4" filter="url(#fr3)" opacity="1"/><path d="M485.0 272.3 C486.9 270.5 495.8 269.7 500.6 270.1 C505.4 270.5 510.2 272.4 513.9 274.6 C517.6 276.8 522.1 280.1 522.8 283.4 C523.5 286.7 518.7 291.3 518.3 294.6 C517.9 297.9 521.3 301.9 520.6 303.4 C519.9 304.9 516.5 304.5 513.9 303.4 C511.3 302.3 507.2 299.8 505.0 296.8 C502.8 293.9 503.2 288.3 500.6 285.7 C498.0 283.1 492.0 283.4 489.4 281.2 C486.8 279.0 483.1 274.1 485.0 272.3Z" fill="#1fbe3c" filter="url(#fr1)" opacity="1"/><path d="M511.7 247.9 C512.5 247.2 518.7 249.0 522.8 250.1 C526.9 251.2 532.0 252.4 536.1 254.6 C540.2 256.8 544.2 260.1 547.2 263.4 C550.2 266.7 554.3 273.1 553.9 274.6 C553.5 276.1 548.7 274.5 545.0 272.3 C541.3 270.1 536.2 264.1 531.7 261.2 C527.2 258.2 521.6 256.8 518.3 254.6 C515.0 252.4 510.9 248.7 511.7 247.9Z" fill="#34a6b4" filter="url(#fr2)" opacity="1"/><path d="M527.2 252.3 C527.2 251.2 536.9 254.2 540.6 256.8 C544.3 259.4 549.4 266.8 549.4 267.9 C549.4 269.0 544.3 266.0 540.6 263.4 C536.9 260.8 527.2 253.4 527.2 252.3Z" fill="#1fbe3c" filter="url(#fr2)" opacity="1"/><path d="M529.4 287.9 C530.9 287.5 538.4 289.2 540.6 290.1 C542.8 291.0 544.3 293.0 542.8 293.4 C541.3 293.8 533.9 293.2 531.7 292.3 C529.5 291.4 527.9 288.3 529.4 287.9Z" fill="#1fbe3c" filter="url(#fr2)" opacity="1"/><path d="M458.3 297.9 C459.8 297.5 467.9 299.2 469.4 300.1 C470.9 301.0 468.7 303.0 467.2 303.4 C465.7 303.8 462.1 303.2 460.6 302.3 C459.1 301.4 456.8 298.3 458.3 297.9Z" fill="#1fbe3c" filter="url(#fr2)" opacity="1"/><ellipse cx="467.2" cy="310.6" rx="4.544163589889236" ry="1.7040613462084635" fill="#4a82c8" filter="url(#fr2)" opacity="1" transform="rotate(0 467.2 310.6)"/><ellipse cx="462.8" cy="317.2" rx="2.272081794944618" ry="1.4200511218403864" fill="#4a82c8" filter="url(#fr2)" opacity="1" transform="rotate(0 462.8 317.2)"/><path d="M441.7 276.8 C442.6 272.0 447.1 265.1 451.7 263.4 C456.3 261.7 465.9 262.7 469.4 266.8 C472.9 270.9 474.3 283.1 472.8 287.9 C471.3 292.7 465.1 295.0 460.6 295.7 C456.2 296.4 449.2 295.4 446.1 292.3 C443.0 289.2 440.8 281.6 441.7 276.8Z" fill="#46e25a" filter="url(#fr3)" opacity="0.9"/><path d="M487.2 274.6 C490.1 272.9 503.6 270.5 509.4 272.3 C515.1 274.1 520.2 280.9 521.7 285.7 C523.2 290.5 521.1 299.7 518.3 301.2 C515.5 302.7 509.4 297.8 505.0 294.6 C500.6 291.5 494.7 285.6 491.7 282.3 C488.7 279.0 484.2 276.3 487.2 274.6Z" fill="#46e25a" filter="url(#fr3)" opacity="0.9"/><path d="M447.2 267.9 C450.5 263.8 465.3 264.2 469.4 267.9 C473.5 271.6 475.0 286.0 471.7 290.1 C468.4 294.2 453.5 296.0 449.4 292.3 C445.3 288.6 443.9 272.0 447.2 267.9Z" fill="#e6e63a" filter="url(#fr3)" opacity="0.55"/><path d="M496.1 276.8 C498.7 274.9 514.6 277.5 518.3 281.2 C522.0 284.9 520.9 297.1 518.3 299.0 C515.7 300.9 506.5 296.0 502.8 292.3 C499.1 288.6 493.5 278.7 496.1 276.8Z" fill="#e6e63a" filter="url(#fr3)" opacity="0.5"/><path d="M435.0 282.3 C436.7 282.3 441.9 279.6 442.8 276.8 C443.7 274.0 439.1 268.7 440.6 265.7 C442.1 262.7 450.6 260.5 451.7 259.0 C452.8 257.5 449.6 255.7 447.2 256.8 C444.8 257.9 439.6 262.4 437.2 265.7 C434.8 269.0 433.2 274.0 432.8 276.8 C432.4 279.6 433.3 282.3 435.0 282.3Z" fill="#4a82c8" filter="url(#fr3)" opacity="0.8"/><path d="M516.1 274.6 C517.0 273.5 525.9 278.6 527.2 283.4 C528.5 288.2 525.4 299.7 523.9 303.4 C522.4 307.1 518.7 307.9 518.3 305.7 C517.9 303.5 522.1 295.3 521.7 290.1 C521.3 284.9 515.2 275.7 516.1 274.6Z" fill="#4a82c8" filter="url(#fr3)" opacity="0.8"/><ellipse cx="463.9" cy="280.1" rx="7.384265833570009" ry="5.680204487361546" fill="#e6e63a" filter="url(#fr2)" opacity="1" transform="rotate(0 463.9 280.1)"/><ellipse cx="463.9" cy="280.1" rx="3.408122692416927" ry="2.5560920193126955" fill="#f0902a" filter="url(#fr2)" opacity="1" transform="rotate(0 463.9 280.1)"/><ellipse cx="508.3" cy="291.2" rx="4.544163589889236" ry="4.260153365521159" fill="#e6e63a" filter="url(#fr2)" opacity="1" transform="rotate(0 508.3 291.2)"/><ellipse cx="508.3" cy="291.7" rx="1.7040613462084635" ry="1.7040613462084635" fill="#f0902a" filter="url(#fr2)" opacity="1" transform="rotate(0 508.3 291.7)"/><ellipse cx="443.9" cy="293.4" rx="2.5560920193126955" ry="2.272081794944618" fill="#e6e63a" filter="url(#fr2)" opacity="1" transform="rotate(0 443.9 293.4)"/><ellipse cx="458.3" cy="272.3" rx="2.840102243680773" ry="2.272081794944618" fill="#e6e63a" filter="url(#fr2)" opacity="1" transform="rotate(0 458.3 272.3)"/><ellipse cx="453.9" cy="285.7" rx="8.520306731042318" ry="7.384265833570009" fill="#46e25a" filter="url(#fr3)" opacity="1" transform="rotate(0 453.9 285.7)"/><path d="M401.7 359.0 C402.6 355.9 406.2 354.5 409.4 353.4 C412.5 352.3 416.9 352.1 420.6 352.3 C424.3 352.5 428.8 352.8 431.7 354.6 C434.6 356.5 436.8 359.7 438.3 363.4 C439.8 367.1 440.6 372.7 440.6 376.8 C440.6 380.9 440.2 386.2 438.3 387.9 C436.4 389.6 432.0 387.9 429.4 386.8 C426.8 385.7 425.0 381.4 422.8 381.2 C420.6 381.0 418.7 385.3 416.1 385.7 C413.5 386.1 409.2 385.6 407.2 383.4 C405.2 381.2 404.8 376.4 403.9 372.3 C403.0 368.2 400.8 362.1 401.7 359.0Z" fill="#1fbe3c" filter="url(#fr1)" opacity="1"/><path d="M429.4 363.4 C430.3 363.0 436.2 368.2 438.3 372.3 C440.4 376.4 441.9 385.2 441.7 387.9 C441.5 390.6 438.7 390.5 437.2 388.3 C435.7 386.1 434.1 378.8 432.8 374.6 C431.5 370.5 428.5 363.8 429.4 363.4Z" fill="#4a82c8" filter="url(#fr2)" opacity="1"/><path d="M420.6 345.7 C422.8 345.6 432.0 347.9 436.1 350.1 C440.2 352.3 443.9 356.9 445.0 359.0 C446.1 361.1 444.7 363.3 442.8 362.6 C440.9 361.9 437.2 357.0 433.9 355.0 C430.6 353.0 425.0 352.2 422.8 350.6 C420.6 349.1 418.4 345.8 420.6 345.7Z" fill="#34a6b4" filter="url(#fr2)" opacity="1"/><path d="M398.3 341.2 C399.1 340.4 403.2 341.9 403.9 343.4 C404.6 344.9 403.1 349.4 402.3 350.1 C401.5 350.9 399.5 349.4 398.8 347.9 C398.1 346.4 397.5 341.9 398.3 341.2Z" fill="#1fbe3c" filter="url(#fr2)" opacity="1"/><path d="M403.9 346.8 C405.4 344.6 411.3 342.0 416.1 341.7 C420.9 341.4 428.3 342.5 432.8 345.2 C437.3 347.9 441.7 353.4 443.2 357.9 C444.7 362.4 442.7 371.4 441.7 372.3 C440.7 373.2 439.2 366.3 437.2 363.4 C435.1 360.4 432.9 356.8 429.4 354.6 C425.9 352.4 419.8 350.1 416.1 350.1 C412.4 350.1 409.2 355.2 407.2 354.6 C405.2 354.1 402.4 349.0 403.9 346.8Z" fill="#1fbe3c" filter="url(#fr2)" opacity="0.95"/><path d="M398.3 350.1 C399.0 347.9 403.7 350.9 405.0 354.6 C406.3 358.3 405.4 367.1 406.1 372.3 C406.8 377.5 409.8 384.2 409.4 385.7 C409.0 387.2 405.4 384.2 403.9 381.2 C402.4 378.2 401.5 373.1 400.6 367.9 C399.7 362.7 397.6 352.3 398.3 350.1Z" fill="#1fbe3c" filter="url(#fr2)" opacity="0.95"/><path d="M436.1 354.6 C436.8 353.5 444.2 359.0 446.1 363.4 C448.0 367.8 447.7 377.5 447.2 381.2 C446.7 384.9 444.1 387.5 443.2 385.7 C442.3 383.9 442.9 375.3 441.7 370.1 C440.5 364.9 435.4 355.7 436.1 354.6Z" fill="#48b4cc" filter="url(#fr2)" opacity="0.9"/><ellipse cx="408.3" cy="369.0" rx="2.840102243680773" ry="4.260153365521159" fill="#f0902a" filter="url(#fr2)" opacity="1" transform="rotate(0 408.3 369.0)"/><ellipse cx="409.4" cy="370.1" rx="4.544163589889236" ry="6.248224936097699" fill="#e6e63a" filter="url(#fr3)" opacity="1" transform="rotate(0 409.4 370.1)"/><ellipse cx="420.6" cy="370.1" rx="10.224368077250782" ry="11.360408974723091" fill="#46e25a" filter="url(#fr3)" opacity="1" transform="rotate(0 420.6 370.1)"/><ellipse cx="391.7" cy="403.4" rx="2.272081794944618" ry="3.9761431411530817" fill="#34a6b4" filter="url(#fr2)" opacity="1" transform="rotate(-20 391.7 403.4)"/><ellipse cx="400.6" cy="411.2" rx="2.840102243680773" ry="3.408122692416927" fill="#34a6b4" filter="url(#fr2)" opacity="1" transform="rotate(-30 400.6 411.2)"/><ellipse cx="407.2" cy="392.3" rx="3.408122692416927" ry="2.272081794944618" fill="#1fbe3c" filter="url(#fr2)" opacity="1" transform="rotate(0 407.2 392.3)"/><ellipse cx="340.2" cy="372.0" rx="2.272081794944618" ry="2.272081794944618" fill="#34a6b4" filter="url(#fr3)" opacity="1" transform="rotate(0 340.2 372.0)"/><ellipse cx="341.6" cy="343.6" rx="2.840102243680773" ry="2.840102243680773" fill="#4a82c8" filter="url(#fr3)" opacity="1" transform="rotate(0 341.6 343.6)"/><ellipse cx="389.9" cy="457.2" rx="3.9761431411530817" ry="1.7040613462084635" fill="#1fbe3c" filter="url(#fr2)" opacity="1" transform="rotate(0 389.9 457.2)"/><ellipse cx="496.4" cy="144.8" rx="22.720817949446182" ry="5.680204487361546" fill="#4a82c8" filter="url(#fr1)" opacity="1" transform="rotate(52 496.4 144.8)"/><ellipse cx="497.8" cy="146.3" rx="17.040613462084636" ry="3.6921329167850043" fill="#48b4cc" filter="url(#fr2)" opacity="1" transform="rotate(52 497.8 146.3)"/><ellipse cx="500.7" cy="149.1" rx="7.952286282306163" ry="2.272081794944618" fill="#1fbe3c" filter="url(#fr2)" opacity="1" transform="rotate(52 500.7 149.1)"/><ellipse cx="529.1" cy="176.1" rx="15.904572564612327" ry="3.6921329167850043" fill="#34a6b4" filter="url(#fr1)" opacity="1" transform="rotate(35 529.1 176.1)"/><ellipse cx="537.6" cy="177.5" rx="8.520306731042318" ry="2.272081794944618" fill="#4a82c8" filter="url(#fr2)" opacity="1" transform="rotate(35 537.6 177.5)"/><ellipse cx="465.2" cy="150.5" rx="12.496449872195399" ry="11.360408974723091" fill="#3f69b2" filter="url(#fr3)" opacity="1" transform="rotate(0 465.2 150.5)"/><ellipse cx="509.2" cy="142.0" rx="3.408122692416927" ry="5.680204487361546" fill="#4a82c8" filter="url(#fr2)" opacity="1" transform="rotate(-20 509.2 142.0)"/><path d="M419.7 51.1 C421.1 48.0 430.9 46.0 435.4 46.9 C439.9 47.8 443.9 52.3 446.7 56.8 C449.5 61.3 451.9 69.3 452.4 73.8 C452.9 78.3 452.0 82.8 449.6 83.8 C447.2 84.8 442.0 82.6 438.2 79.5 C434.4 76.4 429.9 70.0 426.8 65.3 C423.7 60.6 418.3 54.2 419.7 51.1Z" fill="#3f69b2" filter="url(#fr4)" opacity="1"/><ellipse cx="439.6" cy="66.7" rx="6.248224936097699" ry="8.520306731042318" fill="#34a6b4" filter="url(#fr2)" opacity="1" transform="rotate(-30 439.6 66.7)"/><ellipse cx="470.9" cy="70.4" rx="6.248224936097699" ry="3.9761431411530817" fill="#3f69b2" filter="url(#fr4)" opacity="1" transform="rotate(30 470.9 70.4)"/><ellipse cx="436.8" cy="24.1" rx="6.816245384833854" ry="5.680204487361546" fill="#3f69b2" filter="url(#fr2)" opacity="1" transform="rotate(0 436.8 24.1)"/><path d="M331.7 0.0 C338.8 -2.8 365.8 -2.4 372.9 0.0 C380.0 2.4 375.7 9.7 374.3 14.2 C372.9 18.7 368.9 25.4 364.4 27.0 C359.9 28.6 352.0 23.9 347.3 24.1 C342.6 24.3 338.8 29.6 336.0 28.4 C333.2 27.2 331.0 21.7 330.3 17.0 C329.6 12.3 324.6 2.8 331.7 0.0Z" fill="#3f69b2" filter="url(#fr4)" opacity="1"/><ellipse cx="343.1" cy="12.8" rx="3.9761431411530817" ry="12.496449872195399" fill="#1fbe3c" filter="url(#fr1)" opacity="1" transform="rotate(10 343.1 12.8)"/><ellipse cx="353.0" cy="12.8" rx="11.360408974723091" ry="10.224368077250782" fill="#34a6b4" filter="url(#fr1)" opacity="1" transform="rotate(0 353.0 12.8)"/><ellipse cx="357.3" cy="11.4" rx="5.680204487361546" ry="6.816245384833854" fill="#5fc0d8" filter="url(#fr2)" opacity="1" transform="rotate(0 357.3 11.4)"/><ellipse cx="338.8" cy="49.7" rx="8.520306731042318" ry="7.952286282306163" fill="#3f69b2" filter="url(#fr4)" opacity="1" transform="rotate(0 338.8 49.7)"/><ellipse cx="338.8" cy="51.1" rx="3.408122692416927" ry="2.840102243680773" fill="#34a6b4" filter="url(#fr2)" opacity="1" transform="rotate(0 338.8 51.1)"/><ellipse cx="290.5" cy="48.3" rx="4.544163589889236" ry="17.040613462084636" fill="#3f69b2" filter="url(#fr4)" opacity="1" transform="rotate(25 290.5 48.3)"/><ellipse cx="290.5" cy="46.9" rx="1.9880715705765408" ry="8.520306731042318" fill="#34a6b4" filter="url(#fr2)" opacity="1" transform="rotate(25 290.5 46.9)"/><ellipse cx="401.3" cy="115.0" rx="5.680204487361546" ry="9.656347628514627" fill="#3f69b2" filter="url(#fr3)" opacity="1" transform="rotate(0 401.3 115.0)"/><ellipse cx="367.2" cy="34.1" rx="8.520306731042318" ry="6.816245384833854" fill="#3f69b2" filter="url(#fr3)" opacity="1" transform="rotate(0 367.2 34.1)"/><circle cx="353.0" cy="42.6" r="6" fill="#a89f58" filter="url(#fr3)" opacity=".8"/><circle cx="412.6" cy="63.9" r="6" fill="#a89f58" filter="url(#fr3)" opacity=".8"/><circle cx="355.8" cy="82.9" r="6" fill="#a89f58" filter="url(#fr3)" opacity=".8"/><ellipse cx="327.4" cy="169.0" rx="13.064470320931553" ry="8.520306731042318" fill="#34a6b4" filter="url(#fr1)" opacity="1" transform="rotate(-25 327.4 169.0)"/><ellipse cx="324.6" cy="173.2" rx="5.680204487361546" ry="3.408122692416927" fill="#1fbe3c" filter="url(#fr2)" opacity="1" transform="rotate(-25 324.6 173.2)"/><ellipse cx="310.4" cy="188.9" rx="15.904572564612327" ry="7.384265833570009" fill="#1fbe3c" filter="url(#fr2)" opacity="1" transform="rotate(0 310.4 188.9)"/><ellipse cx="299.0" cy="196.0" rx="8.520306731042318" ry="3.9761431411530817" fill="#3f69b2" filter="url(#fr3)" opacity="1" transform="rotate(0 299.0 196.0)"/><ellipse cx="51.1" cy="27.0" rx="14.200511218403863" ry="5.112184038625391" fill="#3f69b2" filter="url(#fr4)" opacity="1" transform="rotate(0 51.1 27.0)"/><ellipse cx="82.4" cy="36.9" rx="11.360408974723091" ry="8.520306731042318" fill="#3f69b2" filter="url(#fr3)" opacity="1" transform="rotate(0 82.4 36.9)"/><ellipse cx="96.6" cy="45.4" rx="6.816245384833854" ry="3.408122692416927" fill="#3f69b2" filter="url(#fr4)" opacity="1" transform="rotate(0 96.6 45.4)"/><path d="M127.8 34.1 C130.7 31.7 142.5 35.1 147.7 39.8 C152.9 44.5 158.1 56.4 159.0 62.5 C159.9 68.7 156.7 75.3 153.4 76.7 C150.1 78.1 143.0 74.8 139.2 71.0 C135.4 67.2 132.5 60.1 130.6 54.0 C128.7 47.9 125.0 36.5 127.8 34.1Z" fill="#3f69b2" filter="url(#fr4)" opacity="1"/><path d="M107.9 82.4 C110.0 78.9 116.4 78.1 122.1 78.1 C127.8 78.1 137.7 79.3 142.0 82.4 C146.3 85.5 147.7 91.4 147.7 96.6 C147.7 101.8 145.3 109.8 142.0 113.6 C138.7 117.4 132.5 119.3 127.8 119.3 C123.1 119.3 116.7 116.9 113.6 113.6 C110.5 110.3 110.2 104.6 109.3 99.4 C108.3 94.2 105.8 86.0 107.9 82.4Z" fill="#3f69b2" filter="url(#fr3)" opacity="0.9"/><ellipse cx="133.5" cy="93.7" rx="8.520306731042318" ry="11.360408974723091" fill="#3f69b2" filter="url(#fr4)" opacity="1" transform="rotate(20 133.5 93.7)"/><ellipse cx="113.6" cy="130.6" rx="17.040613462084636" ry="11.360408974723091" fill="#46e25a" filter="url(#fr3)" opacity="0.7" transform="rotate(0 113.6 130.6)"/><ellipse cx="136.3" cy="133.5" rx="8.520306731042318" ry="11.360408974723091" fill="#34a6b4" filter="url(#fr3)" opacity="0.6" transform="rotate(0 136.3 133.5)"/><ellipse cx="194.5" cy="119.3" rx="13.064470320931553" ry="8.520306731042318" fill="#3f69b2" filter="url(#fr4)" opacity="1" transform="rotate(0 194.5 119.3)"/><ellipse cx="167.6" cy="136.3" rx="10.792388525986937" ry="6.248224936097699" fill="#3f69b2" filter="url(#fr4)" opacity="1" transform="rotate(-20 167.6 136.3)"/><ellipse cx="166.1" cy="139.7" rx="7.384265833570009" ry="2.840102243680773" fill="#1fbe3c" filter="url(#fr1)" opacity="1" transform="rotate(-20 166.1 139.7)"/><ellipse cx="200.2" cy="160.5" rx="10.792388525986937" ry="10.224368077250782" fill="#3f69b2" filter="url(#fr4)" opacity="1" transform="rotate(0 200.2 160.5)"/><path d="M157.6 178.9 C160.0 174.6 165.4 172.3 170.4 170.4 C175.4 168.5 185.0 164.8 187.4 167.6 C189.8 170.4 186.5 182.2 184.6 187.4 C182.7 192.6 178.0 194.1 176.1 198.8 C174.2 203.5 176.0 213.4 173.2 215.8 C170.3 218.2 161.8 216.3 159.0 213.0 C156.2 209.7 156.4 201.7 156.2 196.0 C156.0 190.3 155.2 183.2 157.6 178.9Z" fill="#3f69b2" filter="url(#fr4)" opacity="1"/><ellipse cx="166.1" cy="203.1" rx="5.112184038625391" ry="11.360408974723091" fill="#1fbe3c" filter="url(#fr1)" opacity="1" transform="rotate(0 166.1 203.1)"/><ellipse cx="167.6" cy="196.0" rx="3.408122692416927" ry="8.520306731042318" fill="#34a6b4" filter="url(#fr2)" opacity="1" transform="rotate(0 167.6 196.0)"/><ellipse cx="183.2" cy="194.5" rx="3.9761431411530817" ry="3.408122692416927" fill="#34a6b4" filter="url(#fr1)" opacity="1" transform="rotate(0 183.2 194.5)"/><ellipse cx="235.7" cy="106.5" rx="15.904572564612327" ry="5.112184038625391" fill="#3f69b2" filter="url(#fr4)" opacity="1" transform="rotate(-38 235.7 106.5)"/><ellipse cx="242.8" cy="98.0" rx="5.112184038625391" ry="6.248224936097699" fill="#1fbe3c" filter="url(#fr1)" opacity="1" transform="rotate(0 242.8 98.0)"/><ellipse cx="237.1" cy="105.1" rx="8.520306731042318" ry="2.272081794944618" fill="#34a6b4" filter="url(#fr2)" opacity="1" transform="rotate(-38 237.1 105.1)"/><ellipse cx="275.5" cy="75.3" rx="6.816245384833854" ry="7.384265833570009" fill="#1fbe3c" filter="url(#fr1)" opacity="1" transform="rotate(-30 275.5 75.3)"/><ellipse cx="255.6" cy="110.8" rx="5.680204487361546" ry="2.272081794944618" fill="#34a6b4" filter="url(#fr1)" opacity="1" transform="rotate(0 255.6 110.8)"/><ellipse cx="244.2" cy="139.2" rx="6.248224936097699" ry="9.088327179778473" fill="#3f69b2" filter="url(#fr4)" opacity="1" transform="rotate(0 244.2 139.2)"/><ellipse cx="261.3" cy="203.1" rx="6.816245384833854" ry="8.520306731042318" fill="#3f69b2" filter="url(#fr3)" opacity="1" transform="rotate(0 261.3 203.1)"/><ellipse cx="254.2" cy="83.8" rx="2.840102243680773" ry="2.272081794944618" fill="#34a6b4" filter="url(#fr1)" opacity="1" transform="rotate(0 254.2 83.8)"/><ellipse cx="63.9" cy="98.0" rx="7.952286282306163" ry="4.544163589889236" fill="#1fbe3c" filter="url(#fr1)" opacity="1" transform="rotate(0 63.9 98.0)"/><ellipse cx="48.3" cy="109.3" rx="9.656347628514627" ry="5.112184038625391" fill="#1fbe3c" filter="url(#fr2)" opacity="1" transform="rotate(0 48.3 109.3)"/><ellipse cx="56.8" cy="106.5" rx="11.360408974723091" ry="6.816245384833854" fill="#3f69b2" filter="url(#fr3)" opacity="1" transform="rotate(0 56.8 106.5)"/><ellipse cx="75.3" cy="135.8" rx="7.384265833570009" ry="8.520306731042318" fill="#1fbe3c" filter="url(#fr1)" opacity="1" transform="rotate(0 75.3 135.8)"/><ellipse cx="72.4" cy="133.5" rx="8.520306731042318" ry="10.224368077250782" fill="#3f69b2" filter="url(#fr3)" opacity="1" transform="rotate(0 72.4 133.5)"/><ellipse cx="59.6" cy="164.2" rx="6.248224936097699" ry="7.952286282306163" fill="#1fbe3c" filter="url(#fr1)" opacity="1" transform="rotate(0 59.6 164.2)"/><ellipse cx="78.1" cy="155.6" rx="4.544163589889236" ry="6.816245384833854" fill="#3f69b2" filter="url(#fr4)" opacity="1" transform="rotate(0 78.1 155.6)"/><ellipse cx="99.4" cy="180.3" rx="6.816245384833854" ry="3.408122692416927" fill="#1fbe3c" filter="url(#fr1)" opacity="1" transform="rotate(0 99.4 180.3)"/><ellipse cx="82.4" cy="174.7" rx="4.544163589889236" ry="2.272081794944618" fill="#1fbe3c" filter="url(#fr2)" opacity="1" transform="rotate(0 82.4 174.7)"/><ellipse cx="85.2" cy="184.6" rx="8.520306731042318" ry="2.840102243680773" fill="#1fbe3c" filter="url(#fr3)" opacity="1" transform="rotate(0 85.2 184.6)"/><ellipse cx="31.2" cy="76.7" rx="6.248224936097699" ry="3.408122692416927" fill="#1fbe3c" filter="url(#fr1)" opacity="1" transform="rotate(-25 31.2 76.7)"/><ellipse cx="4.3" cy="66.7" rx="5.112184038625391" ry="19.880715705765407" fill="#3f69b2" filter="url(#fr4)" opacity="1" transform="rotate(0 4.3 66.7)"/><ellipse cx="24.1" cy="127.8" rx="6.248224936097699" ry="8.520306731042318" fill="#3f69b2" filter="url(#fr3)" opacity="1" transform="rotate(0 24.1 127.8)"/><ellipse cx="51.1" cy="140.6" rx="4.544163589889236" ry="8.520306731042318" fill="#34a6b4" filter="url(#fr3)" opacity="1" transform="rotate(0 51.1 140.6)"/><ellipse cx="8.5" cy="193.1" rx="8.520306731042318" ry="5.680204487361546" fill="#3f69b2" filter="url(#fr3)" opacity="1" transform="rotate(0 8.5 193.1)"/><ellipse cx="134.9" cy="220.1" rx="5.680204487361546" ry="3.9761431411530817" fill="#1fbe3c" filter="url(#fr1)" opacity="1" transform="rotate(0 134.9 220.1)"/><ellipse cx="164.7" cy="204.5" rx="2.840102243680773" ry="2.840102243680773" fill="#46e25a" filter="url(#fr1)" opacity="1" transform="rotate(0 164.7 204.5)"/><ellipse cx="147.7" cy="220.1" rx="8.520306731042318" ry="3.9761431411530817" fill="#3f69b2" filter="url(#fr4)" opacity="1" transform="rotate(0 147.7 220.1)"/><ellipse cx="102.2" cy="241.4" rx="5.112184038625391" ry="8.520306731042318" fill="#3f69b2" filter="url(#fr2)" opacity="1" transform="rotate(20 102.2 241.4)"/><ellipse cx="106.5" cy="242.8" rx="2.840102243680773" ry="3.9761431411530817" fill="#1fbe3c" filter="url(#fr1)" opacity="1" transform="rotate(0 106.5 242.8)"/><ellipse cx="130.6" cy="233.4" rx="3.408122692416927" ry="3.408122692416927" fill="#1fbe3c" filter="url(#fr1)" opacity="1" transform="rotate(0 130.6 233.4)"/><ellipse cx="28.4" cy="272.6" rx="11.360408974723091" ry="34.08122692416927" fill="#6f8fc4" filter="url(#fr3)" opacity="0.4" transform="rotate(-25 28.4 272.6)"/><ellipse cx="100.8" cy="323.7" rx="5.112184038625391" ry="2.272081794944618" fill="#34a6b4" filter="url(#fr3)" opacity="1" transform="rotate(0 100.8 323.7)"/><g font-family="Liberation Sans,sans-serif"><text x="5.7" y="85.5" font-size="8" fill="#8f8f8f" textLength="63.9" lengthAdjust="spacing" >WASHINGTON</text><text x="1.4" y="154.3" font-size="8" fill="#8f8f8f" textLength="36.1" lengthAdjust="spacing" >OREGON</text><text x="96.6" y="150.6" font-size="8" fill="#8f8f8f" textLength="30.4" lengthAdjust="spacing" >IDAHO</text><text x="179.5" y="78.7" font-size="8" fill="#8f8f8f" textLength="46.3" lengthAdjust="spacing" >MONTANA</text><text x="215.0" y="175.6" font-size="8" fill="#8f8f8f" textLength="47.0" lengthAdjust="spacing" >WYOMING</text><text x="321.8" y="67.4" font-size="8" fill="#8f8f8f" textLength="76.6" lengthAdjust="spacing" >NORTH DAKOTA</text><text x="321.0" y="142.9" font-size="8" fill="#8f8f8f" textLength="76.0" lengthAdjust="spacing" >SOUTH DAKOTA</text><text x="437.6" y="81.6" font-size="8" fill="#8f8f8f" textLength="56.0" lengthAdjust="spacing" >MINNESOTA</text><text x="469.0" y="190.9" font-size="8" fill="#8f8f8f" textLength="24.6" lengthAdjust="spacing" >IOWA</text><text x="341.6" y="213.9" font-size="8" fill="#8f8f8f" textLength="52.0" lengthAdjust="spacing" >NEBRASKA</text><text x="497.0" y="129.3" font-size="8" fill="#8f8f8f" textLength="60.5" lengthAdjust="spacing" >WISCONSIN</text><text x="525.0" y="231.4" font-size="8" fill="#8f8f8f" textLength="55.0" lengthAdjust="spacing" >ILLINOIS</text><text x="601.0" y="199.7" font-size="8" fill="#8f8f8f" textLength="48.2" lengthAdjust="spacing" >MICHIGAN</text><text x="644.0" y="227.3" font-size="8" fill="#8f8f8f" textLength="22.0" lengthAdjust="spacing" >OHIO</text><text x="582.5" y="255.6" font-size="8" fill="#8f8f8f" textLength="39.5" lengthAdjust="spacing" >INDIANA</text><text x="593.8" y="301.9" font-size="8" fill="#8f8f8f" textLength="52.6" lengthAdjust="spacing" >KENTUCKY</text><text x="710.3" y="292.5" font-size="8" fill="#8f8f8f" textLength="43.4" lengthAdjust="spacing" >VIRGINIA</text><text x="567.4" y="345.7" font-size="8" fill="#8f8f8f" textLength="57.6" lengthAdjust="spacing" >TENNESSEE</text><text x="728.7" y="347.1" font-size="8" fill="#8f8f8f" textLength="32.7" lengthAdjust="spacing" >NORTH</text><text x="721.6" y="354.9" font-size="8" fill="#8f8f8f" textLength="48.4" lengthAdjust="spacing" >CAROLINA</text><text x="684.7" y="372.6" font-size="8" fill="#8f8f8f" textLength="34.1" lengthAdjust="spacing" >SOUTH</text><text x="677.6" y="379.9" font-size="8" fill="#8f8f8f" textLength="48.9" lengthAdjust="spacing" >CAROLINA</text><text x="629.3" y="397.6" font-size="8" fill="#8f8f8f" textLength="44.0" lengthAdjust="spacing" >GEORGIA</text><text x="569.0" y="407.9" font-size="8" fill="#8f8f8f" textLength="45.6" lengthAdjust="spacing" >ALABAMA</text><text x="626.0" y="448.7" font-size="8" fill="#8f8f8f" textLength="41.7" lengthAdjust="spacing" >FLORIDA</text><text x="375.7" y="278.3" font-size="8" fill="#8f8f8f" textLength="38.3" lengthAdjust="spacing" >KANSAS</text><text x="387.0" y="350.8" font-size="8" fill="#8f8f8f" textLength="54.0" lengthAdjust="spacing" >OKLAHOMA</text><text x="465.2" y="357.9" font-size="8" fill="#8f8f8f" textLength="53.1" lengthAdjust="spacing" >ARKANSAS</text><text x="362.4" y="422.6" font-size="8" fill="#8f8f8f" textLength="30.4" lengthAdjust="spacing" >TEXAS</text><text x="481.7" y="443.6" font-size="8" fill="#8f8f8f" textLength="52.5" lengthAdjust="spacing" >LOUISIANA</text><text x="245.7" y="266.9" font-size="8" fill="#8f8f8f" textLength="53.3" lengthAdjust="spacing" >COLORADO</text><text x="228.6" y="365.9" font-size="8" fill="#8f8f8f" textLength="64.8" lengthAdjust="spacing" >NEW MEXICO</text><text x="60.2" y="268.4" font-size="8" fill="#8f8f8f" textLength="37.8" lengthAdjust="spacing" >NEVADA</text><text x="156.2" y="260.7" font-size="8" fill="#8f8f8f" textLength="24.1" lengthAdjust="spacing" >UTAH</text><text x="-4.0" y="308.2" font-size="8" fill="#8f8f8f" textLength="59.4" lengthAdjust="spacing" >CALIFORNIA</text><text x="150.0" y="360.7" font-size="8" fill="#8f8f8f" textLength="42.6" lengthAdjust="spacing" >ARIZONA</text><text x="340.8" y="202.0" font-size="9" fill="#8a8a8a" textLength="159.9" lengthAdjust="spacing" font-style="italic">GREAT PLAINS</text><text x="66.7" y="248.9" font-size="7.5" fill="#8a8a8a" textLength="48.3" lengthAdjust="spacing" font-style="italic">GREAT</text><text x="71.0" y="258.3" font-size="7.5" fill="#8a8a8a" textLength="45.4" lengthAdjust="spacing" font-style="italic">BASIN</text><text x="173.2" y="323.6" font-size="7.5" fill="#8a8a8a" textLength="49.8" lengthAdjust="spacing" font-style="italic">COLORADO</text><text x="178.4" y="332.1" font-size="7.5" fill="#8a8a8a" textLength="40.3" lengthAdjust="spacing" font-style="italic">PLATEAU</text><path id="pRM" d="M100.0 -8.5 L115.0 19.9 L133.5 54.0 L153.4 85.2 L167.6 110.8 L181.8 142.0 L187.4 159.0" fill="none"/><text font-size="8" fill="#8a8a8a" letter-spacing="6.5" font-style="italic"><textPath href="#pRM">ROCKY MOUNTAINS</textPath></text><path id="pAP" d="M637.3 331.1 L657.7 312.4 L677.6 294.8 L697.5 276.9 L717.4 258.4 L745.8 227.2 L762.8 207.3" fill="none"/><text font-size="8" fill="#8a8a8a" letter-spacing="4.2" font-style="italic"><textPath href="#pAP">APPALACHIAN MOUNTAINS</textPath></text><path id="pPI" d="M675.3 370.3 L691.8 356.4 L711.7 341.3 L731.6 325.1 L741.5 315.2" fill="none"/><text font-size="8" fill="#8a8a8a" letter-spacing="3.6" font-style="italic"><textPath href="#pPI">PIEDMONT</textPath></text><path id="pCP" d="M577.6 432.2 L603.8 427.7 L632.2 421.4 L657.7 413.2 L677.6 401.8 L697.5 389.0" fill="none"/><text font-size="8" fill="#8a8a8a" letter-spacing="5.2" font-style="italic"><textPath href="#pCP">COASTAL PLAIN</textPath></text><text x="578.0" y="55.3" font-size="7.8" fill="#6a9cc0" textLength="19.0" lengthAdjust="spacing" font-style="italic">Lake</text><text x="572.0" y="62.8" font-size="7.8" fill="#6a9cc0" textLength="32.0" lengthAdjust="spacing" font-style="italic">Superior</text><text x="605.0" y="106.5" font-size="7.8" fill="#6a9cc0" textLength="19.0" lengthAdjust="spacing" font-style="italic">Lake</text><text x="598.0" y="114.1" font-size="7.8" fill="#6a9cc0" textLength="33.0" lengthAdjust="spacing" font-style="italic">Michigan</text><text x="659.7" y="126.3" font-size="7.8" fill="#6a9cc0" textLength="18.3" lengthAdjust="spacing" font-style="italic">Lake</text><text x="657.7" y="133.8" font-size="7.8" fill="#6a9cc0" textLength="22.7" lengthAdjust="spacing" font-style="italic">Huron</text><text x="723.0" y="161.3" font-size="7.8" fill="#6a9cc0" textLength="40.0" lengthAdjust="spacing" font-style="italic">Lake Ontario</text><text x="669.0" y="197.3" font-size="7.8" fill="#6a9cc0" textLength="31.0" lengthAdjust="spacing" font-style="italic">Lake Erie</text><text x="96.6" y="172.8" font-size="7.8" fill="#6a9cc0" textLength="18.4" lengthAdjust="spacing" font-style="italic">Snake</text><text x="262.7" y="47.4" font-size="7.8" fill="#6a9cc0" textLength="26.3" lengthAdjust="spacing" font-style="italic">Missouri</text><text x="547.0" y="10.8" font-size="7.8" fill="#6a9cc0" textLength="23.0" lengthAdjust="spacing" font-style="italic">Nipigon</text><text font-size="7.500" fill="#6a9cc0" font-style="italic" transform="translate(22,52) rotate(-20)">Columbia</text><text font-size="7.500" fill="#6a9cc0" font-style="italic" transform="translate(449,62) rotate(22)">Mississippi</text><text font-size="7.500" fill="#6a9cc0" font-style="italic" transform="translate(233,251) rotate(-28)">Colorado</text><text font-size="7.500" fill="#6a9cc0" font-style="italic" transform="translate(246,283) rotate(30)">Rio Grande</text><text font-size="7.500" fill="#6a9cc0" font-style="italic" transform="translate(337,281) rotate(10)">Arkansas</text><text font-size="7.500" fill="#6a9cc0" font-style="italic" transform="translate(579,287) rotate(-8)">Ohio</text><g font-family="Liberation Serif,serif" fill="#3a3a3a"><text x="341.6" y="238.4" font-size="11.5" fill="#3a3a3a" textLength="69.6" lengthAdjust="spacing" >UNITED</text><text x="345.9" y="254.1" font-size="11.5" fill="#3a3a3a" textLength="65.3" lengthAdjust="spacing" >STATES</text></g><g stroke="#fff" stroke-width="1.200" stroke-opacity=".6" stroke-linejoin="round" paint-order="stroke"><text x="-28.0" y="15.0" font-size="8.3" fill="#444" textLength="42.0" lengthAdjust="spacing" >Vancouver</text><text x="432.5" y="123.0" font-size="8.3" fill="#444" textLength="48.3" lengthAdjust="spacing" >Minneapolis</text><text x="541.9" y="168.6" font-size="8.3" fill="#444" textLength="42.1" lengthAdjust="spacing" >Milwaukee</text><text x="541.0" y="199.8" font-size="8.3" fill="#444" textLength="30.0" lengthAdjust="spacing" >Chicago</text><text x="684.7" y="159.8" font-size="8.3" fill="#444" textLength="34.1" lengthAdjust="spacing" >Toronto</text><text x="751.4" y="124.5" font-size="8.3" fill="#444" textLength="27.0" lengthAdjust="spacing" >Ottawa</text><text x="818.0" y="111.0" font-size="8.3" fill="#444" textLength="34.0" lengthAdjust="spacing" >Montreal</text><text x="834.7" y="78.0" font-size="8.3" fill="#444" textLength="27.3" lengthAdjust="spacing" >Quebec</text><text x="598.0" y="170.6" font-size="8.3" fill="#444" textLength="55.5" lengthAdjust="spacing" >Grand Rapids</text><text x="624.5" y="189.0" font-size="8.3" fill="#444" textLength="27.5" lengthAdjust="spacing" >Detroit</text><text x="635.0" y="211.7" font-size="8.3" fill="#444" textLength="39.8" lengthAdjust="spacing" >Cleveland</text><text x="700.3" y="228.8" font-size="8.3" fill="#444" textLength="37.7" lengthAdjust="spacing" >Pittsburgh</text><text x="806.0" y="192.7" font-size="8.3" fill="#444" textLength="23.5" lengthAdjust="spacing" >Albany</text><text x="147.0" y="213.4" font-size="8.3" fill="#444" textLength="16.0" lengthAdjust="spacing" >Salt</text><text x="-30.0" y="269.4" font-size="8.3" fill="#444" textLength="42.0" lengthAdjust="spacing" >Sacramento</text><text x="25.0" y="324.5" font-size="8.3" fill="#444" textLength="27.5" lengthAdjust="spacing" >Fresno</text><text x="69.6" y="321.0" font-size="8.3" fill="#444" textLength="42.4" lengthAdjust="spacing" >Las Vegas</text><text x="55.4" y="366.0" font-size="8.3" fill="#444" textLength="49.6" lengthAdjust="spacing" >Los Angeles</text><text x="27.5" y="397.7" font-size="8.3" fill="#444" textLength="43.5" lengthAdjust="spacing" >San Diego</text><text x="81.0" y="409.0" font-size="8.3" fill="#444" textLength="29.0" lengthAdjust="spacing" >Tijuana</text><text x="161.9" y="377.8" font-size="8.3" fill="#444" textLength="31.1" lengthAdjust="spacing" >Phoenix</text><text x="165.6" y="402.8" font-size="8.3" fill="#444" textLength="28.9" lengthAdjust="spacing" >Tucson</text><text x="221.0" y="414.8" font-size="8.3" fill="#444" textLength="31.0" lengthAdjust="spacing" >El Paso</text><text x="282.0" y="243.8" font-size="8.3" fill="#444" textLength="28.4" lengthAdjust="spacing" >Denver</text><text x="461.0" y="258.0" font-size="8.3" fill="#444" textLength="49.6" lengthAdjust="spacing" >Kansas City</text><text x="533.0" y="269.4" font-size="8.3" fill="#444" textLength="33.0" lengthAdjust="spacing" >St. Louis</text><text x="392.0" y="328.0" font-size="8.3" fill="#444" textLength="42.0" lengthAdjust="spacing" >Oklahoma</text><text x="406.4" y="336.0" font-size="8.3" fill="#444" textLength="14.2" lengthAdjust="spacing" >City</text><text x="497.0" y="343.8" font-size="8.3" fill="#444" textLength="36.3" lengthAdjust="spacing" >Memphis</text><text x="548.0" y="329.6" font-size="8.3" fill="#444" textLength="40.0" lengthAdjust="spacing" >Nashville</text><text x="405.5" y="442.3" font-size="8.3" fill="#444" textLength="25.5" lengthAdjust="spacing" >Austin</text><text x="358.0" y="459.4" font-size="8.3" fill="#444" textLength="49.0" lengthAdjust="spacing" >San Antonio</text><text x="537.0" y="461.6" font-size="8.3" fill="#444" textLength="54.0" lengthAdjust="spacing" >New Orleans</text><text x="556.0" y="243.0" font-size="8.3" fill="#444" textLength="49.0" lengthAdjust="spacing" >Indianapolis</text><text x="636.4" y="239.2" font-size="8.3" fill="#444" textLength="41.2" lengthAdjust="spacing" >Columbus</text><text x="633.6" y="258.6" font-size="8.3" fill="#444" textLength="39.7" lengthAdjust="spacing" >Cincinnati</text><text x="612.9" y="290.4" font-size="8.3" fill="#444" textLength="37.7" lengthAdjust="spacing" >Louisville</text><text x="723.0" y="305.4" font-size="8.3" fill="#444" textLength="41.2" lengthAdjust="spacing" >Richmond</text><text x="772.7" y="307.7" font-size="8.3" fill="#444" textLength="29.9" lengthAdjust="spacing" >Norfolk</text><text x="793.5" y="252.9" font-size="8.3" fill="#444" textLength="50.3" lengthAdjust="spacing" >Philadelphia</text><text x="760.0" y="270.8" font-size="8.3" fill="#444" textLength="49.7" lengthAdjust="spacing" >Washington</text><text x="674.0" y="323.3" font-size="8.3" fill="#444" textLength="47.0" lengthAdjust="spacing" >Greensboro</text><text x="735.3" y="332.4" font-size="8.3" fill="#444" textLength="31.7" lengthAdjust="spacing" >Raleigh</text><text x="667.7" y="341.5" font-size="8.3" fill="#444" textLength="37.3" lengthAdjust="spacing" >Charlotte</text><text x="599.5" y="331.8" font-size="8.3" fill="#444" textLength="36.9" lengthAdjust="spacing" >Knoxville</text><text x="626.5" y="361.7" font-size="8.3" fill="#444" textLength="39.7" lengthAdjust="spacing" >Greenville</text><text x="567.4" y="389.5" font-size="8.3" fill="#444" textLength="48.6" lengthAdjust="spacing" >Birmingham</text><text x="685.6" y="450.3" font-size="8.3" fill="#444" textLength="48.2" lengthAdjust="spacing" >Jacksonville</text></g><text x="139.0" y="221.6" font-size="8.3" fill="#444" textLength="34.3" lengthAdjust="spacing" >Lake City</text><g fill="#fff" stroke="#666" stroke-width=".8"><circle cx="29.3" cy="312.9" r="1.500"/><circle cx="55.4" cy="369.2" r="1.500"/><circle cx="74.4" cy="397.6" r="1.500"/><circle cx="76.1" cy="401.0" r="1.500"/><circle cx="178.9" cy="406.7" r="1.500"/><circle cx="255.6" cy="416.6" r="1.500"/><circle cx="0.0" cy="274.0" r="1.500"/><circle cx="409.0" cy="340.2" r="1.500"/><circle cx="536.8" cy="346.4" r="1.500"/><circle cx="404.7" cy="445.8" r="1.500"/><circle cx="445.3" cy="456.4" r="1.500"/><circle cx="534.2" cy="272.6" r="1.500"/><circle cx="536.8" cy="452.4" r="1.500"/><circle cx="657.2" cy="243.3" r="1.500"/><circle cx="609.4" cy="281.1" r="1.500"/><circle cx="751.4" cy="296.2" r="1.500"/><circle cx="771.9" cy="310.9" r="1.500"/><circle cx="790.4" cy="243.3" r="1.500"/><circle cx="711.7" cy="327.1" r="1.500"/><circle cx="731.6" cy="333.1" r="1.500"/><circle cx="693.8" cy="345.0" r="1.500"/><circle cx="640.1" cy="328.8" r="1.500"/><circle cx="592.4" cy="326.0" r="1.500"/><circle cx="666.8" cy="353.5" r="1.500"/><circle cx="591.8" cy="380.5" r="1.500"/><circle cx="679.6" cy="445.0" r="1.500"/><circle cx="603.2" cy="247.0" r="1.500"/><circle cx="573.1" cy="172.4" r="1.500"/><circle cx="656.3" cy="188.9" r="1.500"/><circle cx="720.2" cy="157.1" r="1.500"/><circle cx="415.5" cy="2.3" r="1.500"/><circle cx="428.3" cy="154.8" r="1.500"/></g></g></svg>
<div class="a" style="left:1064.500px;top:84.500px;width:43px;height:43px;background:#414141"></div>
<svg class="a" style="left:1068.5px;top:88.5px" width="35" height="35" viewBox="0 0 35 35"><defs><linearGradient id="lb1" x1="0" y1="0" x2="0" y2="1"><stop offset="0" stop-color="#c4c4c4"/><stop offset="1" stop-color="#a2a2a2"/></linearGradient></defs><rect x=".8" y=".8" width="33.400" height="33.400" rx="3" fill="url(#lb1)" stroke="#a8683a" stroke-width="1.400"/><path d="M4 21 L17.500 15 L31 21 L17.500 27.500Z" fill="#6f6f6f"/><path d="M4 17.500 L17.500 11.500 L31 17.500 L17.500 24Z" fill="#8c8c8c"/><path d="M4 13.500 L17.500 7 L31 13.500 L17.500 20Z" fill="#c9c9c9" stroke="#aaa" stroke-width=".5"/></svg>
<div class="dot g" style="left:349.7px;top:235.3px;width:8.600px;height:8.600px"></div><div class="lbl" style="left:360.2px;top:233.6px;">Boise</div>
<div class="dot g" style="left:741.5px;top:203.2px;width:8.600px;height:8.600px"></div><div class="lbl" style="left:752.0px;top:201.5px;">Minneapolis</div>
<div class="dot g" style="left:837.7px;top:276.3px;width:8.600px;height:8.600px"></div><div class="lbl" style="left:848.2px;top:274.6px;">Chicago</div>
<div class="dot g" style="left:938.7px;top:285.2px;width:8.600px;height:8.600px"></div><div class="lbl" style="left:949.2px;top:283.5px;">Cleveland</div>
<div class="dot g" style="left:696.0px;top:290.1px;width:8.600px;height:8.600px"></div><div class="lbl" style="left:706.5px;top:288.4px;">Omaha</div>
<div class="dot g" style="left:719.7px;top:340.1px;width:8.600px;height:8.600px"></div><div class="lbl" style="left:730.2px;top:338.4px;">Kansas City</div>
<div class="dot g" style="left:852.7px;top:337.2px;width:8.600px;height:8.600px"></div><div class="lbl" style="left:863.2px;top:335.5px;">Nashville</div>
<div class="dot g" style="left:893.2px;top:452.3px;width:8.600px;height:8.600px"></div><div class="lbl" style="left:903.7px;top:450.6px;">Atlanta</div>
<div class="dot g" style="left:681.7px;top:471.3px;width:8.600px;height:8.600px"></div><div class="lbl" style="left:692.2px;top:469.6px;">Dallas</div>
<div class="dot g" style="left:542.2px;top:324.7px;width:8.600px;height:8.600px"></div><div class="lbl" style="left:552.7px;top:323.0px;">Denver</div>
<div class="dot g" style="left:368.0px;top:401.7px;width:8.600px;height:8.600px"></div><div class="lbl" style="left:378.5px;top:400.0px;">Las Vegas</div>
<div class="dot g" style="left:420.7px;top:457.9px;width:8.600px;height:8.600px"></div><div class="lbl" style="left:431.2px;top:456.2px;">Phoenix</div>
<div class="dot g" style="left:1070.5px;top:302.7px;width:8.600px;height:8.600px"></div><div class="lbl" style="left:1081.0px;top:301.0px;width:30px;overflow:hidden;">New York</div>
<div class="a" style="left:1016.0999999999999px;top:332.1px;width:23px;height:23px;border-radius:50%;background:rgba(140,235,140,.75)"></div><div class="a" style="left:1019.5999999999999px;top:335.6px;width:16px;height:16px;border-radius:50%;background:#6cc76c;color:#111;font-size:9px;line-height:16px;text-align:center">2</div>
<div class="a" style="left:317.8px;top:452.5px;width:23px;height:23px;border-radius:50%;background:rgba(140,235,140,.75)"></div><div class="a" style="left:321.3px;top:456px;width:16px;height:16px;border-radius:50%;background:#6cc76c;color:#111;font-size:9px;line-height:16px;text-align:center">3</div>

</body></html>
